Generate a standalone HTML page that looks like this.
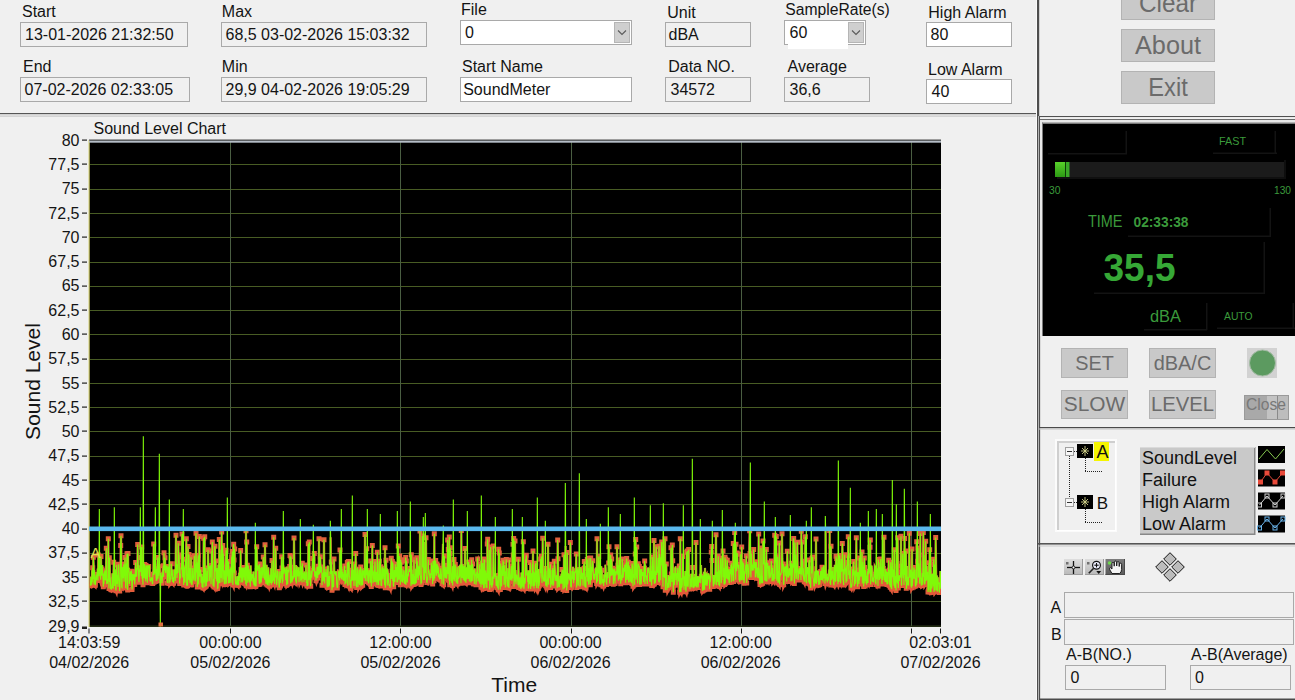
<!DOCTYPE html>
<html><head><meta charset="utf-8"><style>
html,body{margin:0;padding:0;background:#f0f0f0;width:1295px;height:700px;overflow:hidden}
svg{display:block}
text{font-family:"Liberation Sans", sans-serif}
</style></head><body>
<svg width="1295" height="700" viewBox="0 0 1295 700">
<rect x="0" y="0" width="1295" height="700" fill="#f0f0f0"/>
<text x="22" y="17" font-size="16" fill="#141414" >Start</text>
<text x="23" y="72" font-size="16" fill="#141414" >End</text>
<text x="221.8" y="17" font-size="16" fill="#141414" >Max</text>
<text x="221.8" y="72" font-size="16" fill="#141414" >Min</text>
<text x="461" y="14.5" font-size="16" fill="#141414" >File</text>
<text x="462" y="71.5" font-size="16" fill="#141414" >Start Name</text>
<text x="667.2" y="18" font-size="16" fill="#141414" >Unit</text>
<text x="668.2" y="71.5" font-size="16" fill="#141414" >Data NO.</text>
<text x="785.3" y="14.5" font-size="16" fill="#141414" textLength="104.5" lengthAdjust="spacingAndGlyphs" >SampleRate(s)</text>
<text x="787.5" y="71.5" font-size="16" fill="#141414" >Average</text>
<text x="928.3" y="18" font-size="16" fill="#141414" >High Alarm</text>
<text x="928" y="75" font-size="16" fill="#141414" >Low Alarm</text>
<rect x="20.5" y="22.5" width="167" height="24" fill="#f0f0f0" stroke="#a9a9a9" stroke-width="1" />
<text x="25" y="40" font-size="16" fill="#141414" >13-01-2026 21:32:50</text>
<rect x="20.5" y="77.5" width="169" height="24" fill="#f0f0f0" stroke="#a9a9a9" stroke-width="1" />
<text x="24.5" y="94.5" font-size="16" fill="#141414" >07-02-2026 02:33:05</text>
<rect x="221.5" y="22.5" width="205" height="24" fill="#f0f0f0" stroke="#a9a9a9" stroke-width="1" />
<text x="225.5" y="40" font-size="16" fill="#141414" >68,5 03-02-2026 15:03:32</text>
<rect x="221.5" y="77.5" width="205" height="24" fill="#f0f0f0" stroke="#a9a9a9" stroke-width="1" />
<text x="225.5" y="94.5" font-size="16" fill="#141414" >29,9 04-02-2026 19:05:29</text>
<rect x="460.5" y="20.5" width="171" height="24" fill="#ffffff" stroke="#a9a9a9" stroke-width="1" />
<rect x="614.5" y="22.5" width="15" height="20" fill="#cfcfcf" stroke="#b5b5b5" stroke-width="1" />
<polyline points="618.0,30.5 622.0,34.5 626.0,30.5" fill="none" stroke="#5a5a5a" stroke-width="1.1"/>
<text x="465" y="38" font-size="16" fill="#141414" >0</text>
<rect x="460.5" y="77.5" width="171" height="24" fill="#ffffff" stroke="#a9a9a9" stroke-width="1" />
<text x="463.2" y="94.5" font-size="16" fill="#141414" >SoundMeter</text>
<rect x="665.5" y="22.5" width="85" height="24" fill="#f0f0f0" stroke="#a9a9a9" stroke-width="1" />
<text x="668.5" y="39.5" font-size="16" fill="#141414" >dBA</text>
<rect x="665.5" y="77.5" width="85" height="24" fill="#f0f0f0" stroke="#a9a9a9" stroke-width="1" />
<text x="670.5" y="94.5" font-size="16" fill="#141414" >34572</text>
<rect x="784.5" y="20.5" width="81" height="24" fill="#ffffff" stroke="#a9a9a9" stroke-width="1" />
<rect x="788" y="44" width="60" height="5" fill="#ffffff" />
<rect x="848.5" y="22.5" width="15" height="20" fill="#cfcfcf" stroke="#b5b5b5" stroke-width="1" />
<polyline points="852.0,30.5 856.0,34.5 860.0,30.5" fill="none" stroke="#5a5a5a" stroke-width="1.1"/>
<text x="789.5" y="38" font-size="16" fill="#141414" >60</text>
<rect x="784.5" y="77.5" width="85" height="24" fill="#f0f0f0" stroke="#a9a9a9" stroke-width="1" />
<text x="789.5" y="94.5" font-size="16" fill="#141414" >36,6</text>
<rect x="926.5" y="22.5" width="85" height="24" fill="#ffffff" stroke="#a9a9a9" stroke-width="1" />
<text x="930.5" y="39.5" font-size="16" fill="#141414" >80</text>
<rect x="926.5" y="79.5" width="85" height="24" fill="#ffffff" stroke="#a9a9a9" stroke-width="1" />
<text x="931.5" y="96.5" font-size="16" fill="#141414" >40</text>
<rect x="0" y="113" width="1037" height="1.2" fill="#555555" />
<rect x="0" y="115.5" width="1037" height="1.2" fill="#c8c8c8" />
<rect x="1036" y="0" width="1" height="700" fill="#fafafa" />
<rect x="1037" y="0" width="1" height="700" fill="#4e4e4e" />
<rect x="1038" y="0" width="1" height="116" fill="#4e4e4e" />
<rect x="1038" y="116" width="1" height="584" fill="#b4b4b4" />
<rect x="1039" y="116" width="1" height="584" fill="#505050" />
<rect x="1039" y="0" width="1" height="116" fill="#d0d0d0" />
<rect x="1040" y="116" width="1" height="584" fill="#dadada" />
<rect x="1121.5" y="-12.5" width="93" height="32" fill="#c9c9c9" stroke="#b3b3b3" stroke-width="1" />
<text x="1168.0" y="11.8" font-size="25" fill="#6b6b6b" text-anchor="middle" textLength="58" lengthAdjust="spacingAndGlyphs" >Clear</text>
<rect x="1121.5" y="29.5" width="93" height="32" fill="#c9c9c9" stroke="#b3b3b3" stroke-width="1" />
<text x="1168.0" y="54" font-size="25" fill="#6b6b6b" text-anchor="middle" textLength="66" lengthAdjust="spacingAndGlyphs" >About</text>
<rect x="1121.5" y="71.5" width="93" height="32" fill="#c9c9c9" stroke="#b3b3b3" stroke-width="1" />
<text x="1168.0" y="95.5" font-size="25" fill="#6b6b6b" text-anchor="middle" textLength="39.5" lengthAdjust="spacingAndGlyphs" >Exit</text>
<rect x="1039" y="116" width="256" height="1.2" fill="#505050" />
<rect x="1040" y="117.2" width="255" height="1.8" fill="#f0f0f0" />
<rect x="1040" y="119" width="255" height="1" fill="#6a6a6a" />
<rect x="1040" y="120" width="255" height="2.5" fill="#e8e8e8" />
<rect x="1040" y="120" width="2" height="216" fill="#e8e8e8" />
<rect x="1042" y="122.5" width="253" height="1.5" fill="#7a7a7a" />
<rect x="1042" y="122.5" width="1" height="213.5" fill="#7a7a7a" />
<rect x="1043" y="124" width="252" height="212" fill="#000000" />
<rect x="1048" y="153" width="79" height="1.5" fill="#131313" />
<rect x="1125.5" y="131" width="1.5" height="23" fill="#131313" />
<rect x="1213" y="152.5" width="64" height="1.5" fill="#131313" />
<rect x="1274.5" y="131" width="1.5" height="23" fill="#131313" />
<text x="1219" y="145" font-size="11" fill="#3b9a3b" textLength="27" lengthAdjust="spacingAndGlyphs" >FAST</text>
<rect x="1055" y="162" width="229" height="15" fill="#1b1b1b" />
<rect x="1057" y="177" width="229" height="2" fill="#101010" />
<rect x="1284" y="160" width="2" height="19" fill="#0e0e0e" />
<defs><linearGradient id="gbar" x1="0" y1="0" x2="0" y2="1"><stop offset="0" stop-color="#58d02a"/><stop offset="1" stop-color="#2c9a14"/></linearGradient></defs>
<rect x="1055" y="162" width="10" height="15" fill="url(#gbar)" />
<rect x="1065" y="162" width="1" height="15" fill="#0d3a08" />
<rect x="1066" y="162" width="3.5" height="15" fill="#3aa828" />
<text x="1049" y="193.5" font-size="11" fill="#3b9a3b" textLength="11.5" lengthAdjust="spacingAndGlyphs" >30</text>
<text x="1274" y="194" font-size="11" fill="#3b9a3b" textLength="17" lengthAdjust="spacingAndGlyphs" >130</text>
<text x="1088" y="227" font-size="17" fill="#3b9a3b" textLength="34.5" lengthAdjust="spacingAndGlyphs" >TIME</text>
<text x="1133.5" y="227" font-size="15" fill="#3b9a3b" font-weight="700" textLength="55" lengthAdjust="spacingAndGlyphs" >02:33:38</text>
<rect x="1128" y="235.5" width="143" height="1.5" fill="#131313" />
<rect x="1269.5" y="208" width="1.5" height="28" fill="#131313" />
<text x="1103.5" y="281" font-size="39" fill="#36a836" font-weight="700" textLength="72" lengthAdjust="spacingAndGlyphs" >35,5</text>
<rect x="1094" y="292.5" width="171" height="1.5" fill="#131313" />
<rect x="1263.5" y="242" width="1.5" height="52" fill="#131313" />
<text x="1150" y="322" font-size="16" fill="#3b9a3b" textLength="31" lengthAdjust="spacingAndGlyphs" >dBA</text>
<rect x="1144" y="329" width="63" height="1.5" fill="#131313" />
<rect x="1206" y="303" width="1.5" height="27" fill="#131313" />
<text x="1224" y="320" font-size="11" fill="#3b9a3b" textLength="28.5" lengthAdjust="spacingAndGlyphs" >AUTO</text>
<rect x="1217" y="327.5" width="78" height="1.5" fill="#131313" />
<rect x="1292.5" y="303" width="1.5" height="25" fill="#131313" />
<rect x="1061.5" y="348.5" width="66" height="29" fill="#c9c9c9" stroke="#b3b3b3" stroke-width="1" />
<text x="1094.5" y="369.5" font-size="21" fill="#6b6b6b" text-anchor="middle" textLength="38.5" lengthAdjust="spacingAndGlyphs" >SET</text>
<rect x="1149.5" y="348.5" width="66" height="29" fill="#c9c9c9" stroke="#b3b3b3" stroke-width="1" />
<text x="1182.5" y="369.5" font-size="21" fill="#6b6b6b" text-anchor="middle" textLength="57.5" lengthAdjust="spacingAndGlyphs" >dBA/C</text>
<rect x="1061.5" y="390.5" width="66" height="28" fill="#c9c9c9" stroke="#b3b3b3" stroke-width="1" />
<text x="1094.5" y="411" font-size="21" fill="#6b6b6b" text-anchor="middle" textLength="61.5" lengthAdjust="spacingAndGlyphs" >SLOW</text>
<rect x="1149.5" y="390.5" width="66" height="28" fill="#c9c9c9" stroke="#b3b3b3" stroke-width="1" />
<text x="1182.5" y="411" font-size="21" fill="#6b6b6b" text-anchor="middle" textLength="63" lengthAdjust="spacingAndGlyphs" >LEVEL</text>
<rect x="1247" y="348" width="30" height="30" fill="#d2d2d2" />
<circle cx="1262.5" cy="363" r="13" fill="#5c9a60" stroke="#a6bca6" stroke-width="1"/>
<rect x="1244" y="395" width="45" height="25" fill="#a9a9a9" />
<rect x="1267" y="395" width="10" height="25" fill="#c3c3c3" />
<rect x="1277" y="395" width="1" height="25" fill="#8a8a8a" />
<rect x="1278" y="395" width="11" height="25" fill="#bdbdbd" />
<rect x="1244.5" y="395.5" width="44" height="24" fill="none" stroke="#9a9a9a" stroke-width="1" />
<text x="1266" y="409.5" font-size="17" fill="#787878" text-anchor="middle" textLength="40" lengthAdjust="spacingAndGlyphs" >Close</text>
<rect x="1039" y="427" width="256" height="1.2" fill="#4a4a4a" />
<rect x="1039" y="428.5" width="256" height="1" fill="#c0c0c0" />
<rect x="1055" y="439" width="62" height="93" fill="#fbfbfb" />
<rect x="1057" y="441" width="58" height="89" fill="#cfcfcf" />
<rect x="1059" y="443" width="56" height="87" fill="#f0f0f0" />
<rect x="1115" y="441" width="1" height="89" fill="#ffffff" />
<rect x="1057" y="530" width="59" height="1" fill="#ffffff" />
<rect x="1065.5" y="447.5" width="8" height="8" fill="#f6f6f6" stroke="#a0a0a0" stroke-width="1" shape-rendering="crispEdges"/>
<rect x="1067" y="451" width="5" height="1" fill="#333333" />
<rect x="1077" y="444" width="16" height="14" fill="#000000" />
<g stroke="#d4d48a" stroke-width="0.9"><line x1="1081" y1="451" x2="1089" y2="451"/><line x1="1085" y1="446" x2="1085" y2="456"/><line x1="1082" y1="448" x2="1088" y2="454"/><line x1="1082" y1="454" x2="1088" y2="448"/></g>
<line x1="1074" y1="451.5" x2="1077" y2="451.5" stroke="#222" stroke-width="1" stroke-dasharray="1,1" shape-rendering="crispEdges"/>
<rect x="1094" y="442" width="15" height="19" fill="#f5f500" />
<text x="1096.5" y="457.5" font-size="18" fill="#111111" >A</text>
<line x1="1085.5" y1="458" x2="1085.5" y2="472" stroke="#222" stroke-width="1" stroke-dasharray="1,1" shape-rendering="crispEdges"/>
<line x1="1085" y1="471.5" x2="1102" y2="471.5" stroke="#222" stroke-width="1" stroke-dasharray="1,1" shape-rendering="crispEdges"/>
<rect x="1065.5" y="498.5" width="8" height="8" fill="#f6f6f6" stroke="#a0a0a0" stroke-width="1" shape-rendering="crispEdges"/>
<rect x="1067" y="502" width="5" height="1" fill="#333333" />
<rect x="1077" y="495" width="16" height="14" fill="#000000" />
<g stroke="#d4d48a" stroke-width="0.9"><line x1="1081" y1="502" x2="1089" y2="502"/><line x1="1085" y1="497" x2="1085" y2="507"/><line x1="1082" y1="499" x2="1088" y2="505"/><line x1="1082" y1="505" x2="1088" y2="499"/></g>
<line x1="1074" y1="502.5" x2="1077" y2="502.5" stroke="#222" stroke-width="1" stroke-dasharray="1,1" shape-rendering="crispEdges"/>
<text x="1096.8" y="508.5" font-size="17" fill="#111111" >B</text>
<line x1="1085.5" y1="509" x2="1085.5" y2="523" stroke="#222" stroke-width="1" stroke-dasharray="1,1" shape-rendering="crispEdges"/>
<line x1="1085" y1="522.5" x2="1102" y2="522.5" stroke="#222" stroke-width="1" stroke-dasharray="1,1" shape-rendering="crispEdges"/>
<line x1="1069.5" y1="456" x2="1069.5" y2="498" stroke="#222" stroke-width="1" stroke-dasharray="1,1" shape-rendering="crispEdges"/>
<rect x="1140" y="447" width="115" height="88" fill="#c9c9c9" />
<rect x="1254" y="447" width="1.5" height="88" fill="#888888" />
<rect x="1140" y="533.5" width="115" height="1.5" fill="#888888" />
<rect x="1140" y="447" width="115" height="1" fill="#dadada" />
<text x="1142" y="464" font-size="18" fill="#111111" >SoundLevel</text>
<text x="1142" y="486" font-size="18" fill="#111111" >Failure</text>
<text x="1142" y="508" font-size="18" fill="#111111" >High Alarm</text>
<text x="1142" y="530" font-size="18" fill="#111111" >Low Alarm</text>
<rect x="1258" y="446" width="27" height="17" fill="#000" />
<polyline points="1259,459 1267,449.5 1275.5,459 1284,449" fill="none" stroke="#86c850" stroke-width="1"/>
<rect x="1258" y="469.5" width="27" height="17" fill="#000" />
<polyline points="1260.5,482.0 1267,473.0 1275,482.0 1282.5,473.0" fill="none" stroke="#e04a3a" stroke-width="1"/>
<rect x="1258.0" y="479.5" width="5" height="5" fill="#e84a3a" />
<rect x="1264.5" y="470.5" width="5" height="5" fill="#e84a3a" />
<rect x="1272.5" y="479.5" width="5" height="5" fill="#e84a3a" />
<rect x="1280.0" y="470.5" width="5" height="5" fill="#e84a3a" />
<rect x="1258" y="492.5" width="27" height="17" fill="#000" />
<polyline points="1259.5,505.0 1267,496.0 1275,505.0 1283,496.0" fill="none" stroke="#d0d0d0" stroke-width="1"/>
<rect x="1257.5" y="503.0" width="4" height="4" fill="none" stroke="#d0d0d0" stroke-width="1" />
<rect x="1265" y="494.0" width="4" height="4" fill="none" stroke="#d0d0d0" stroke-width="1" />
<rect x="1273" y="503.0" width="4" height="4" fill="none" stroke="#d0d0d0" stroke-width="1" />
<rect x="1281" y="494.0" width="4" height="4" fill="none" stroke="#d0d0d0" stroke-width="1" />
<rect x="1258" y="515.5" width="27" height="17" fill="#000" />
<polyline points="1259.5,528.0 1267,519.0 1275,528.0 1283,519.0" fill="none" stroke="#6ab4ea" stroke-width="1"/>
<rect x="1257.5" y="526.0" width="4" height="4" fill="none" stroke="#6ab4ea" stroke-width="1" />
<rect x="1265" y="517.0" width="4" height="4" fill="none" stroke="#6ab4ea" stroke-width="1" />
<rect x="1273" y="526.0" width="4" height="4" fill="none" stroke="#6ab4ea" stroke-width="1" />
<rect x="1281" y="517.0" width="4" height="4" fill="none" stroke="#6ab4ea" stroke-width="1" />
<rect x="1038" y="543" width="257" height="1.6" fill="#555555" />
<rect x="1038" y="545.5" width="257" height="1" fill="#c8c8c8" />
<defs><linearGradient id="tbl" x1="0" y1="0" x2="0" y2="1"><stop offset="0" stop-color="#dedede"/><stop offset="1" stop-color="#b8b8b8"/></linearGradient><linearGradient id="tbd" x1="0" y1="0" x2="0" y2="1"><stop offset="0" stop-color="#7c7c7c"/><stop offset="1" stop-color="#5a5a5a"/></linearGradient></defs>
<rect x="1064" y="559" width="19" height="16" fill="url(#tbl)"/>
<path d="M1064,574.5H1083 M1082.5,559V575" stroke="#9c9c9c" stroke-width="1"/>
<rect x="1085" y="559" width="19" height="16" fill="url(#tbl)"/>
<path d="M1085,574.5H1104 M1103.5,559V575" stroke="#9c9c9c" stroke-width="1"/>
<rect x="1105.5" y="559" width="19.5" height="16" fill="url(#tbd)"/>
<path d="M1105.5,574.5H1125.0 M1124.5,559V575" stroke="#4a4a4a" stroke-width="1"/>
<g stroke="#111" stroke-width="1.3"><line x1="1067" y1="567.5" x2="1080" y2="567.5"/><line x1="1073.5" y1="561" x2="1073.5" y2="574"/></g><circle cx="1073.5" cy="567.5" r="1.4" fill="#fff" stroke="#111" stroke-width="0.9"/>
<rect x="1066" y="562" width="2.5" height="2.5" fill="#707070" />
<circle cx="1096.5" cy="565.2" r="3.9" fill="#eef0ff" stroke="#111" stroke-width="1.2"/><line x1="1094.3" y1="565.2" x2="1098.7" y2="565.2" stroke="#111" stroke-width="1.1"/><line x1="1096.5" y1="563" x2="1096.5" y2="567.4" stroke="#111" stroke-width="1.1"/><line x1="1093.7" y1="568.2" x2="1088.8" y2="573.2" stroke="#222" stroke-width="1.6"/><polygon points="1096.3,571 1101.2,571 1098.7,574" fill="#111"/>
<rect x="1087" y="562" width="2.5" height="2.5" fill="#707070" />
<path d="M1112,573.5 L1109.8,569.8 Q1109,568 1110.3,567.6 L1112,569 L1112,563.6 Q1112,562.4 1113,562.4 Q1114,562.4 1114,563.6 L1114.2,566.2 L1114.5,562.2 Q1114.5,561 1115.5,561 Q1116.5,561 1116.5,562.2 L1116.7,566 L1117,562.7 Q1117,561.5 1118,561.5 Q1119,561.5 1119,562.7 L1119.2,566.5 L1119.5,564.2 Q1119.5,563.2 1120.5,563.2 Q1121.6,563.2 1121.6,564.2 L1121.6,569.5 Q1121.4,572.3 1119.6,573.5 Z" fill="#f4f4f4" stroke="#111" stroke-width="0.9"/>
<circle cx="1109.5" cy="563" r="1.8" fill="#6ed84e"/>
<polygon points="1170,552.7 1176.3,559 1170,565.3 1163.7,559" fill="#bcbcbc" stroke="#111111" stroke-width="1"/>
<polygon points="1178,560.7 1184.3,567 1178,573.3 1171.7,567" fill="#bcbcbc" stroke="#111111" stroke-width="1"/>
<polygon points="1170,568.7 1176.3,575 1170,581.3 1163.7,575" fill="#bcbcbc" stroke="#111111" stroke-width="1"/>
<polygon points="1162,560.7 1168.3,567 1162,573.3 1155.7,567" fill="#bcbcbc" stroke="#111111" stroke-width="1"/>
<text x="1050.5" y="612.5" font-size="16" fill="#141414" >A</text>
<text x="1051" y="639.5" font-size="16" fill="#141414" >B</text>
<rect x="1064.5" y="592.5" width="229" height="25" fill="#f0f0f0" stroke="#a9a9a9" stroke-width="1" />
<rect x="1064.5" y="619.5" width="229" height="25" fill="#f0f0f0" stroke="#a9a9a9" stroke-width="1" />
<text x="1066" y="660" font-size="16" fill="#141414" >A-B(NO.)</text>
<text x="1191" y="660" font-size="16" fill="#141414" >A-B(Average)</text>
<rect x="1065.5" y="665.5" width="100" height="24" fill="#f0f0f0" stroke="#a9a9a9" stroke-width="1" />
<rect x="1190.5" y="665.5" width="100" height="24" fill="#f0f0f0" stroke="#a9a9a9" stroke-width="1" />
<text x="1070.5" y="682.5" font-size="16" fill="#141414" >0</text>
<text x="1195" y="682.5" font-size="16" fill="#141414" >0</text>
<rect x="1039" y="698.5" width="256" height="1.5" fill="#4a4a4a" />
<text x="93.5" y="133.8" font-size="16" fill="#141414" >Sound Level Chart</text>
<rect x="89" y="140" width="852" height="487" fill="#000000" />
<path d="M90,164.5H941 M90,189.5H941 M90,213.5H941 M90,237.5H941 M90,262.5H941 M90,286.5H941 M90,310.5H941 M90,334.5H941 M90,359.5H941 M90,383.5H941 M90,407.5H941 M90,431.5H941 M90,456.5H941 M90,480.5H941 M90,504.5H941 M90,529.5H941 M90,553.5H941 M90,577.5H941 M90,601.5H941" stroke="#485c24" stroke-width="1" fill="none"/>
<path d="M230.5,141V626 M400.5,141V626 M571.5,141V626 M741.5,141V626 M911.5,141V626" stroke="#4a5e42" stroke-width="1" fill="none"/>
<text x="79.5" y="145.8" font-size="16" fill="#141414" text-anchor="end" >80</text>
<rect x="82" y="139.5" width="5" height="1.2" fill="#222222" />
<text x="79.5" y="170.1" font-size="16" fill="#141414" text-anchor="end" >77,5</text>
<rect x="82" y="163.5" width="5" height="1.2" fill="#222222" />
<text x="79.5" y="194.3" font-size="16" fill="#141414" text-anchor="end" >75</text>
<rect x="82" y="188.5" width="5" height="1.2" fill="#222222" />
<text x="79.5" y="218.6" font-size="16" fill="#141414" text-anchor="end" >72,5</text>
<rect x="82" y="212.5" width="5" height="1.2" fill="#222222" />
<text x="79.5" y="242.9" font-size="16" fill="#141414" text-anchor="end" >70</text>
<rect x="82" y="236.5" width="5" height="1.2" fill="#222222" />
<text x="79.5" y="267.2" font-size="16" fill="#141414" text-anchor="end" >67,5</text>
<rect x="82" y="261.5" width="5" height="1.2" fill="#222222" />
<text x="79.5" y="291.4" font-size="16" fill="#141414" text-anchor="end" >65</text>
<rect x="82" y="285.5" width="5" height="1.2" fill="#222222" />
<text x="79.5" y="315.7" font-size="16" fill="#141414" text-anchor="end" >62,5</text>
<rect x="82" y="309.5" width="5" height="1.2" fill="#222222" />
<text x="79.5" y="340.0" font-size="16" fill="#141414" text-anchor="end" >60</text>
<rect x="82" y="333.5" width="5" height="1.2" fill="#222222" />
<text x="79.5" y="364.3" font-size="16" fill="#141414" text-anchor="end" >57,5</text>
<rect x="82" y="358.5" width="5" height="1.2" fill="#222222" />
<text x="79.5" y="388.5" font-size="16" fill="#141414" text-anchor="end" >55</text>
<rect x="82" y="382.5" width="5" height="1.2" fill="#222222" />
<text x="79.5" y="412.8" font-size="16" fill="#141414" text-anchor="end" >52,5</text>
<rect x="82" y="406.5" width="5" height="1.2" fill="#222222" />
<text x="79.5" y="437.1" font-size="16" fill="#141414" text-anchor="end" >50</text>
<rect x="82" y="430.5" width="5" height="1.2" fill="#222222" />
<text x="79.5" y="461.3" font-size="16" fill="#141414" text-anchor="end" >47,5</text>
<rect x="82" y="455.5" width="5" height="1.2" fill="#222222" />
<text x="79.5" y="485.6" font-size="16" fill="#141414" text-anchor="end" >45</text>
<rect x="82" y="479.5" width="5" height="1.2" fill="#222222" />
<text x="79.5" y="509.9" font-size="16" fill="#141414" text-anchor="end" >42,5</text>
<rect x="82" y="503.5" width="5" height="1.2" fill="#222222" />
<text x="79.5" y="534.2" font-size="16" fill="#141414" text-anchor="end" >40</text>
<rect x="82" y="528.5" width="5" height="1.2" fill="#222222" />
<text x="79.5" y="558.4" font-size="16" fill="#141414" text-anchor="end" >37,5</text>
<rect x="82" y="552.5" width="5" height="1.2" fill="#222222" />
<text x="79.5" y="582.7" font-size="16" fill="#141414" text-anchor="end" >35</text>
<rect x="82" y="576.5" width="5" height="1.2" fill="#222222" />
<text x="79.5" y="607.0" font-size="16" fill="#141414" text-anchor="end" >32,5</text>
<rect x="82" y="600.5" width="5" height="1.2" fill="#222222" />
<text x="79.5" y="632.2" font-size="16" fill="#141414" text-anchor="end" >29,9</text>
<rect x="82" y="626.5" width="5" height="2.5" fill="#222222" />
<text x="0" y="0" font-size="21" fill="#141414" text-anchor="middle" transform="translate(40,381.5) rotate(-90)">Sound Level</text>
<text x="89.2" y="648" font-size="16" fill="#141414" text-anchor="middle" >14:03:59</text>
<text x="89.2" y="667.5" font-size="16" fill="#141414" text-anchor="middle" >04/02/2026</text>
<text x="230.4" y="648" font-size="16" fill="#141414" text-anchor="middle" >00:00:00</text>
<text x="230.4" y="667.5" font-size="16" fill="#141414" text-anchor="middle" >05/02/2026</text>
<text x="400.5" y="648" font-size="16" fill="#141414" text-anchor="middle" >12:00:00</text>
<text x="400.5" y="667.5" font-size="16" fill="#141414" text-anchor="middle" >05/02/2026</text>
<text x="570.6" y="648" font-size="16" fill="#141414" text-anchor="middle" >00:00:00</text>
<text x="570.6" y="667.5" font-size="16" fill="#141414" text-anchor="middle" >06/02/2026</text>
<text x="740.7" y="648" font-size="16" fill="#141414" text-anchor="middle" >12:00:00</text>
<text x="740.7" y="667.5" font-size="16" fill="#141414" text-anchor="middle" >06/02/2026</text>
<text x="940.5" y="648" font-size="16" fill="#141414" text-anchor="middle" >02:03:01</text>
<text x="940.5" y="667.5" font-size="16" fill="#141414" text-anchor="middle" >07/02/2026</text>
<rect x="88.5" y="628.5" width="1" height="5" fill="#1a1a1a" />
<rect x="230" y="628.5" width="1" height="5" fill="#1a1a1a" />
<rect x="400" y="628.5" width="1" height="5" fill="#1a1a1a" />
<rect x="571" y="628.5" width="1" height="5" fill="#1a1a1a" />
<rect x="741" y="628.5" width="1" height="5" fill="#1a1a1a" />
<rect x="911" y="628.5" width="1" height="5" fill="#1a1a1a" />
<rect x="940" y="628.5" width="1" height="5" fill="#1a1a1a" />
<text x="491.2" y="691.5" font-size="21" fill="#141414" >Time</text>
<rect x="89" y="625.6" width="852" height="1" fill="#3a4a22" />
<rect x="88.5" y="140" width="1.2" height="487" fill="#d4d070" />
<rect x="89" y="139.5" width="852" height="1.2" fill="#4a4a4a" />
<rect x="89" y="140.7" width="852" height="2" fill="#b4bcc6" />
<clipPath id="plotclip"><rect x="89.5" y="141" width="851.5" height="486"/></clipPath><g clip-path="url(#plotclip)">
<path d="M90.00,584.2 L90.33,585.8 L90.67,579.8 L91.00,576.9 L91.33,578.4 L91.67,585.3 L92.00,570.3 L92.33,582.5 L92.67,567.7 L93.00,578.9 L93.33,557.2 L93.67,563.7 L94.00,584.4 L94.33,570.1 L94.67,574.8 L95.00,579.0 L95.33,585.3 L95.67,582.3 L96.00,577.7 L96.33,574.5 L96.67,580.3 L97.00,572.1 L97.33,574.6 L97.67,568.5 L98.00,580.4 L98.33,555.1 L98.67,570.8 L99.00,576.3M99.67,574.6 L100.00,564.7 L100.33,577.0 L100.67,579.8 L101.00,556.4 L101.33,575.6 L101.67,574.8 L102.00,568.9 L102.33,565.0 L102.67,575.5 L103.00,579.7 L103.33,586.7 L103.67,573.4 L104.00,584.0 L104.33,571.3 L104.67,579.9 L105.00,571.0 L105.33,571.4 L105.67,580.5 L106.00,571.0 L106.33,548.3 L106.67,584.3 L107.00,579.2 L107.33,583.8 L107.67,580.7 L108.00,577.8 L108.33,538.8 L108.67,577.0 L109.00,588.6 L109.33,557.8 L109.67,558.5 L110.00,582.0 L110.33,577.4 L110.67,589.1 L111.00,587.3 L111.33,589.7 L111.67,587.8 L112.00,583.6 L112.33,573.2 L112.67,588.1 L113.00,584.1 L113.33,588.8 L113.67,562.2 L114.00,581.4M114.67,585.9 L115.00,569.5 L115.33,571.9 L115.67,588.4 L116.00,590.8 L116.33,571.4 L116.67,564.9 L117.00,584.0 L117.33,575.7 L117.67,575.6 L118.00,587.0 L118.33,571.5 L118.67,564.2 L119.00,576.5 L119.33,581.1 L119.67,591.1 L120.00,586.0 L120.33,577.6 L120.67,545.6 L121.00,535.7 L121.33,547.2 L121.67,587.1 L122.00,587.6 L122.33,573.4 L122.67,567.1 L123.00,575.4 L123.33,578.1 L123.67,564.3 L124.00,581.7 L124.33,575.3 L124.67,574.9 L125.00,557.4 L125.33,571.8 L125.67,587.5 L126.00,587.8 L126.33,563.3 L126.67,573.8 L127.00,553.7 L127.33,579.2 L127.67,590.0 L128.00,553.5 L128.33,571.1 L128.67,572.3 L129.00,567.8 L129.33,584.0 L129.67,578.0 L130.00,581.4 L130.33,571.4 L130.67,580.6 L131.00,571.5 L131.33,571.2 L131.67,579.1 L132.00,589.6 L132.33,586.3 L132.67,573.7 L133.00,580.4 L133.33,578.7 L133.67,579.5 L134.00,574.1 L134.33,578.7 L134.67,584.5 L135.00,579.8 L135.33,571.8 L135.67,562.4 L136.00,577.0 L136.33,573.2 L136.67,576.4 L137.00,568.1 L137.33,569.4 L137.67,544.6 L138.00,568.0 L138.33,564.9 L138.67,578.1 L139.00,582.2 L139.33,573.3 L139.67,568.6 L140.00,572.1M140.67,557.6 L141.00,566.8 L141.33,576.1 L141.67,547.0 L142.00,576.9 L142.33,578.6 L142.67,578.8 L143.00,584.7M143.67,578.0 L144.00,574.2 L144.33,564.4 L144.67,564.5 L145.00,578.8 L145.33,568.3 L145.67,581.4 L146.00,565.4 L146.33,578.7 L146.67,565.2 L147.00,569.7 L147.33,582.8 L147.67,575.3 L148.00,564.8 L148.33,567.6 L148.67,566.5 L149.00,566.3 L149.33,577.0 L149.67,565.1 L150.00,581.3 L150.33,579.1 L150.67,580.7 L151.00,579.9 L151.33,577.8 L151.67,578.1 L152.00,580.3 L152.33,583.6 L152.67,583.6 L153.00,572.7 L153.33,574.2 L153.67,544.1 L154.00,575.1 L154.33,566.8 L154.67,573.5 L155.00,563.8M155.67,570.8 L156.00,576.7 L156.33,581.1 L156.67,568.7 L157.00,580.4 L157.33,566.6 L157.67,557.5 L158.00,578.8 L158.33,574.4 L158.67,574.7 L159.00,564.2M159.67,564.1 L160.00,576.5M160.67,573.5 L161.00,573.4 L161.33,578.3 L161.67,575.6 L162.00,583.2 L162.33,578.9 L162.67,572.9 L163.00,570.2 L163.33,565.7 L163.67,577.0 L164.00,552.8 L164.33,570.5 L164.67,566.6 L165.00,557.7 L165.33,567.1 L165.67,572.9 L166.00,566.6 L166.33,566.8 L166.67,565.4 L167.00,569.5 L167.33,583.0 L167.67,576.3 L168.00,566.6 L168.33,570.8 L168.67,569.8 L169.00,583.6M169.67,572.7 L170.00,582.3 L170.33,578.5 L170.67,578.2 L171.00,579.4 L171.33,563.7 L171.67,575.8 L172.00,569.7 L172.33,571.0 L172.67,582.0 L173.00,578.4 L173.33,577.3 L173.67,583.2 L174.00,578.0 L174.33,569.4 L174.67,577.5 L175.00,574.0 L175.33,581.0 L175.67,559.9 L176.00,535.3 L176.33,574.1 L176.67,563.7 L177.00,577.9 L177.33,564.2 L177.67,571.6 L178.00,572.8 L178.33,543.2 L178.67,557.1 L179.00,555.1 L179.33,565.5 L179.67,583.4 L180.00,574.0 L180.33,578.0 L180.67,577.3 L181.00,567.4 L181.33,569.4 L181.67,563.4 L182.00,534.1 L182.33,562.3 L182.67,577.4 L183.00,549.6M183.67,585.0 L184.00,569.1 L184.33,567.2 L184.67,581.0 L185.00,582.7 L185.33,567.1 L185.67,559.2 L186.00,568.1 L186.33,538.8 L186.67,585.8 L187.00,577.6 L187.33,573.7 L187.67,585.8 L188.00,546.5 L188.33,579.7 L188.67,571.6 L189.00,554.5 L189.33,580.5 L189.67,578.5 L190.00,583.2 L190.33,568.0 L190.67,581.9 L191.00,557.3 L191.33,583.5 L191.67,584.4 L192.00,584.4 L192.33,580.9 L192.67,568.1 L193.00,577.8 L193.33,575.5 L193.67,579.3 L194.00,580.6 L194.33,555.7 L194.67,573.5 L195.00,564.1 L195.33,581.4 L195.67,577.5 L196.00,533.2 L196.33,566.2 L196.67,572.4 L197.00,562.5 L197.33,587.1 L197.67,568.3 L198.00,559.5 L198.33,555.4 L198.67,584.4 L199.00,573.8 L199.33,536.6 L199.67,572.3 L200.00,576.7 L200.33,572.1 L200.67,569.4 L201.00,582.0 L201.33,583.2 L201.67,574.1 L202.00,586.9 L202.33,576.5 L202.67,583.8 L203.00,588.1 L203.33,578.8 L203.67,538.3 L204.00,559.3 L204.33,582.7 L204.67,536.7 L205.00,587.0 L205.33,573.5 L205.67,581.8 L206.00,567.9 L206.33,585.9 L206.67,577.8 L207.00,582.1 L207.33,570.9 L207.67,581.6 L208.00,549.7 L208.33,561.3 L208.67,569.8 L209.00,565.8 L209.33,581.3 L209.67,576.6 L210.00,565.7 L210.33,577.1 L210.67,565.3 L211.00,584.2 L211.33,577.4 L211.67,551.1 L212.00,565.4 L212.33,542.0 L212.67,567.1 L213.00,585.7 L213.33,578.9 L213.67,580.1 L214.00,587.1 L214.33,580.2 L214.67,547.5 L215.00,546.2 L215.33,571.4 L215.67,561.1 L216.00,578.9 L216.33,570.0 L216.67,581.4 L217.00,568.1 L217.33,572.5 L217.67,588.3 L218.00,587.9 L218.33,564.6 L218.67,570.8 L219.00,583.4 L219.33,539.6 L219.67,574.1 L220.00,582.9 L220.33,573.0 L220.67,557.5 L221.00,549.7 L221.33,578.1 L221.67,532.1 L222.00,582.2 L222.33,577.0 L222.67,545.6 L223.00,571.5 L223.33,553.5 L223.67,579.5 L224.00,578.6 L224.33,584.2 L224.67,570.3 L225.00,584.2 L225.33,574.2 L225.67,565.4 L226.00,550.3 L226.33,583.7 L226.67,575.3 L227.00,576.4M227.67,572.0 L228.00,568.7 L228.33,583.6 L228.67,561.6 L229.00,578.9 L229.33,582.7 L229.67,581.9 L230.00,569.1 L230.33,580.7 L230.67,567.4 L231.00,583.1 L231.33,574.7 L231.67,556.7 L232.00,571.7 L232.33,551.4 L232.67,582.7 L233.00,584.9 L233.33,544.9 L233.67,544.2 L234.00,559.9 L234.33,573.1 L234.67,549.0 L235.00,576.1 L235.33,581.2 L235.67,584.4 L236.00,576.2 L236.33,584.1 L236.67,581.5 L237.00,584.2 L237.33,583.6 L237.67,576.4 L238.00,585.3 L238.33,576.0 L238.67,585.2 L239.00,572.7 L239.33,580.9 L239.67,567.1 L240.00,574.8 L240.33,577.7 L240.67,550.6 L241.00,582.0 L241.33,581.8 L241.67,567.5 L242.00,569.2 L242.33,567.9 L242.67,582.6 L243.00,574.7 L243.33,567.5 L243.67,573.4 L244.00,575.9 L244.33,580.4 L244.67,567.4 L245.00,576.4 L245.33,566.8 L245.67,584.0 L246.00,530.8 L246.33,585.7 L246.67,541.9 L247.00,561.2 L247.33,565.3 L247.67,582.7 L248.00,570.0 L248.33,565.4 L248.67,579.3 L249.00,579.7 L249.33,582.5 L249.67,569.2 L250.00,576.1 L250.33,586.8 L250.67,565.4 L251.00,576.3 L251.33,581.3 L251.67,575.6 L252.00,574.1 L252.33,578.5 L252.67,574.8 L253.00,582.6 L253.33,571.5 L253.67,583.7 L254.00,585.2 L254.33,578.6 L254.67,578.3 L255.00,586.5M255.67,571.4 L256.00,586.1 L256.33,579.5 L256.67,546.8 L257.00,557.8 L257.33,570.6 L257.67,567.2 L258.00,567.7 L258.33,565.3 L258.67,568.1 L259.00,579.9 L259.33,583.8 L259.67,563.9 L260.00,583.9 L260.33,567.9 L260.67,581.2 L261.00,579.9 L261.33,582.6 L261.67,567.1 L262.00,567.8 L262.33,569.9 L262.67,574.9 L263.00,578.3 L263.33,557.1 L263.67,567.4 L264.00,565.0 L264.33,577.1 L264.67,579.7 L265.00,544.8 L265.33,569.4 L265.67,581.3 L266.00,583.9 L266.33,579.8 L266.67,564.9 L267.00,571.5 L267.33,585.1 L267.67,582.3 L268.00,576.7 L268.33,567.4 L268.67,581.3 L269.00,585.7 L269.33,579.1 L269.67,579.3 L270.00,574.9 L270.33,582.9 L270.67,577.6 L271.00,568.4 L271.33,584.7 L271.67,575.0 L272.00,560.4 L272.33,582.9 L272.67,575.3 L273.00,581.5 L273.33,579.6 L273.67,537.3 L274.00,570.3 L274.33,577.9 L274.67,583.9 L275.00,572.8 L275.33,577.5 L275.67,548.2 L276.00,576.3 L276.33,575.6 L276.67,585.1 L277.00,582.5 L277.33,570.5 L277.67,574.0 L278.00,571.4 L278.33,579.1 L278.67,579.3 L279.00,586.4 L279.33,587.7 L279.67,573.2 L280.00,571.2 L280.33,583.0 L280.67,579.6 L281.00,577.8 L281.33,575.3 L281.67,556.8 L282.00,567.9 L282.33,583.6 L282.67,569.1 L283.00,581.6M283.67,569.4 L284.00,573.6 L284.33,567.6 L284.67,570.2 L285.00,569.6 L285.33,572.0 L285.67,580.3 L286.00,573.6 L286.33,567.5 L286.67,585.2 L287.00,566.6 L287.33,582.4 L287.67,584.2 L288.00,571.9 L288.33,569.7 L288.67,572.5 L289.00,567.7 L289.33,566.1 L289.67,566.5 L290.00,555.6 L290.33,580.0 L290.67,583.5 L291.00,556.8 L291.33,567.5 L291.67,578.6 L292.00,582.5 L292.33,580.5 L292.67,576.1 L293.00,579.6 L293.33,570.4 L293.67,578.6 L294.00,538.1 L294.33,559.6 L294.67,577.1 L295.00,569.9 L295.33,571.4 L295.67,581.5 L296.00,564.9 L296.33,582.7 L296.67,582.1 L297.00,566.4 L297.33,576.4 L297.67,570.2 L298.00,576.4 L298.33,569.5 L298.67,567.3 L299.00,582.2 L299.33,576.5 L299.67,573.8 L300.00,570.9M300.67,579.9 L301.00,579.3 L301.33,566.3 L301.67,567.0 L302.00,582.4 L302.33,563.2 L302.67,570.1 L303.00,578.8 L303.33,573.0 L303.67,575.4 L304.00,582.0 L304.33,571.6 L304.67,573.8 L305.00,580.0 L305.33,577.3 L305.67,579.7 L306.00,564.9 L306.33,583.0 L306.67,571.9 L307.00,585.9 L307.33,582.3 L307.67,585.6 L308.00,584.8 L308.33,543.8 L308.67,568.7 L309.00,580.3 L309.33,541.9 L309.67,578.8 L310.00,574.4 L310.33,583.0 L310.67,586.2 L311.00,570.6 L311.33,576.3 L311.67,576.8 L312.00,573.8 L312.33,570.8 L312.67,558.6 L313.00,570.4M313.67,567.7 L314.00,571.4 L314.33,553.6 L314.67,576.4 L315.00,572.9 L315.33,577.2 L315.67,571.3 L316.00,580.8 L316.33,576.6 L316.67,577.6 L317.00,567.0 L317.33,572.7 L317.67,578.1 L318.00,566.2 L318.33,575.1 L318.67,570.2 L319.00,538.8 L319.33,574.5 L319.67,571.7 L320.00,573.3 L320.33,556.7 L320.67,567.1 L321.00,572.5 L321.33,570.9 L321.67,566.4 L322.00,585.3 L322.33,578.4 L322.67,578.1 L323.00,572.5 L323.33,581.5 L323.67,571.9 L324.00,539.7 L324.33,571.1 L324.67,583.4 L325.00,572.1 L325.33,575.3 L325.67,577.0 L326.00,569.1 L326.33,576.0 L326.67,572.6 L327.00,583.5 L327.33,587.2 L327.67,565.7 L328.00,566.9 L328.33,585.2 L328.67,586.7 L329.00,575.9 L329.33,585.8 L329.67,581.0 L330.00,577.8M330.67,537.2 L331.00,573.9 L331.33,562.0 L331.67,573.7 L332.00,590.3 L332.33,571.1 L332.67,585.3 L333.00,587.4 L333.33,574.4 L333.67,587.0 L334.00,559.1 L334.33,571.7 L334.67,573.9 L335.00,571.5 L335.33,572.5 L335.67,575.4 L336.00,574.3 L336.33,571.4 L336.67,583.9 L337.00,586.4 L337.33,588.0 L337.67,586.2 L338.00,578.9 L338.33,571.5 L338.67,571.9 L339.00,577.6 L339.33,572.0 L339.67,580.6 L340.00,549.9 L340.33,576.3 L340.67,576.9 L341.00,570.4M341.67,579.6 L342.00,568.9 L342.33,576.9 L342.67,572.1 L343.00,580.1 L343.33,574.1 L343.67,581.0 L344.00,578.6 L344.33,567.0 L344.67,566.0 L345.00,584.4 L345.33,570.1 L345.67,573.8 L346.00,583.5 L346.33,578.0 L346.67,573.9 L347.00,575.1 L347.33,562.6 L347.67,583.6 L348.00,585.8 L348.33,561.4 L348.67,573.4 L349.00,561.4 L349.33,576.6 L349.67,577.1 L350.00,584.9 L350.33,579.8 L350.67,587.0 L351.00,588.2 L351.33,570.2 L351.67,581.3 L352.00,561.4M352.67,580.0 L353.00,579.8 L353.33,569.5 L353.67,576.9 L354.00,586.0 L354.33,576.7 L354.67,564.1 L355.00,580.4 L355.33,569.1 L355.67,553.5 L356.00,586.0 L356.33,583.6 L356.67,587.5 L357.00,573.8 L357.33,567.9 L357.67,569.8 L358.00,587.0 L358.33,582.3 L358.67,583.3 L359.00,571.2 L359.33,569.5 L359.67,585.1 L360.00,572.3 L360.33,567.6 L360.67,566.9 L361.00,586.3 L361.33,573.2 L361.67,584.8 L362.00,571.5 L362.33,568.8 L362.67,585.2 L363.00,574.7 L363.33,572.7 L363.67,570.3 L364.00,573.5 L364.33,578.2 L364.67,570.8 L365.00,534.6 L365.33,581.1 L365.67,567.3 L366.00,570.4 L366.33,575.1 L366.67,548.8 L367.00,581.4M367.67,574.0 L368.00,569.8 L368.33,582.4 L368.67,582.8 L369.00,576.3 L369.33,570.2 L369.67,571.4 L370.00,570.7 L370.33,582.8 L370.67,560.9 L371.00,569.6 L371.33,586.4 L371.67,571.8 L372.00,572.7 L372.33,545.6 L372.67,573.9 L373.00,583.3 L373.33,572.1 L373.67,577.8 L374.00,570.6 L374.33,582.1 L374.67,568.4 L375.00,561.6 L375.33,574.4 L375.67,582.3 L376.00,571.8 L376.33,574.5 L376.67,575.4 L377.00,584.9 L377.33,552.3 L377.67,572.8 L378.00,582.5 L378.33,578.7 L378.67,585.3 L379.00,565.6 L379.33,561.3 L379.67,580.7 L380.00,577.5M380.67,566.8 L381.00,585.8 L381.33,583.1 L381.67,585.9 L382.00,569.4 L382.33,568.0 L382.67,566.6 L383.00,579.6 L383.33,568.3 L383.67,576.5 L384.00,568.7 L384.33,580.3 L384.67,585.2 L385.00,547.8 L385.33,587.8 L385.67,581.4 L386.00,560.3 L386.33,567.8 L386.67,574.1 L387.00,568.5 L387.33,585.6 L387.67,569.4 L388.00,582.4 L388.33,573.0 L388.67,581.8 L389.00,585.8 L389.33,584.9 L389.67,585.3 L390.00,588.0 L390.33,584.2 L390.67,569.2 L391.00,569.0 L391.33,558.2 L391.67,578.9 L392.00,569.0 L392.33,561.5 L392.67,581.0 L393.00,563.3 L393.33,584.9 L393.67,586.7 L394.00,576.5 L394.33,570.0 L394.67,579.3 L395.00,582.1 L395.33,564.2 L395.67,577.4 L396.00,568.8 L396.33,567.1 L396.67,568.7 L397.00,582.4M397.67,582.2 L398.00,565.9 L398.33,546.0 L398.67,579.8 L399.00,564.6 L399.33,579.4 L399.67,555.9 L400.00,578.1 L400.33,584.8 L400.67,559.8 L401.00,575.8 L401.33,562.3 L401.67,581.7 L402.00,568.8 L402.33,580.5 L402.67,582.7 L403.00,574.4 L403.33,580.4 L403.67,570.2 L404.00,572.9 L404.33,583.5 L404.67,576.6 L405.00,583.9 L405.33,578.4 L405.67,557.4 L406.00,585.1 L406.33,561.0 L406.67,563.0 L407.00,568.8 L407.33,582.6 L407.67,573.9 L408.00,575.5 L408.33,575.7 L408.67,571.7 L409.00,568.7 L409.33,571.9 L409.67,571.1 L410.00,568.6M410.67,575.6 L411.00,586.0 L411.33,554.7 L411.67,584.3 L412.00,569.7 L412.33,584.4 L412.67,582.4 L413.00,574.1 L413.33,575.7 L413.67,584.3 L414.00,559.7 L414.33,583.8 L414.67,576.1 L415.00,583.8 L415.33,583.5 L415.67,568.7 L416.00,574.6 L416.33,582.9 L416.67,557.7 L417.00,577.7 L417.33,561.2 L417.67,567.0 L418.00,579.3 L418.33,579.4 L418.67,566.2 L419.00,567.5 L419.33,568.8 L419.67,575.5 L420.00,530.9 L420.33,577.4 L420.67,578.5 L421.00,584.4 L421.33,575.5 L421.67,582.9 L422.00,547.5 L422.33,536.0 L422.67,567.5 L423.00,564.8M423.67,579.8 L424.00,566.4 L424.33,580.1 L424.67,576.3 L425.00,542.0M425.67,573.0 L426.00,537.7 L426.33,575.6 L426.67,582.0 L427.00,582.4 L427.33,576.8 L427.67,580.1 L428.00,573.9 L428.33,559.4 L428.67,571.9 L429.00,570.7 L429.33,574.0 L429.67,575.6 L430.00,580.3 L430.33,574.8 L430.67,573.3 L431.00,578.1 L431.33,562.8 L431.67,575.3 L432.00,565.2 L432.33,569.6 L432.67,584.0 L433.00,561.1 L433.33,577.4 L433.67,570.3 L434.00,580.7 L434.33,533.8 L434.67,578.4 L435.00,571.5 L435.33,568.0 L435.67,560.4 L436.00,570.2 L436.33,575.6 L436.67,570.9 L437.00,563.9 L437.33,564.9 L437.67,573.4 L438.00,565.8 L438.33,576.9 L438.67,567.6 L439.00,577.7 L439.33,576.1 L439.67,579.5 L440.00,574.2 L440.33,578.9 L440.67,568.2 L441.00,576.5 L441.33,579.3 L441.67,573.8 L442.00,583.7 L442.33,562.0 L442.67,556.3 L443.00,543.9M443.67,584.7 L444.00,575.6 L444.33,555.9 L444.67,565.5 L445.00,575.4 L445.33,578.1 L445.67,574.0 L446.00,566.9 L446.33,575.7 L446.67,578.8 L447.00,575.1 L447.33,568.7 L447.67,539.9 L448.00,574.1 L448.33,549.6 L448.67,570.3 L449.00,580.5 L449.33,536.9 L449.67,584.8 L450.00,553.4 L450.33,547.7 L450.67,558.7 L451.00,581.1 L451.33,576.6 L451.67,583.0 L452.00,574.3 L452.33,566.2 L452.67,585.4 L453.00,570.1M453.67,579.5 L454.00,559.5 L454.33,581.3 L454.67,573.9 L455.00,571.8 L455.33,564.5 L455.67,576.3 L456.00,581.3 L456.33,582.2 L456.67,580.8 L457.00,567.5 L457.33,567.8 L457.67,583.9 L458.00,577.6 L458.33,577.0 L458.67,578.8 L459.00,565.9 L459.33,577.2 L459.67,576.4 L460.00,566.1 L460.33,564.7 L460.67,571.6 L461.00,583.3 L461.33,530.6 L461.67,565.9 L462.00,578.0 L462.33,564.6 L462.67,564.8 L463.00,576.2 L463.33,579.6 L463.67,566.2 L464.00,567.9 L464.33,580.5 L464.67,580.3 L465.00,548.6 L465.33,581.8 L465.67,576.3 L466.00,582.9 L466.33,567.4 L466.67,579.3 L467.00,578.6M467.67,577.5 L468.00,570.2 L468.33,579.1 L468.67,562.0 L469.00,567.7 L469.33,581.5 L469.67,570.1 L470.00,565.4 L470.33,565.6 L470.67,580.4 L471.00,582.4 L471.33,579.8 L471.67,559.7 L472.00,580.2 L472.33,581.0 L472.67,563.9 L473.00,574.4 L473.33,569.7 L473.67,572.1 L474.00,579.3 L474.33,583.9 L474.67,568.4 L475.00,572.3 L475.33,574.5 L475.67,575.8 L476.00,584.8 L476.33,581.7 L476.67,571.8 L477.00,578.3 L477.33,559.5 L477.67,558.9 L478.00,581.4 L478.33,573.3 L478.67,580.1 L479.00,574.0 L479.33,582.5 L479.67,564.2 L480.00,584.1 L480.33,569.3 L480.67,573.5 L481.00,587.3M481.67,580.5 L482.00,581.9 L482.33,584.7 L482.67,563.0 L483.00,583.3 L483.33,574.6 L483.67,588.6 L484.00,559.1 L484.33,588.0 L484.67,560.1 L485.00,584.1 L485.33,573.0 L485.67,570.6 L486.00,587.6 L486.33,581.5 L486.67,572.7 L487.00,587.9 L487.33,544.1 L487.67,539.3 L488.00,573.1 L488.33,580.8 L488.67,575.9 L489.00,579.8 L489.33,550.0 L489.67,589.4 L490.00,573.8 L490.33,579.1 L490.67,547.1 L491.00,585.2 L491.33,583.0 L491.67,586.2 L492.00,587.5 L492.33,576.6 L492.67,585.3 L493.00,581.2 L493.33,545.9 L493.67,572.2 L494.00,578.7 L494.33,573.6 L494.67,574.7 L495.00,576.6M495.67,573.2 L496.00,584.3 L496.33,585.9 L496.67,584.4 L497.00,575.8 L497.33,587.8 L497.67,580.5 L498.00,586.7 L498.33,589.8 L498.67,549.3 L499.00,575.4 L499.33,552.9 L499.67,579.9 L500.00,585.9 L500.33,589.5 L500.67,563.6 L501.00,570.4 L501.33,584.2 L501.67,586.4 L502.00,573.3 L502.33,566.0 L502.67,575.9 L503.00,560.3 L503.33,572.7 L503.67,561.7 L504.00,584.7 L504.33,565.2 L504.67,577.1 L505.00,571.3 L505.33,587.4 L505.67,575.4 L506.00,573.8 L506.33,559.5 L506.67,577.9 L507.00,582.0 L507.33,586.4 L507.67,584.7 L508.00,568.3 L508.33,587.2 L508.67,584.1 L509.00,588.0 L509.33,560.1 L509.67,579.3 L510.00,574.5 L510.33,579.4 L510.67,579.0 L511.00,571.1 L511.33,566.1 L511.67,578.9 L512.00,580.8M512.67,578.5 L513.00,544.2 L513.33,554.9 L513.67,538.5 L514.00,586.6 L514.33,575.4 L514.67,576.2 L515.00,541.1 L515.33,581.8 L515.67,570.0 L516.00,584.3 L516.33,579.1 L516.67,574.9 L517.00,576.7 L517.33,577.9 L517.67,580.7 L518.00,585.3 L518.33,559.2 L518.67,571.7 L519.00,587.5 L519.33,584.4 L519.67,578.4 L520.00,578.1 L520.33,579.5 L520.67,588.4 L521.00,588.6 L521.33,572.5 L521.67,575.6 L522.00,587.8M522.67,573.2 L523.00,586.6 L523.33,541.8 L523.67,587.3 L524.00,588.8 L524.33,582.4 L524.67,577.8 L525.00,583.8 L525.33,581.2 L525.67,559.2 L526.00,560.2 L526.33,555.3 L526.67,574.5 L527.00,574.1 L527.33,572.8 L527.67,582.0 L528.00,570.2 L528.33,588.6 L528.67,587.5 L529.00,573.1 L529.33,570.6 L529.67,584.2 L530.00,580.3 L530.33,562.6 L530.67,589.0 L531.00,573.1 L531.33,578.1 L531.67,575.4 L532.00,586.4 L532.33,564.2 L532.67,572.8 L533.00,551.1 L533.33,586.2 L533.67,571.4 L534.00,588.4 L534.33,572.4 L534.67,581.1 L535.00,585.8 L535.33,565.2 L535.67,563.3 L536.00,582.3 L536.33,570.8 L536.67,588.1 L537.00,581.6M537.67,581.7 L538.00,577.2 L538.33,588.6 L538.67,568.9 L539.00,586.0 L539.33,583.4 L539.67,578.8 L540.00,577.3 L540.33,569.4 L540.67,559.0 L541.00,573.1 L541.33,556.4 L541.67,575.9 L542.00,583.0 L542.33,570.9 L542.67,538.3 L543.00,573.1 L543.33,578.3 L543.67,581.5 L544.00,580.3 L544.33,581.7 L544.67,568.4 L545.00,581.1M545.67,585.8 L546.00,570.8 L546.33,579.5 L546.67,582.4 L547.00,587.2 L547.33,582.3 L547.67,577.3 L548.00,544.3 L548.33,562.9 L548.67,584.7 L549.00,568.2 L549.33,572.4 L549.67,570.5 L550.00,578.2 L550.33,564.2 L550.67,587.5 L551.00,582.4 L551.33,583.4 L551.67,583.7 L552.00,570.1 L552.33,583.6 L552.67,568.0 L553.00,586.0 L553.33,569.7 L553.67,584.8 L554.00,576.6 L554.33,561.3 L554.67,565.4 L555.00,572.4 L555.33,579.5 L555.67,580.9 L556.00,579.5 L556.33,575.2 L556.67,578.0 L557.00,583.0 L557.33,588.0 L557.67,540.1 L558.00,558.8 L558.33,573.9 L558.67,586.8 L559.00,585.9 L559.33,587.1 L559.67,580.4 L560.00,577.1 L560.33,575.8 L560.67,582.5 L561.00,584.1 L561.33,573.8 L561.67,583.1 L562.00,569.5 L562.33,583.8 L562.67,570.3 L563.00,589.4 L563.33,576.3 L563.67,582.4 L564.00,554.7 L564.33,588.2 L564.67,587.4 L565.00,580.0M565.67,545.9 L566.00,587.1 L566.33,572.1 L566.67,590.4 L567.00,586.2 L567.33,552.4 L567.67,584.4 L568.00,582.1 L568.33,573.2 L568.67,576.8 L569.00,578.6 L569.33,574.2 L569.67,580.4 L570.00,573.1 L570.33,542.4 L570.67,586.7 L571.00,582.9 L571.33,587.4 L571.67,578.3 L572.00,571.0 L572.33,579.4 L572.67,573.2 L573.00,566.8 L573.33,573.6 L573.67,583.3 L574.00,571.7 L574.33,575.6 L574.67,580.1 L575.00,571.0 L575.33,570.8 L575.67,572.7 L576.00,565.4 L576.33,554.0 L576.67,587.5 L577.00,567.9 L577.33,569.1 L577.67,572.6 L578.00,584.1 L578.33,585.7 L578.67,568.8 L579.00,569.5M579.67,571.4 L580.00,586.8 L580.33,582.9 L580.67,585.5 L581.00,567.5 L581.33,569.9 L581.67,577.9 L582.00,579.2 L582.33,574.0 L582.67,573.0 L583.00,585.8 L583.33,578.1 L583.67,564.8 L584.00,568.5 L584.33,561.5 L584.67,584.7 L585.00,586.9 L585.33,577.9 L585.67,576.9 L586.00,588.0M586.67,576.9 L587.00,568.0 L587.33,559.6 L587.67,581.4 L588.00,568.0 L588.33,579.8 L588.67,584.7 L589.00,558.3 L589.33,568.6 L589.67,574.9 L590.00,582.4 L590.33,584.8 L590.67,558.0 L591.00,566.1 L591.33,580.3 L591.67,575.7 L592.00,567.0 L592.33,571.5 L592.67,560.7 L593.00,566.3 L593.33,573.6 L593.67,578.7 L594.00,578.3 L594.33,573.8 L594.67,579.7 L595.00,575.2 L595.33,573.7 L595.67,567.7 L596.00,571.5 L596.33,576.5 L596.67,583.4 L597.00,538.7 L597.33,575.6 L597.67,581.5 L598.00,569.6 L598.33,573.4 L598.67,556.4 L599.00,565.6 L599.33,569.6 L599.67,584.1 L600.00,581.5M600.67,576.0 L601.00,584.8 L601.33,566.3 L601.67,577.4 L602.00,570.3 L602.33,583.5 L602.67,579.0 L603.00,581.6 L603.33,579.4 L603.67,585.9 L604.00,574.6 L604.33,582.5 L604.67,580.4 L605.00,581.0 L605.33,564.7 L605.67,568.3 L606.00,577.1 L606.33,573.0 L606.67,584.6 L607.00,578.0 L607.33,579.4 L607.67,572.1 L608.00,578.1M608.67,563.0 L609.00,546.7 L609.33,571.5 L609.67,583.6 L610.00,577.3 L610.33,574.9 L610.67,554.9 L611.00,573.0 L611.33,575.7 L611.67,558.9 L612.00,566.9 L612.33,575.1 L612.67,568.3 L613.00,570.0 L613.33,584.3 L613.67,573.9 L614.00,569.5 L614.33,580.7 L614.67,568.5 L615.00,583.4 L615.33,573.7 L615.67,571.4 L616.00,575.4 L616.33,571.2 L616.67,573.4 L617.00,546.7 L617.33,563.7 L617.67,574.8 L618.00,565.2 L618.33,580.0 L618.67,580.1 L619.00,560.0 L619.33,576.7 L619.67,579.0 L620.00,557.7M620.67,583.8 L621.00,577.2 L621.33,574.7 L621.67,577.1 L622.00,580.4 L622.33,559.1 L622.67,577.9 L623.00,575.8 L623.33,577.5 L623.67,567.8 L624.00,569.4 L624.33,571.8 L624.67,564.7 L625.00,565.8 L625.33,574.8 L625.67,582.7 L626.00,562.7 L626.33,580.0 L626.67,558.5 L627.00,573.7 L627.33,570.2 L627.67,579.8 L628.00,562.6 L628.33,562.2 L628.67,582.6 L629.00,565.4 L629.33,571.6 L629.67,566.7 L630.00,582.3 L630.33,571.4 L630.67,568.8 L631.00,581.3 L631.33,579.7 L631.67,583.3 L632.00,563.4 L632.33,565.0 L632.67,566.9 L633.00,586.3 L633.33,574.0 L633.67,576.0 L634.00,577.7M634.67,584.8 L635.00,565.2 L635.33,554.1 L635.67,539.4 L636.00,579.8 L636.33,576.6 L636.67,547.1 L637.00,568.9 L637.33,575.4 L637.67,583.5 L638.00,568.0 L638.33,563.7 L638.67,565.2 L639.00,566.1 L639.33,566.4 L639.67,584.6 L640.00,576.3 L640.33,570.2 L640.67,569.2 L641.00,583.8 L641.33,583.3 L641.67,569.1 L642.00,575.8 L642.33,574.7 L642.67,572.0 L643.00,573.5 L643.33,577.7 L643.67,582.1 L644.00,566.3 L644.33,568.4 L644.67,561.1 L645.00,583.9 L645.33,564.5 L645.67,575.1 L646.00,576.6 L646.33,575.3 L646.67,578.9 L647.00,578.2 L647.33,584.0 L647.67,568.9 L648.00,568.6 L648.33,567.6 L648.67,570.8 L649.00,572.9 L649.33,571.7 L649.67,581.7 L650.00,579.0M650.67,565.9 L651.00,582.2 L651.33,570.9 L651.67,585.5 L652.00,574.5 L652.33,557.0 L652.67,572.4 L653.00,579.4 L653.33,576.8 L653.67,565.6 L654.00,540.5 L654.33,584.0 L654.67,570.7 L655.00,582.5 L655.33,582.6 L655.67,580.8 L656.00,565.3 L656.33,546.8 L656.67,574.9 L657.00,566.5 L657.33,572.0 L657.67,572.2 L658.00,557.7 L658.33,570.4 L658.67,581.8 L659.00,546.2 L659.33,582.6 L659.67,554.0 L660.00,559.3 L660.33,558.8 L660.67,580.2 L661.00,559.5 L661.33,565.6 L661.67,542.1 L662.00,550.0 L662.33,549.2 L662.67,573.4 L663.00,586.7M663.67,572.7 L664.00,576.9 L664.33,575.6 L664.67,577.9 L665.00,538.8 L665.33,590.3 L665.67,575.1 L666.00,580.1 L666.33,563.9 L666.67,582.3 L667.00,590.1 L667.33,583.8 L667.67,583.0 L668.00,588.0 L668.33,575.1 L668.67,586.4 L669.00,586.8 L669.33,583.3 L669.67,575.9 L670.00,578.4 L670.33,575.5 L670.67,586.7 L671.00,547.7 L671.33,574.1 L671.67,574.0 L672.00,582.0 L672.33,545.0 L672.67,560.7 L673.00,570.4 L673.33,592.3 L673.67,573.1 L674.00,575.9 L674.33,585.2 L674.67,581.2 L675.00,567.6 L675.33,573.6 L675.67,566.4 L676.00,579.9 L676.33,573.1 L676.67,579.2 L677.00,585.1 L677.33,579.0 L677.67,568.0 L678.00,572.9 L678.33,575.8 L678.67,581.5 L679.00,577.6 L679.33,566.1 L679.67,592.2 L680.00,590.2 L680.33,538.7 L680.67,581.0 L681.00,592.1 L681.33,577.8 L681.67,587.4 L682.00,587.2 L682.33,584.6 L682.67,556.5 L683.00,579.4M683.67,579.1 L684.00,589.8 L684.33,576.2 L684.67,585.9 L685.00,582.4 L685.33,571.1 L685.67,589.4 L686.00,591.7 L686.33,584.9 L686.67,552.3 L687.00,586.2 L687.33,551.0 L687.67,583.5 L688.00,587.1 L688.33,584.5 L688.67,549.5 L689.00,573.7 L689.33,575.1 L689.67,576.3 L690.00,589.1 L690.33,582.6 L690.67,578.6 L691.00,586.7 L691.33,573.7 L691.67,586.6 L692.00,587.3M692.67,567.5 L693.00,573.8 L693.33,588.2 L693.67,582.1 L694.00,579.6 L694.33,577.1 L694.67,587.4 L695.00,574.1 L695.33,579.9 L695.67,586.0 L696.00,542.6 L696.33,586.3 L696.67,587.2 L697.00,576.6 L697.33,583.8 L697.67,576.0 L698.00,587.4 L698.33,585.9 L698.67,576.8 L699.00,582.3 L699.33,582.3 L699.67,576.6 L700.00,576.6M700.67,583.2 L701.00,565.0 L701.33,576.3 L701.67,574.9 L702.00,578.3 L702.33,580.0 L702.67,590.9 L703.00,575.3 L703.33,587.5 L703.67,589.8 L704.00,571.7 L704.33,584.1 L704.67,589.8 L705.00,567.9 L705.33,578.2 L705.67,585.3 L706.00,581.7 L706.33,574.3 L706.67,573.8 L707.00,586.0 L707.33,583.6 L707.67,578.9 L708.00,574.3 L708.33,573.4 L708.67,579.5 L709.00,574.6 L709.33,580.2 L709.67,589.2 L710.00,575.7 L710.33,582.3 L710.67,578.4 L711.00,572.7 L711.33,551.9 L711.67,546.5 L712.00,560.4M712.67,576.4 L713.00,581.0 L713.33,586.4 L713.67,584.4 L714.00,575.1 L714.33,581.1 L714.67,575.6 L715.00,584.5 L715.33,575.5 L715.67,551.9 L716.00,534.8 L716.33,574.8 L716.67,585.2 L717.00,571.7 L717.33,576.4 L717.67,581.9 L718.00,576.2 L718.33,556.3 L718.67,585.3 L719.00,570.5 L719.33,579.4 L719.67,586.5 L720.00,572.7 L720.33,565.4 L720.67,558.2 L721.00,568.7 L721.33,583.2 L721.67,575.0 L722.00,580.1M722.67,565.9 L723.00,550.9 L723.33,577.2 L723.67,567.8 L724.00,584.6 L724.33,572.8 L724.67,584.5 L725.00,557.3 L725.33,583.6 L725.67,559.3 L726.00,577.7 L726.33,566.2 L726.67,571.1 L727.00,579.1 L727.33,560.2 L727.67,571.9 L728.00,579.8 L728.33,571.9 L728.67,569.3 L729.00,582.3 L729.33,582.6 L729.67,575.5 L730.00,569.1 L730.33,570.4 L730.67,574.0 L731.00,565.0 L731.33,582.2 L731.67,563.3 L732.00,575.3 L732.33,566.4 L732.67,567.9 L733.00,581.0 L733.33,543.5 L733.67,581.6 L734.00,563.5 L734.33,568.6 L734.67,532.5 L735.00,559.4M735.67,579.7 L736.00,544.3 L736.33,565.1 L736.67,571.1 L737.00,565.4 L737.33,553.0 L737.67,564.0 L738.00,564.6 L738.33,568.7 L738.67,565.1 L739.00,580.3 L739.33,575.6 L739.67,581.4 L740.00,581.2 L740.33,554.3 L740.67,579.4 L741.00,577.8 L741.33,580.0 L741.67,546.9 L742.00,580.6 L742.33,565.3 L742.67,561.5 L743.00,576.8 L743.33,580.0 L743.67,563.2 L744.00,583.2 L744.33,581.1 L744.67,571.3 L745.00,574.3 L745.33,571.2 L745.67,565.0 L746.00,567.4 L746.33,556.0 L746.67,583.0 L747.00,566.2 L747.33,565.6 L747.67,564.2 L748.00,568.9 L748.33,577.1 L748.67,576.5 L749.00,573.9 L749.33,546.1 L749.67,530.7 L750.00,553.5M750.67,573.8 L751.00,577.4 L751.33,553.6 L751.67,566.2 L752.00,563.6 L752.33,570.8 L752.67,564.7 L753.00,568.7 L753.33,570.5 L753.67,549.5 L754.00,568.1 L754.33,562.3 L754.67,562.8 L755.00,561.8 L755.33,577.4 L755.67,563.4 L756.00,576.7 L756.33,562.0 L756.67,573.5 L757.00,568.5 L757.33,567.5 L757.67,577.8 L758.00,569.2 L758.33,578.3 L758.67,534.1 L759.00,570.7 L759.33,570.1 L759.67,583.2 L760.00,584.4 L760.33,581.9 L760.67,574.9 L761.00,548.0 L761.33,569.5 L761.67,583.2 L762.00,576.9 L762.33,576.2 L762.67,583.3 L763.00,540.9 L763.33,564.3 L763.67,562.5 L764.00,557.3M764.67,580.4 L765.00,562.3 L765.33,571.9 L765.67,580.0 L766.00,581.4 L766.33,549.6 L766.67,571.4 L767.00,581.4 L767.33,565.2 L767.67,562.7 L768.00,567.4 L768.33,565.9 L768.67,574.4 L769.00,579.5 L769.33,565.4 L769.67,573.9 L770.00,577.0 L770.33,577.1 L770.67,574.2 L771.00,572.1 L771.33,561.0 L771.67,564.9 L772.00,581.4 L772.33,579.8 L772.67,567.8 L773.00,580.1 L773.33,579.1 L773.67,573.9 L774.00,581.6 L774.33,573.6 L774.67,535.3 L775.00,579.0M775.67,553.1 L776.00,562.4 L776.33,536.6 L776.67,580.8 L777.00,561.0 L777.33,579.0 L777.67,556.7 L778.00,583.0 L778.33,578.1 L778.67,571.1 L779.00,582.2 L779.33,543.1 L779.67,584.5 L780.00,574.3 L780.33,575.3 L780.67,574.0 L781.00,574.8 L781.33,571.8 L781.67,568.7 L782.00,533.7 L782.33,558.9 L782.67,562.2 L783.00,573.2 L783.33,564.0 L783.67,584.8 L784.00,582.8 L784.33,570.4 L784.67,566.6 L785.00,571.9 L785.33,566.5 L785.67,576.2 L786.00,566.6 L786.33,565.7 L786.67,581.5 L787.00,563.7 L787.33,551.2 L787.67,566.1 L788.00,577.3 L788.33,571.9 L788.67,577.8 L789.00,568.4 L789.33,572.8 L789.67,575.7 L790.00,570.4M790.67,565.0 L791.00,581.6 L791.33,572.5 L791.67,563.3 L792.00,580.7 L792.33,574.8 L792.67,565.8 L793.00,566.3 L793.33,541.0 L793.67,538.4 L794.00,565.2 L794.33,583.5 L794.67,578.0 L795.00,542.6 L795.33,573.1 L795.67,554.5 L796.00,573.4 L796.33,578.9 L796.67,571.9 L797.00,565.5 L797.33,542.3 L797.67,565.4 L798.00,580.0 L798.33,578.5 L798.67,576.2 L799.00,569.8 L799.33,568.5 L799.67,574.0 L800.00,567.3 L800.33,573.9 L800.67,569.1 L801.00,579.9 L801.33,531.2 L801.67,574.8 L802.00,541.9 L802.33,564.0 L802.67,561.2 L803.00,576.5 L803.33,568.3 L803.67,579.6 L804.00,578.9 L804.33,581.8 L804.67,576.2 L805.00,573.2 L805.33,536.8 L805.67,571.3 L806.00,582.3M806.67,583.2 L807.00,567.1 L807.33,570.0 L807.67,574.3 L808.00,567.8 L808.33,572.0 L808.67,582.6 L809.00,562.3 L809.33,560.0 L809.67,584.1 L810.00,577.3 L810.33,582.6 L810.67,588.0 L811.00,573.9M811.67,573.5 L812.00,558.6 L812.33,568.8 L812.67,557.0 L813.00,577.1 L813.33,579.2 L813.67,582.3 L814.00,585.8 L814.33,585.6 L814.67,573.2 L815.00,571.2 L815.33,580.3 L815.67,583.3 L816.00,538.9 L816.33,583.9 L816.67,579.2 L817.00,582.3 L817.33,570.6 L817.67,575.0 L818.00,572.5 L818.33,570.8 L818.67,585.0 L819.00,575.3 L819.33,582.8 L819.67,584.5 L820.00,581.6 L820.33,577.8 L820.67,571.5 L821.00,571.4 L821.33,580.1 L821.67,571.8 L822.00,567.3 L822.33,579.2 L822.67,580.1 L823.00,580.7 L823.33,568.3 L823.67,565.5 L824.00,578.6 L824.33,570.1 L824.67,572.3 L825.00,583.6M825.67,530.5 L826.00,580.5 L826.33,574.2 L826.67,577.2 L827.00,573.9 L827.33,582.5 L827.67,576.9 L828.00,579.7 L828.33,580.5 L828.67,575.4 L829.00,569.5 L829.33,576.3 L829.67,530.4 L830.00,583.5 L830.33,572.8 L830.67,585.1 L831.00,546.3 L831.33,576.6 L831.67,580.1 L832.00,571.1 L832.33,577.5 L832.67,578.5 L833.00,567.0 L833.33,580.8 L833.67,583.9 L834.00,585.3 L834.33,575.9 L834.67,564.9 L835.00,571.1 L835.33,579.9 L835.67,581.8 L836.00,556.3 L836.33,571.7 L836.67,558.6 L837.00,567.4 L837.33,581.0 L837.67,572.4 L838.00,584.3M838.67,570.5 L839.00,582.0 L839.33,577.5 L839.67,555.5 L840.00,562.6 L840.33,572.0 L840.67,583.4 L841.00,570.5 L841.33,559.1 L841.67,571.7 L842.00,568.9 L842.33,543.4 L842.67,554.9 L843.00,579.9 L843.33,580.2 L843.67,585.1 L844.00,568.9 L844.33,574.5 L844.67,554.8 L845.00,568.9 L845.33,567.5 L845.67,572.4 L846.00,582.7 L846.33,580.2 L846.67,565.4 L847.00,581.2 L847.33,562.5 L847.67,555.7 L848.00,566.0 L848.33,536.7 L848.67,575.0 L849.00,570.6 L849.33,579.1 L849.67,572.4 L850.00,570.7M850.67,586.4 L851.00,587.9 L851.33,583.8 L851.67,587.0 L852.00,584.4 L852.33,580.2 L852.67,569.0 L853.00,575.5 L853.33,563.9 L853.67,561.6 L854.00,570.6 L854.33,586.3 L854.67,571.5 L855.00,578.6 L855.33,570.5 L855.67,584.2 L856.00,581.1 L856.33,537.8 L856.67,569.9 L857.00,576.5 L857.33,573.9 L857.67,586.7 L858.00,571.9 L858.33,581.3 L858.67,573.4 L859.00,584.1 L859.33,558.1 L859.67,580.6 L860.00,569.4M860.67,573.2 L861.00,576.8 L861.33,574.2 L861.67,568.2 L862.00,551.9 L862.33,583.6 L862.67,562.0 L863.00,569.4 L863.33,568.1 L863.67,586.4 L864.00,568.4 L864.33,557.9 L864.67,567.6 L865.00,583.6 L865.33,570.1 L865.67,574.2 L866.00,580.9 L866.33,576.1 L866.67,584.7 L867.00,579.6 L867.33,571.3 L867.67,581.3 L868.00,582.9M868.67,574.5 L869.00,571.1 L869.33,571.8 L869.67,569.1 L870.00,547.3 L870.33,540.0 L870.67,584.6 L871.00,572.1 L871.33,576.5 L871.67,565.5 L872.00,570.1 L872.33,581.7 L872.67,577.3 L873.00,579.5 L873.33,581.2 L873.67,581.7 L874.00,575.4 L874.33,576.0 L874.67,565.9 L875.00,566.5 L875.33,581.8 L875.67,582.9 L876.00,584.4M876.67,578.7 L877.00,578.8 L877.33,578.0 L877.67,568.4 L878.00,586.0 L878.33,559.4 L878.67,573.3 L879.00,562.3 L879.33,580.1 L879.67,572.7 L880.00,566.9 L880.33,578.8 L880.67,559.0 L881.00,572.5 L881.33,567.1 L881.67,578.2 L882.00,584.0M882.67,579.9 L883.00,576.5 L883.33,568.4 L883.67,575.9 L884.00,537.3 L884.33,580.3 L884.67,574.8 L885.00,582.0 L885.33,579.6 L885.67,569.1 L886.00,582.2 L886.33,571.3 L886.67,574.1 L887.00,584.4 L887.33,572.0 L887.67,584.0 L888.00,583.3 L888.33,574.2 L888.67,560.3 L889.00,570.2 L889.33,570.2 L889.67,585.2 L890.00,571.6 L890.33,587.2 L890.67,562.2 L891.00,569.3 L891.33,588.2 L891.67,588.9 L892.00,576.6M892.67,577.3 L893.00,570.1 L893.33,570.1 L893.67,582.2 L894.00,585.6 L894.33,549.7 L894.67,587.0 L895.00,587.7 L895.33,575.9 L895.67,580.2 L896.00,590.5M896.67,582.1 L897.00,565.8 L897.33,583.4 L897.67,537.8 L898.00,566.3 L898.33,588.0 L898.67,577.5 L899.00,575.2 L899.33,581.0 L899.67,575.2 L900.00,577.7 L900.33,576.5 L900.67,571.7 L901.00,536.2 L901.33,584.6 L901.67,585.5 L902.00,563.6 L902.33,574.1 L902.67,553.6 L903.00,575.3 L903.33,578.2 L903.67,573.1 L904.00,584.9M904.67,538.6 L905.00,574.9 L905.33,571.9 L905.67,581.6 L906.00,550.9 L906.33,588.2 L906.67,588.0 L907.00,566.0 L907.33,585.0 L907.67,576.9 L908.00,580.0 L908.33,585.6 L908.67,584.2 L909.00,571.0 L909.33,533.3 L909.67,577.8 L910.00,573.9 L910.33,571.6 L910.67,569.7 L911.00,586.6 L911.33,585.9 L911.67,587.7 L912.00,548.9 L912.33,585.9 L912.67,580.8 L913.00,571.8 L913.33,578.7 L913.67,571.0 L914.00,567.5 L914.33,578.8 L914.67,573.5 L915.00,569.4 L915.33,585.6 L915.67,586.0 L916.00,578.2 L916.33,585.1 L916.67,541.8 L917.00,583.3M917.67,561.2 L918.00,547.9 L918.33,577.5 L918.67,563.3 L919.00,569.8 L919.33,574.5 L919.67,583.7 L920.00,571.6 L920.33,533.5 L920.67,574.4 L921.00,580.1 L921.33,585.6 L921.67,578.3 L922.00,580.9 L922.33,572.9 L922.67,585.1 L923.00,564.9 L923.33,532.5 L923.67,576.7 L924.00,555.0 L924.33,582.2 L924.67,584.5 L925.00,583.0 L925.33,580.2 L925.67,541.3 L926.00,572.5 L926.33,580.8 L926.67,565.7 L927.00,579.7 L927.33,572.3 L927.67,572.3 L928.00,592.0 L928.33,588.0 L928.67,589.9 L929.00,562.7 L929.33,573.4 L929.67,549.7 L930.00,592.3M930.67,557.1 L931.00,592.2 L931.33,574.1 L931.67,575.7 L932.00,588.5 L932.33,575.8 L932.67,573.8 L933.00,575.0 L933.33,586.4 L933.67,559.3 L934.00,591.9 L934.33,564.4 L934.67,578.2 L935.00,590.5 L935.33,580.2 L935.67,537.5 L936.00,557.4 L936.33,590.6 L936.67,582.7 L937.00,575.6 L937.33,591.1 L937.67,590.9 L938.00,577.6 L938.33,583.7 L938.67,582.5 L939.00,582.7 L939.33,592.6 L939.67,588.8 L940.00,588.6 L940.33,571.0 L940.67,583.6 L941.00,586.4 L941.33,588.6 L941.67,576.0" fill="none" stroke="#d86a3c" stroke-width="2.2"/>
<path d="M87.8,583.3h5v5h-5zM89.2,582.8h5v5h-5zM89.8,580.0h5v5h-5zM90.2,565.2h5v5h-5zM90.5,576.4h5v5h-5zM90.8,554.7h5v5h-5zM91.5,581.9h5v5h-5zM92.8,582.8h5v5h-5zM94.2,577.8h5v5h-5zM94.8,572.1h5v5h-5zM95.5,577.9h5v5h-5zM95.8,552.6h5v5h-5zM96.5,573.8h5v5h-5zM97.2,572.1h5v5h-5zM98.2,577.3h5v5h-5zM98.5,553.9h5v5h-5zM98.8,573.1h5v5h-5zM99.5,566.4h5v5h-5zM100.8,584.2h5v5h-5zM101.5,581.5h5v5h-5zM102.2,577.4h5v5h-5zM103.2,578.0h5v5h-5zM103.5,568.5h5v5h-5zM103.8,545.8h5v5h-5zM104.2,581.8h5v5h-5zM104.8,581.3h5v5h-5zM105.8,536.3h5v5h-5zM106.5,586.1h5v5h-5zM106.8,555.3h5v5h-5zM107.5,579.5h5v5h-5zM108.2,586.6h5v5h-5zM108.8,587.2h5v5h-5zM110.2,585.6h5v5h-5zM110.8,586.3h5v5h-5zM111.2,559.7h5v5h-5zM111.5,578.9h5v5h-5zM112.2,583.4h5v5h-5zM112.8,569.4h5v5h-5zM113.5,588.3h5v5h-5zM114.2,562.4h5v5h-5zM114.5,581.5h5v5h-5zM115.5,584.5h5v5h-5zM116.2,561.7h5v5h-5zM117.2,588.6h5v5h-5zM118.2,543.1h5v5h-5zM118.5,533.2h5v5h-5zM119.5,585.1h5v5h-5zM120.8,575.6h5v5h-5zM121.2,561.8h5v5h-5zM121.5,579.2h5v5h-5zM122.5,554.9h5v5h-5zM123.5,585.3h5v5h-5zM123.8,560.8h5v5h-5zM124.2,571.3h5v5h-5zM124.5,551.2h5v5h-5zM125.2,587.5h5v5h-5zM125.5,551.0h5v5h-5zM126.2,569.8h5v5h-5zM126.8,581.5h5v5h-5zM127.5,578.9h5v5h-5zM128.2,578.1h5v5h-5zM128.8,568.7h5v5h-5zM129.5,587.1h5v5h-5zM130.5,577.9h5v5h-5zM131.2,577.0h5v5h-5zM132.2,582.0h5v5h-5zM132.8,569.3h5v5h-5zM133.2,559.9h5v5h-5zM133.5,574.5h5v5h-5zM134.2,573.9h5v5h-5zM134.8,566.9h5v5h-5zM135.2,542.1h5v5h-5zM135.5,565.5h5v5h-5zM136.5,579.7h5v5h-5zM137.5,569.6h5v5h-5zM138.2,555.1h5v5h-5zM138.8,573.6h5v5h-5zM139.2,544.5h5v5h-5zM140.5,582.2h5v5h-5zM141.2,575.5h5v5h-5zM141.8,561.9h5v5h-5zM142.2,562.0h5v5h-5zM142.5,576.3h5v5h-5zM143.2,578.9h5v5h-5zM143.5,562.9h5v5h-5zM143.8,576.2h5v5h-5zM144.8,580.3h5v5h-5zM145.8,565.1h5v5h-5zM146.2,564.0h5v5h-5zM146.8,574.5h5v5h-5zM147.5,578.8h5v5h-5zM148.2,578.2h5v5h-5zM150.2,581.1h5v5h-5zM150.8,571.7h5v5h-5zM151.2,541.6h5v5h-5zM151.5,572.6h5v5h-5zM152.2,571.0h5v5h-5zM153.8,578.6h5v5h-5zM154.2,566.2h5v5h-5zM154.5,577.9h5v5h-5zM155.2,555.0h5v5h-5zM155.5,576.3h5v5h-5zM156.2,572.2h5v5h-5zM158.8,575.8h5v5h-5zM159.5,580.7h5v5h-5zM160.8,563.2h5v5h-5zM161.2,574.5h5v5h-5zM161.5,550.3h5v5h-5zM161.8,568.0h5v5h-5zM162.2,564.1h5v5h-5zM162.5,555.2h5v5h-5zM163.2,570.4h5v5h-5zM163.5,564.1h5v5h-5zM163.8,564.3h5v5h-5zM164.8,580.5h5v5h-5zM165.8,568.3h5v5h-5zM166.2,567.3h5v5h-5zM166.5,581.1h5v5h-5zM167.5,579.8h5v5h-5zM168.5,576.9h5v5h-5zM168.8,561.2h5v5h-5zM169.2,573.3h5v5h-5zM170.2,579.5h5v5h-5zM171.2,580.7h5v5h-5zM172.2,575.0h5v5h-5zM172.8,578.5h5v5h-5zM173.5,532.8h5v5h-5zM173.8,571.6h5v5h-5zM174.2,561.2h5v5h-5zM174.5,575.4h5v5h-5zM174.8,561.7h5v5h-5zM175.5,570.3h5v5h-5zM175.8,540.7h5v5h-5zM176.2,554.6h5v5h-5zM176.5,552.6h5v5h-5zM176.8,563.0h5v5h-5zM177.2,580.9h5v5h-5zM177.8,575.5h5v5h-5zM178.8,566.9h5v5h-5zM179.5,531.6h5v5h-5zM180.2,574.9h5v5h-5zM181.2,582.5h5v5h-5zM182.5,580.2h5v5h-5zM183.2,556.7h5v5h-5zM183.5,565.6h5v5h-5zM183.8,536.3h5v5h-5zM184.2,583.3h5v5h-5zM185.2,583.3h5v5h-5zM185.5,544.0h5v5h-5zM185.8,577.2h5v5h-5zM186.2,569.1h5v5h-5zM186.5,552.0h5v5h-5zM186.8,578.0h5v5h-5zM187.5,580.7h5v5h-5zM188.2,579.4h5v5h-5zM188.5,554.8h5v5h-5zM189.2,581.9h5v5h-5zM190.2,565.6h5v5h-5zM190.5,575.3h5v5h-5zM191.5,578.1h5v5h-5zM191.8,553.2h5v5h-5zM192.2,571.0h5v5h-5zM192.5,561.6h5v5h-5zM192.8,578.9h5v5h-5zM193.5,530.7h5v5h-5zM194.2,569.9h5v5h-5zM194.5,560.0h5v5h-5zM194.8,584.6h5v5h-5zM195.5,557.0h5v5h-5zM195.8,552.9h5v5h-5zM196.2,581.9h5v5h-5zM196.8,534.1h5v5h-5zM197.5,574.2h5v5h-5zM198.2,566.9h5v5h-5zM198.8,580.7h5v5h-5zM199.5,584.4h5v5h-5zM200.5,585.6h5v5h-5zM201.2,535.8h5v5h-5zM201.8,580.2h5v5h-5zM202.2,534.2h5v5h-5zM202.5,584.5h5v5h-5zM203.2,579.3h5v5h-5zM203.5,565.4h5v5h-5zM203.8,583.4h5v5h-5zM204.5,579.6h5v5h-5zM204.8,568.4h5v5h-5zM205.2,579.1h5v5h-5zM205.5,547.2h5v5h-5zM206.2,567.3h5v5h-5zM206.8,578.8h5v5h-5zM207.5,563.2h5v5h-5zM207.8,574.6h5v5h-5zM208.5,581.7h5v5h-5zM209.2,548.6h5v5h-5zM209.5,562.9h5v5h-5zM209.8,539.5h5v5h-5zM210.2,564.6h5v5h-5zM210.5,583.2h5v5h-5zM211.5,584.6h5v5h-5zM212.5,543.7h5v5h-5zM212.8,568.9h5v5h-5zM213.2,558.6h5v5h-5zM213.5,576.4h5v5h-5zM214.2,578.9h5v5h-5zM215.2,585.8h5v5h-5zM216.5,580.9h5v5h-5zM216.8,537.1h5v5h-5zM217.5,580.4h5v5h-5zM218.2,555.0h5v5h-5zM218.5,547.2h5v5h-5zM218.8,575.6h5v5h-5zM219.2,529.6h5v5h-5zM219.5,579.7h5v5h-5zM220.2,543.1h5v5h-5zM220.5,569.0h5v5h-5zM220.8,551.0h5v5h-5zM221.2,577.0h5v5h-5zM221.8,581.7h5v5h-5zM222.2,567.8h5v5h-5zM222.5,581.7h5v5h-5zM223.5,547.8h5v5h-5zM223.8,581.2h5v5h-5zM224.5,573.9h5v5h-5zM225.2,569.5h5v5h-5zM225.8,581.1h5v5h-5zM226.2,559.1h5v5h-5zM226.8,580.2h5v5h-5zM227.5,566.6h5v5h-5zM227.8,578.2h5v5h-5zM228.5,580.6h5v5h-5zM229.2,554.2h5v5h-5zM229.5,569.2h5v5h-5zM229.8,548.9h5v5h-5zM230.5,582.4h5v5h-5zM231.2,541.7h5v5h-5zM231.5,557.4h5v5h-5zM231.8,570.6h5v5h-5zM232.2,546.5h5v5h-5zM233.2,581.9h5v5h-5zM233.8,581.6h5v5h-5zM234.5,581.7h5v5h-5zM235.5,582.8h5v5h-5zM236.2,582.7h5v5h-5zM236.8,578.4h5v5h-5zM237.8,575.2h5v5h-5zM238.2,548.1h5v5h-5zM238.5,579.5h5v5h-5zM239.5,566.7h5v5h-5zM240.2,580.1h5v5h-5zM240.8,565.0h5v5h-5zM241.8,577.9h5v5h-5zM242.2,564.9h5v5h-5zM242.5,573.9h5v5h-5zM243.2,581.5h5v5h-5zM243.5,528.3h5v5h-5zM243.8,583.2h5v5h-5zM244.2,539.4h5v5h-5zM244.8,562.8h5v5h-5zM245.2,580.2h5v5h-5zM246.8,580.0h5v5h-5zM247.8,584.3h5v5h-5zM248.8,578.8h5v5h-5zM249.8,576.0h5v5h-5zM250.5,580.1h5v5h-5zM251.5,582.7h5v5h-5zM252.5,584.0h5v5h-5zM253.5,583.6h5v5h-5zM254.2,544.3h5v5h-5zM254.8,568.1h5v5h-5zM255.5,565.2h5v5h-5zM256.8,581.3h5v5h-5zM257.2,561.4h5v5h-5zM257.5,581.4h5v5h-5zM258.2,578.7h5v5h-5zM258.8,580.1h5v5h-5zM259.5,565.3h5v5h-5zM260.5,575.8h5v5h-5zM260.8,554.6h5v5h-5zM261.2,564.9h5v5h-5zM262.2,577.2h5v5h-5zM262.5,542.3h5v5h-5zM263.5,581.4h5v5h-5zM264.8,582.6h5v5h-5zM266.5,583.2h5v5h-5zM267.2,576.8h5v5h-5zM267.8,580.4h5v5h-5zM268.8,582.2h5v5h-5zM269.5,557.9h5v5h-5zM269.8,580.4h5v5h-5zM270.5,579.0h5v5h-5zM271.2,534.8h5v5h-5zM271.5,567.8h5v5h-5zM272.2,581.4h5v5h-5zM272.8,575.0h5v5h-5zM273.2,545.7h5v5h-5zM273.5,573.8h5v5h-5zM274.2,582.6h5v5h-5zM275.2,571.5h5v5h-5zM275.5,568.9h5v5h-5zM276.8,585.2h5v5h-5zM277.8,580.5h5v5h-5zM279.2,554.3h5v5h-5zM279.5,565.4h5v5h-5zM279.8,581.1h5v5h-5zM280.5,579.1h5v5h-5zM281.5,571.1h5v5h-5zM282.2,567.7h5v5h-5zM283.2,577.8h5v5h-5zM284.2,582.7h5v5h-5zM285.2,581.7h5v5h-5zM286.2,570.0h5v5h-5zM287.2,564.0h5v5h-5zM287.5,553.1h5v5h-5zM288.2,581.0h5v5h-5zM288.5,554.3h5v5h-5zM288.8,565.0h5v5h-5zM289.5,580.0h5v5h-5zM290.5,577.1h5v5h-5zM291.2,576.1h5v5h-5zM291.5,535.6h5v5h-5zM292.2,574.6h5v5h-5zM292.8,568.9h5v5h-5zM293.2,579.0h5v5h-5zM293.8,580.2h5v5h-5zM294.8,573.9h5v5h-5zM295.5,573.9h5v5h-5zM296.5,579.7h5v5h-5zM298.2,577.4h5v5h-5zM299.5,579.9h5v5h-5zM299.8,560.7h5v5h-5zM300.5,576.3h5v5h-5zM301.5,579.5h5v5h-5zM302.5,577.5h5v5h-5zM303.2,577.2h5v5h-5zM303.5,562.4h5v5h-5zM303.8,580.5h5v5h-5zM304.5,583.4h5v5h-5zM305.2,583.1h5v5h-5zM305.8,541.3h5v5h-5zM306.2,566.2h5v5h-5zM306.5,577.8h5v5h-5zM306.8,539.4h5v5h-5zM307.2,576.3h5v5h-5zM308.2,583.7h5v5h-5zM309.2,574.3h5v5h-5zM310.2,556.1h5v5h-5zM310.5,567.9h5v5h-5zM311.5,568.9h5v5h-5zM311.8,551.1h5v5h-5zM312.2,573.9h5v5h-5zM312.8,574.7h5v5h-5zM313.5,578.3h5v5h-5zM314.2,575.1h5v5h-5zM315.2,575.6h5v5h-5zM315.5,563.7h5v5h-5zM315.8,572.6h5v5h-5zM316.5,536.3h5v5h-5zM316.8,572.0h5v5h-5zM317.5,570.8h5v5h-5zM317.8,554.2h5v5h-5zM318.2,564.6h5v5h-5zM318.5,570.0h5v5h-5zM319.5,582.8h5v5h-5zM320.8,579.0h5v5h-5zM321.5,537.2h5v5h-5zM322.2,580.9h5v5h-5zM323.2,574.5h5v5h-5zM323.5,566.6h5v5h-5zM323.8,573.5h5v5h-5zM324.8,584.7h5v5h-5zM326.2,584.2h5v5h-5zM326.8,583.3h5v5h-5zM328.5,571.4h5v5h-5zM328.8,559.5h5v5h-5zM329.5,587.8h5v5h-5zM330.5,584.9h5v5h-5zM331.2,584.5h5v5h-5zM331.5,556.6h5v5h-5zM332.2,571.4h5v5h-5zM333.2,572.9h5v5h-5zM334.8,585.5h5v5h-5zM336.5,575.1h5v5h-5zM336.8,569.5h5v5h-5zM337.2,578.1h5v5h-5zM337.5,547.4h5v5h-5zM338.2,574.4h5v5h-5zM339.2,577.1h5v5h-5zM339.5,566.4h5v5h-5zM339.8,574.4h5v5h-5zM340.5,577.6h5v5h-5zM341.2,578.5h5v5h-5zM342.2,563.5h5v5h-5zM342.5,581.9h5v5h-5zM343.5,581.0h5v5h-5zM344.5,572.6h5v5h-5zM344.8,560.1h5v5h-5zM345.5,583.3h5v5h-5zM345.8,558.9h5v5h-5zM346.2,570.9h5v5h-5zM346.5,558.9h5v5h-5zM347.5,582.4h5v5h-5zM348.5,585.7h5v5h-5zM348.8,567.7h5v5h-5zM349.2,578.8h5v5h-5zM350.2,577.5h5v5h-5zM351.5,583.5h5v5h-5zM352.2,561.6h5v5h-5zM352.5,577.9h5v5h-5zM352.8,566.6h5v5h-5zM353.2,551.0h5v5h-5zM353.5,583.5h5v5h-5zM354.2,585.0h5v5h-5zM355.5,584.5h5v5h-5zM356.2,580.8h5v5h-5zM356.8,567.0h5v5h-5zM357.2,582.6h5v5h-5zM358.2,564.4h5v5h-5zM358.5,583.8h5v5h-5zM359.2,582.3h5v5h-5zM359.5,569.0h5v5h-5zM360.2,582.7h5v5h-5zM361.8,575.7h5v5h-5zM362.2,568.3h5v5h-5zM362.5,532.1h5v5h-5zM362.8,578.6h5v5h-5zM363.5,567.9h5v5h-5zM363.8,572.6h5v5h-5zM364.2,546.3h5v5h-5zM364.5,578.9h5v5h-5zM365.2,571.5h5v5h-5zM366.2,580.3h5v5h-5zM367.2,568.9h5v5h-5zM367.5,568.2h5v5h-5zM367.8,580.3h5v5h-5zM368.2,558.4h5v5h-5zM368.8,583.9h5v5h-5zM369.5,570.2h5v5h-5zM369.8,543.1h5v5h-5zM370.5,580.8h5v5h-5zM371.2,575.3h5v5h-5zM371.5,568.1h5v5h-5zM371.8,579.6h5v5h-5zM372.5,559.1h5v5h-5zM373.2,579.8h5v5h-5zM374.5,582.4h5v5h-5zM374.8,549.8h5v5h-5zM375.5,580.0h5v5h-5zM376.2,582.8h5v5h-5zM376.8,558.8h5v5h-5zM377.2,578.2h5v5h-5zM378.2,564.3h5v5h-5zM378.5,583.3h5v5h-5zM379.2,583.4h5v5h-5zM379.5,566.9h5v5h-5zM380.5,577.1h5v5h-5zM380.8,565.8h5v5h-5zM381.2,574.0h5v5h-5zM382.2,582.7h5v5h-5zM382.5,545.3h5v5h-5zM382.8,585.3h5v5h-5zM383.5,557.8h5v5h-5zM384.2,571.6h5v5h-5zM384.8,583.1h5v5h-5zM385.5,579.9h5v5h-5zM386.5,583.3h5v5h-5zM387.5,585.5h5v5h-5zM388.8,555.7h5v5h-5zM389.2,576.4h5v5h-5zM389.8,559.0h5v5h-5zM390.2,578.5h5v5h-5zM390.5,560.8h5v5h-5zM391.2,584.2h5v5h-5zM392.5,579.6h5v5h-5zM392.8,561.7h5v5h-5zM393.2,574.9h5v5h-5zM394.2,566.2h5v5h-5zM394.5,579.9h5v5h-5zM395.2,579.7h5v5h-5zM395.5,563.4h5v5h-5zM395.8,543.5h5v5h-5zM396.2,577.3h5v5h-5zM396.8,576.9h5v5h-5zM397.2,553.4h5v5h-5zM397.8,582.3h5v5h-5zM398.2,557.3h5v5h-5zM398.5,573.3h5v5h-5zM398.8,559.8h5v5h-5zM399.2,579.2h5v5h-5zM399.5,566.3h5v5h-5zM400.2,580.2h5v5h-5zM400.8,577.9h5v5h-5zM401.8,581.0h5v5h-5zM402.5,581.4h5v5h-5zM403.2,554.9h5v5h-5zM403.5,582.6h5v5h-5zM403.8,558.5h5v5h-5zM404.8,580.1h5v5h-5zM405.8,573.2h5v5h-5zM406.2,569.2h5v5h-5zM406.8,569.4h5v5h-5zM407.5,566.1h5v5h-5zM408.5,583.5h5v5h-5zM408.8,552.2h5v5h-5zM409.2,581.8h5v5h-5zM409.8,581.9h5v5h-5zM411.2,581.8h5v5h-5zM411.5,557.2h5v5h-5zM411.8,581.3h5v5h-5zM412.5,581.3h5v5h-5zM413.8,580.4h5v5h-5zM414.2,555.2h5v5h-5zM414.5,575.2h5v5h-5zM414.8,558.7h5v5h-5zM415.8,576.9h5v5h-5zM416.8,566.3h5v5h-5zM417.2,573.0h5v5h-5zM417.5,528.4h5v5h-5zM418.5,581.9h5v5h-5zM419.2,580.4h5v5h-5zM419.5,545.0h5v5h-5zM419.8,533.5h5v5h-5zM420.2,565.0h5v5h-5zM421.2,577.3h5v5h-5zM421.8,577.6h5v5h-5zM423.2,570.5h5v5h-5zM423.5,535.2h5v5h-5zM424.5,579.9h5v5h-5zM425.2,577.6h5v5h-5zM425.8,556.9h5v5h-5zM426.2,569.4h5v5h-5zM427.5,577.8h5v5h-5zM428.5,575.6h5v5h-5zM428.8,560.3h5v5h-5zM429.2,572.8h5v5h-5zM430.2,581.5h5v5h-5zM430.5,558.6h5v5h-5zM430.8,574.9h5v5h-5zM431.5,578.2h5v5h-5zM431.8,531.3h5v5h-5zM432.2,575.9h5v5h-5zM432.8,565.5h5v5h-5zM433.2,557.9h5v5h-5zM433.8,573.1h5v5h-5zM434.2,568.4h5v5h-5zM434.5,561.4h5v5h-5zM435.2,570.9h5v5h-5zM435.5,563.3h5v5h-5zM435.8,574.4h5v5h-5zM436.5,575.2h5v5h-5zM437.2,577.0h5v5h-5zM437.8,576.4h5v5h-5zM438.2,565.7h5v5h-5zM438.8,576.8h5v5h-5zM439.5,581.2h5v5h-5zM441.2,582.2h5v5h-5zM441.8,553.4h5v5h-5zM442.2,563.0h5v5h-5zM442.8,575.6h5v5h-5zM443.5,564.4h5v5h-5zM444.2,576.3h5v5h-5zM444.8,566.2h5v5h-5zM445.2,537.4h5v5h-5zM445.5,571.6h5v5h-5zM445.8,547.1h5v5h-5zM446.2,567.8h5v5h-5zM446.5,578.0h5v5h-5zM446.8,534.4h5v5h-5zM447.2,582.3h5v5h-5zM447.5,550.9h5v5h-5zM447.8,545.2h5v5h-5zM448.5,578.6h5v5h-5zM449.2,580.5h5v5h-5zM450.2,582.9h5v5h-5zM451.2,577.0h5v5h-5zM451.5,557.0h5v5h-5zM451.8,578.8h5v5h-5zM452.8,562.0h5v5h-5zM453.8,579.7h5v5h-5zM455.2,581.4h5v5h-5zM456.2,576.3h5v5h-5zM456.8,574.7h5v5h-5zM458.2,569.1h5v5h-5zM458.5,580.8h5v5h-5zM458.8,528.1h5v5h-5zM459.5,575.5h5v5h-5zM460.8,577.1h5v5h-5zM461.8,578.0h5v5h-5zM462.5,546.1h5v5h-5zM462.8,579.3h5v5h-5zM463.5,580.4h5v5h-5zM464.2,576.8h5v5h-5zM465.2,575.0h5v5h-5zM465.8,576.6h5v5h-5zM466.2,559.5h5v5h-5zM466.8,579.0h5v5h-5zM467.5,562.9h5v5h-5zM468.5,579.9h5v5h-5zM469.2,557.2h5v5h-5zM469.8,578.5h5v5h-5zM470.2,561.4h5v5h-5zM470.5,571.9h5v5h-5zM471.8,581.4h5v5h-5zM473.5,582.3h5v5h-5zM474.2,569.3h5v5h-5zM474.5,575.8h5v5h-5zM475.2,556.4h5v5h-5zM475.5,578.9h5v5h-5zM476.2,577.6h5v5h-5zM476.8,580.0h5v5h-5zM477.2,561.7h5v5h-5zM477.5,581.6h5v5h-5zM478.5,584.8h5v5h-5zM479.8,582.2h5v5h-5zM480.2,560.5h5v5h-5zM480.5,580.8h5v5h-5zM481.2,586.1h5v5h-5zM481.5,556.6h5v5h-5zM481.8,585.5h5v5h-5zM482.2,557.6h5v5h-5zM482.5,581.6h5v5h-5zM483.5,585.1h5v5h-5zM484.5,585.4h5v5h-5zM484.8,541.6h5v5h-5zM485.2,536.8h5v5h-5zM485.8,578.3h5v5h-5zM486.5,577.3h5v5h-5zM486.8,547.5h5v5h-5zM487.2,586.9h5v5h-5zM487.8,576.6h5v5h-5zM488.2,544.6h5v5h-5zM488.5,582.7h5v5h-5zM489.5,585.0h5v5h-5zM490.2,582.8h5v5h-5zM490.8,543.4h5v5h-5zM491.5,576.2h5v5h-5zM492.5,574.1h5v5h-5zM493.8,583.4h5v5h-5zM494.8,585.3h5v5h-5zM495.8,587.3h5v5h-5zM496.2,546.8h5v5h-5zM496.5,572.9h5v5h-5zM496.8,550.4h5v5h-5zM497.8,587.0h5v5h-5zM498.2,561.1h5v5h-5zM499.2,583.9h5v5h-5zM500.2,573.4h5v5h-5zM500.5,557.8h5v5h-5zM500.8,570.2h5v5h-5zM501.2,559.2h5v5h-5zM501.5,582.2h5v5h-5zM502.2,574.6h5v5h-5zM502.8,584.9h5v5h-5zM503.8,557.0h5v5h-5zM504.8,583.9h5v5h-5zM505.8,584.7h5v5h-5zM506.5,585.5h5v5h-5zM506.8,557.6h5v5h-5zM507.2,576.8h5v5h-5zM507.8,576.9h5v5h-5zM508.8,563.6h5v5h-5zM509.5,578.3h5v5h-5zM510.2,576.0h5v5h-5zM510.5,541.7h5v5h-5zM510.8,552.4h5v5h-5zM511.2,536.0h5v5h-5zM511.5,584.1h5v5h-5zM512.2,573.7h5v5h-5zM512.5,538.6h5v5h-5zM512.8,579.3h5v5h-5zM513.5,581.8h5v5h-5zM515.5,582.8h5v5h-5zM515.8,556.7h5v5h-5zM516.5,585.0h5v5h-5zM518.5,586.1h5v5h-5zM519.5,585.3h5v5h-5zM520.5,584.1h5v5h-5zM520.8,539.3h5v5h-5zM521.5,586.3h5v5h-5zM522.5,581.3h5v5h-5zM523.2,556.7h5v5h-5zM523.5,557.7h5v5h-5zM523.8,552.8h5v5h-5zM524.2,572.0h5v5h-5zM525.2,579.5h5v5h-5zM525.8,586.1h5v5h-5zM527.2,581.7h5v5h-5zM527.8,560.1h5v5h-5zM528.2,586.5h5v5h-5zM528.8,575.6h5v5h-5zM529.5,583.9h5v5h-5zM529.8,561.7h5v5h-5zM530.2,570.3h5v5h-5zM530.5,548.6h5v5h-5zM530.8,583.7h5v5h-5zM531.5,585.9h5v5h-5zM532.5,583.3h5v5h-5zM532.8,562.7h5v5h-5zM533.2,560.8h5v5h-5zM533.5,579.8h5v5h-5zM534.2,585.6h5v5h-5zM535.2,579.2h5v5h-5zM535.8,586.1h5v5h-5zM536.5,583.5h5v5h-5zM538.2,556.5h5v5h-5zM538.5,570.6h5v5h-5zM538.8,553.9h5v5h-5zM539.5,580.5h5v5h-5zM540.2,535.8h5v5h-5zM541.2,579.0h5v5h-5zM541.8,579.2h5v5h-5zM542.2,565.9h5v5h-5zM542.5,578.6h5v5h-5zM543.2,583.3h5v5h-5zM543.5,568.3h5v5h-5zM544.5,584.7h5v5h-5zM545.5,541.8h5v5h-5zM546.2,582.2h5v5h-5zM546.8,569.9h5v5h-5zM547.5,575.7h5v5h-5zM547.8,561.7h5v5h-5zM548.2,585.0h5v5h-5zM549.2,581.2h5v5h-5zM549.8,581.1h5v5h-5zM550.2,565.5h5v5h-5zM550.5,583.5h5v5h-5zM551.2,582.3h5v5h-5zM551.8,558.8h5v5h-5zM553.2,578.4h5v5h-5zM554.8,585.5h5v5h-5zM555.2,537.6h5v5h-5zM555.5,556.3h5v5h-5zM556.2,584.3h5v5h-5zM556.8,584.6h5v5h-5zM558.5,581.6h5v5h-5zM559.2,580.6h5v5h-5zM559.5,567.0h5v5h-5zM559.8,581.3h5v5h-5zM560.5,586.9h5v5h-5zM561.2,579.9h5v5h-5zM561.5,552.2h5v5h-5zM561.8,585.7h5v5h-5zM563.5,584.6h5v5h-5zM564.2,587.9h5v5h-5zM564.8,549.9h5v5h-5zM565.2,581.9h5v5h-5zM566.5,576.1h5v5h-5zM567.2,577.9h5v5h-5zM567.8,539.9h5v5h-5zM568.2,584.2h5v5h-5zM568.8,584.9h5v5h-5zM569.8,576.9h5v5h-5zM571.2,580.8h5v5h-5zM571.5,569.2h5v5h-5zM572.2,577.6h5v5h-5zM572.8,568.3h5v5h-5zM573.2,570.2h5v5h-5zM573.8,551.5h5v5h-5zM574.2,585.0h5v5h-5zM575.8,583.2h5v5h-5zM576.5,567.0h5v5h-5zM577.5,584.3h5v5h-5zM578.2,583.0h5v5h-5zM579.5,576.7h5v5h-5zM580.5,583.3h5v5h-5zM581.5,566.0h5v5h-5zM581.8,559.0h5v5h-5zM582.5,584.4h5v5h-5zM583.5,585.5h5v5h-5zM584.2,574.4h5v5h-5zM584.8,557.1h5v5h-5zM585.2,578.9h5v5h-5zM586.2,582.2h5v5h-5zM586.5,555.8h5v5h-5zM587.8,582.3h5v5h-5zM588.2,555.5h5v5h-5zM588.8,577.8h5v5h-5zM589.8,569.0h5v5h-5zM590.2,558.2h5v5h-5zM591.2,576.2h5v5h-5zM592.2,577.2h5v5h-5zM594.2,580.9h5v5h-5zM594.5,536.2h5v5h-5zM595.2,579.0h5v5h-5zM595.5,567.1h5v5h-5zM595.8,570.9h5v5h-5zM596.2,553.9h5v5h-5zM596.8,567.1h5v5h-5zM597.2,581.6h5v5h-5zM598.5,582.3h5v5h-5zM599.2,574.9h5v5h-5zM599.5,567.8h5v5h-5zM599.8,581.0h5v5h-5zM600.5,579.1h5v5h-5zM601.2,583.4h5v5h-5zM601.8,580.0h5v5h-5zM602.5,578.5h5v5h-5zM603.5,574.6h5v5h-5zM604.2,582.1h5v5h-5zM604.8,576.9h5v5h-5zM605.5,575.6h5v5h-5zM606.2,560.5h5v5h-5zM606.5,544.2h5v5h-5zM607.2,581.1h5v5h-5zM608.2,552.4h5v5h-5zM608.8,573.2h5v5h-5zM609.2,556.4h5v5h-5zM609.8,572.6h5v5h-5zM610.2,565.8h5v5h-5zM610.8,581.8h5v5h-5zM611.5,567.0h5v5h-5zM611.8,578.2h5v5h-5zM612.5,580.9h5v5h-5zM613.5,572.9h5v5h-5zM614.2,570.9h5v5h-5zM614.5,544.2h5v5h-5zM615.2,572.3h5v5h-5zM615.5,562.7h5v5h-5zM616.2,577.6h5v5h-5zM616.5,557.5h5v5h-5zM617.2,576.5h5v5h-5zM618.2,581.3h5v5h-5zM619.5,577.9h5v5h-5zM619.8,556.6h5v5h-5zM620.2,575.4h5v5h-5zM620.8,575.0h5v5h-5zM621.8,569.3h5v5h-5zM622.2,562.2h5v5h-5zM623.2,580.2h5v5h-5zM623.5,560.2h5v5h-5zM623.8,577.5h5v5h-5zM624.2,556.0h5v5h-5zM624.5,571.2h5v5h-5zM624.8,567.7h5v5h-5zM625.2,577.3h5v5h-5zM625.8,559.7h5v5h-5zM626.2,580.1h5v5h-5zM626.8,569.1h5v5h-5zM627.5,579.8h5v5h-5zM628.5,578.8h5v5h-5zM629.2,580.8h5v5h-5zM629.5,560.9h5v5h-5zM630.2,564.4h5v5h-5zM630.5,583.8h5v5h-5zM631.5,575.2h5v5h-5zM632.2,582.3h5v5h-5zM632.8,551.6h5v5h-5zM633.2,536.9h5v5h-5zM633.5,577.3h5v5h-5zM634.2,544.6h5v5h-5zM635.2,581.0h5v5h-5zM635.5,565.5h5v5h-5zM635.8,561.2h5v5h-5zM636.8,563.9h5v5h-5zM637.2,582.1h5v5h-5zM638.2,566.7h5v5h-5zM638.5,581.3h5v5h-5zM639.5,573.3h5v5h-5zM641.2,579.6h5v5h-5zM641.8,565.9h5v5h-5zM642.2,558.6h5v5h-5zM642.5,581.4h5v5h-5zM643.5,574.1h5v5h-5zM644.2,576.4h5v5h-5zM644.8,581.5h5v5h-5zM646.2,568.3h5v5h-5zM646.5,570.4h5v5h-5zM647.2,579.2h5v5h-5zM648.5,579.7h5v5h-5zM648.8,568.4h5v5h-5zM649.2,583.0h5v5h-5zM649.8,554.5h5v5h-5zM650.5,576.9h5v5h-5zM651.5,538.0h5v5h-5zM651.8,581.5h5v5h-5zM652.8,580.1h5v5h-5zM653.8,544.3h5v5h-5zM654.2,572.4h5v5h-5zM655.2,569.7h5v5h-5zM655.5,555.2h5v5h-5zM656.2,579.3h5v5h-5zM656.5,543.7h5v5h-5zM656.8,580.1h5v5h-5zM657.2,551.5h5v5h-5zM657.5,556.8h5v5h-5zM657.8,556.3h5v5h-5zM658.2,577.7h5v5h-5zM658.5,557.0h5v5h-5zM658.8,563.1h5v5h-5zM659.2,539.6h5v5h-5zM659.5,547.5h5v5h-5zM659.8,546.7h5v5h-5zM660.5,584.2h5v5h-5zM661.5,574.4h5v5h-5zM662.2,575.4h5v5h-5zM662.5,536.3h5v5h-5zM662.8,587.8h5v5h-5zM663.5,577.6h5v5h-5zM663.8,561.4h5v5h-5zM664.5,587.6h5v5h-5zM665.5,585.5h5v5h-5zM666.5,584.3h5v5h-5zM667.5,575.9h5v5h-5zM668.2,584.2h5v5h-5zM668.5,545.2h5v5h-5zM668.8,571.6h5v5h-5zM669.5,579.5h5v5h-5zM669.8,542.5h5v5h-5zM670.2,558.2h5v5h-5zM670.8,589.8h5v5h-5zM671.8,582.7h5v5h-5zM672.8,571.1h5v5h-5zM673.5,577.4h5v5h-5zM674.5,582.6h5v5h-5zM676.2,579.0h5v5h-5zM676.8,563.6h5v5h-5zM677.2,589.7h5v5h-5zM677.8,536.2h5v5h-5zM678.5,589.6h5v5h-5zM679.2,584.9h5v5h-5zM680.2,554.0h5v5h-5zM680.5,576.9h5v5h-5zM681.5,587.3h5v5h-5zM682.2,583.4h5v5h-5zM683.5,589.2h5v5h-5zM684.2,549.8h5v5h-5zM684.5,583.7h5v5h-5zM684.8,548.5h5v5h-5zM685.5,584.6h5v5h-5zM686.2,547.0h5v5h-5zM687.5,586.6h5v5h-5zM688.5,584.2h5v5h-5zM689.5,584.8h5v5h-5zM690.2,565.0h5v5h-5zM690.8,585.7h5v5h-5zM692.2,584.9h5v5h-5zM693.2,583.5h5v5h-5zM693.5,540.1h5v5h-5zM694.2,584.7h5v5h-5zM694.8,581.3h5v5h-5zM695.5,584.9h5v5h-5zM696.5,579.8h5v5h-5zM698.2,580.7h5v5h-5zM698.8,573.8h5v5h-5zM700.2,588.4h5v5h-5zM701.2,587.3h5v5h-5zM702.2,587.3h5v5h-5zM703.2,582.8h5v5h-5zM704.5,583.5h5v5h-5zM706.2,577.0h5v5h-5zM707.2,586.7h5v5h-5zM707.8,579.8h5v5h-5zM708.8,549.4h5v5h-5zM709.2,544.0h5v5h-5zM709.5,557.9h5v5h-5zM710.8,583.9h5v5h-5zM711.8,578.6h5v5h-5zM712.5,582.0h5v5h-5zM713.5,532.3h5v5h-5zM714.2,582.7h5v5h-5zM715.2,579.4h5v5h-5zM715.8,553.8h5v5h-5zM716.2,582.8h5v5h-5zM717.2,584.0h5v5h-5zM718.2,555.7h5v5h-5zM718.8,580.7h5v5h-5zM719.5,577.6h5v5h-5zM720.2,563.4h5v5h-5zM720.5,548.4h5v5h-5zM720.8,574.7h5v5h-5zM721.5,582.1h5v5h-5zM722.2,582.0h5v5h-5zM722.5,554.8h5v5h-5zM722.8,581.1h5v5h-5zM723.2,556.8h5v5h-5zM723.5,575.2h5v5h-5zM724.5,576.6h5v5h-5zM724.8,557.7h5v5h-5zM725.5,577.3h5v5h-5zM726.2,566.8h5v5h-5zM726.8,580.1h5v5h-5zM727.5,566.6h5v5h-5zM728.2,571.5h5v5h-5zM728.8,579.7h5v5h-5zM729.2,560.8h5v5h-5zM729.5,572.8h5v5h-5zM730.2,565.4h5v5h-5zM730.5,578.5h5v5h-5zM730.8,541.0h5v5h-5zM731.2,579.1h5v5h-5zM731.5,561.0h5v5h-5zM731.8,566.1h5v5h-5zM732.2,530.0h5v5h-5zM732.5,556.9h5v5h-5zM733.2,577.2h5v5h-5zM733.5,541.8h5v5h-5zM734.2,568.6h5v5h-5zM734.8,550.5h5v5h-5zM735.5,562.1h5v5h-5zM735.8,566.2h5v5h-5zM736.5,577.8h5v5h-5zM737.2,578.9h5v5h-5zM737.8,551.8h5v5h-5zM738.2,576.9h5v5h-5zM738.8,577.5h5v5h-5zM739.2,544.4h5v5h-5zM739.5,578.1h5v5h-5zM740.2,559.0h5v5h-5zM740.8,577.5h5v5h-5zM741.2,560.7h5v5h-5zM741.5,580.7h5v5h-5zM742.2,568.8h5v5h-5zM742.5,571.8h5v5h-5zM743.5,564.9h5v5h-5zM743.8,553.5h5v5h-5zM744.2,580.5h5v5h-5zM744.8,563.1h5v5h-5zM745.2,561.7h5v5h-5zM745.8,574.6h5v5h-5zM747.2,528.2h5v5h-5zM747.5,551.0h5v5h-5zM748.5,574.9h5v5h-5zM748.8,551.1h5v5h-5zM749.2,563.7h5v5h-5zM749.5,561.1h5v5h-5zM749.8,568.3h5v5h-5zM750.2,562.2h5v5h-5zM750.8,568.0h5v5h-5zM751.2,547.0h5v5h-5zM751.5,565.6h5v5h-5zM751.8,559.8h5v5h-5zM752.2,560.3h5v5h-5zM752.5,559.3h5v5h-5zM752.8,574.9h5v5h-5zM753.2,560.9h5v5h-5zM753.5,574.2h5v5h-5zM753.8,559.5h5v5h-5zM754.2,571.0h5v5h-5zM755.2,575.3h5v5h-5zM755.5,566.7h5v5h-5zM755.8,575.8h5v5h-5zM756.2,531.6h5v5h-5zM756.5,568.2h5v5h-5zM756.8,567.6h5v5h-5zM757.5,581.9h5v5h-5zM758.5,545.5h5v5h-5zM759.2,580.7h5v5h-5zM760.2,580.8h5v5h-5zM760.5,538.4h5v5h-5zM760.8,561.8h5v5h-5zM762.2,577.9h5v5h-5zM762.5,559.8h5v5h-5zM763.5,578.9h5v5h-5zM763.8,547.1h5v5h-5zM764.5,578.9h5v5h-5zM764.8,562.7h5v5h-5zM765.2,560.2h5v5h-5zM765.5,564.9h5v5h-5zM766.5,577.0h5v5h-5zM767.8,574.6h5v5h-5zM768.8,558.5h5v5h-5zM769.5,578.9h5v5h-5zM770.2,565.3h5v5h-5zM770.5,577.6h5v5h-5zM771.5,579.1h5v5h-5zM772.2,532.8h5v5h-5zM772.5,576.5h5v5h-5zM773.5,559.9h5v5h-5zM773.8,534.1h5v5h-5zM774.2,578.3h5v5h-5zM774.5,558.5h5v5h-5zM774.8,576.5h5v5h-5zM775.2,554.2h5v5h-5zM775.5,580.5h5v5h-5zM776.5,579.7h5v5h-5zM776.8,540.6h5v5h-5zM777.2,582.0h5v5h-5zM777.8,572.8h5v5h-5zM778.5,572.3h5v5h-5zM779.5,531.2h5v5h-5zM780.5,570.7h5v5h-5zM780.8,561.5h5v5h-5zM781.2,582.3h5v5h-5zM782.2,564.1h5v5h-5zM782.5,569.4h5v5h-5zM783.2,573.7h5v5h-5zM783.5,564.1h5v5h-5zM784.2,579.0h5v5h-5zM784.8,548.7h5v5h-5zM785.5,574.8h5v5h-5zM786.2,575.3h5v5h-5zM787.2,573.2h5v5h-5zM787.5,567.9h5v5h-5zM788.5,579.1h5v5h-5zM789.2,560.8h5v5h-5zM789.5,578.2h5v5h-5zM790.2,563.3h5v5h-5zM790.5,563.8h5v5h-5zM791.2,535.9h5v5h-5zM791.5,562.7h5v5h-5zM791.8,581.0h5v5h-5zM792.5,540.1h5v5h-5zM792.8,570.6h5v5h-5zM793.2,552.0h5v5h-5zM793.8,576.4h5v5h-5zM794.2,569.4h5v5h-5zM794.8,539.8h5v5h-5zM795.5,577.5h5v5h-5zM796.8,566.0h5v5h-5zM797.2,571.5h5v5h-5zM797.8,571.4h5v5h-5zM798.2,566.6h5v5h-5zM798.5,577.4h5v5h-5zM798.8,528.7h5v5h-5zM799.2,572.3h5v5h-5zM799.5,539.4h5v5h-5zM799.8,561.5h5v5h-5zM800.2,558.7h5v5h-5zM800.5,574.0h5v5h-5zM800.8,565.8h5v5h-5zM801.2,577.1h5v5h-5zM801.8,579.3h5v5h-5zM802.8,534.3h5v5h-5zM803.5,579.8h5v5h-5zM804.2,580.7h5v5h-5zM804.8,567.5h5v5h-5zM805.2,571.8h5v5h-5zM806.2,580.1h5v5h-5zM806.8,557.5h5v5h-5zM807.2,581.6h5v5h-5zM808.2,585.5h5v5h-5zM809.2,571.0h5v5h-5zM809.5,556.1h5v5h-5zM809.8,566.3h5v5h-5zM810.2,554.5h5v5h-5zM811.5,583.3h5v5h-5zM813.2,580.8h5v5h-5zM813.5,536.4h5v5h-5zM813.8,581.4h5v5h-5zM814.5,579.8h5v5h-5zM815.2,572.5h5v5h-5zM816.2,582.5h5v5h-5zM817.2,582.0h5v5h-5zM818.2,569.0h5v5h-5zM818.8,577.6h5v5h-5zM819.5,564.8h5v5h-5zM820.5,578.2h5v5h-5zM820.8,565.8h5v5h-5zM821.5,576.1h5v5h-5zM822.5,581.1h5v5h-5zM823.5,578.0h5v5h-5zM824.2,574.7h5v5h-5zM824.8,580.0h5v5h-5zM825.8,578.0h5v5h-5zM826.8,573.8h5v5h-5zM827.2,527.9h5v5h-5zM827.5,581.0h5v5h-5zM828.2,582.6h5v5h-5zM828.5,543.8h5v5h-5zM829.2,577.6h5v5h-5zM830.2,576.0h5v5h-5zM831.5,582.8h5v5h-5zM833.2,579.3h5v5h-5zM833.5,553.8h5v5h-5zM833.8,569.2h5v5h-5zM834.2,556.1h5v5h-5zM834.8,578.5h5v5h-5zM835.5,581.8h5v5h-5zM836.5,579.5h5v5h-5zM837.2,553.0h5v5h-5zM838.2,580.9h5v5h-5zM838.8,556.6h5v5h-5zM839.2,569.2h5v5h-5zM839.5,566.4h5v5h-5zM839.8,540.9h5v5h-5zM841.2,582.6h5v5h-5zM841.8,572.0h5v5h-5zM842.2,552.3h5v5h-5zM842.5,566.4h5v5h-5zM843.5,580.2h5v5h-5zM844.5,578.7h5v5h-5zM844.8,560.0h5v5h-5zM845.2,553.2h5v5h-5zM845.5,563.5h5v5h-5zM845.8,534.2h5v5h-5zM846.2,572.5h5v5h-5zM846.8,576.6h5v5h-5zM847.5,568.2h5v5h-5zM848.5,585.4h5v5h-5zM849.2,584.5h5v5h-5zM850.2,566.5h5v5h-5zM850.5,573.0h5v5h-5zM851.2,559.1h5v5h-5zM851.5,568.1h5v5h-5zM851.8,583.8h5v5h-5zM852.5,576.1h5v5h-5zM852.8,568.0h5v5h-5zM853.2,581.7h5v5h-5zM853.8,535.3h5v5h-5zM854.2,567.4h5v5h-5zM854.5,574.0h5v5h-5zM855.2,584.2h5v5h-5zM855.5,569.4h5v5h-5zM855.8,578.8h5v5h-5zM856.5,581.6h5v5h-5zM856.8,555.6h5v5h-5zM857.2,578.1h5v5h-5zM858.5,574.3h5v5h-5zM859.5,549.4h5v5h-5zM859.8,581.1h5v5h-5zM860.2,559.5h5v5h-5zM860.5,566.9h5v5h-5zM860.8,565.6h5v5h-5zM861.2,583.9h5v5h-5zM861.8,555.4h5v5h-5zM862.2,565.1h5v5h-5zM862.5,581.1h5v5h-5zM863.5,578.4h5v5h-5zM864.2,582.2h5v5h-5zM864.8,568.8h5v5h-5zM865.5,580.4h5v5h-5zM866.2,572.0h5v5h-5zM866.8,569.3h5v5h-5zM867.5,544.8h5v5h-5zM867.8,537.5h5v5h-5zM868.2,582.1h5v5h-5zM868.8,574.0h5v5h-5zM869.8,579.2h5v5h-5zM871.2,579.2h5v5h-5zM871.8,573.5h5v5h-5zM873.5,581.9h5v5h-5zM874.5,576.3h5v5h-5zM875.5,583.5h5v5h-5zM875.8,556.9h5v5h-5zM876.2,570.8h5v5h-5zM876.5,559.8h5v5h-5zM876.8,577.6h5v5h-5zM877.8,576.3h5v5h-5zM878.2,556.5h5v5h-5zM878.5,570.0h5v5h-5zM879.5,581.5h5v5h-5zM880.2,577.4h5v5h-5zM880.8,565.9h5v5h-5zM881.2,573.4h5v5h-5zM881.5,534.8h5v5h-5zM881.8,577.8h5v5h-5zM882.5,579.5h5v5h-5zM883.5,579.7h5v5h-5zM884.5,581.9h5v5h-5zM884.8,569.5h5v5h-5zM885.2,581.5h5v5h-5zM886.2,557.8h5v5h-5zM886.5,567.7h5v5h-5zM887.2,582.7h5v5h-5zM887.5,569.1h5v5h-5zM887.8,584.7h5v5h-5zM888.2,559.7h5v5h-5zM889.2,586.4h5v5h-5zM890.2,574.8h5v5h-5zM891.5,583.1h5v5h-5zM891.8,547.2h5v5h-5zM892.5,585.2h5v5h-5zM893.5,588.0h5v5h-5zM894.2,579.6h5v5h-5zM894.8,580.9h5v5h-5zM895.2,535.3h5v5h-5zM895.5,563.8h5v5h-5zM895.8,585.5h5v5h-5zM896.8,578.5h5v5h-5zM897.5,575.2h5v5h-5zM898.2,569.2h5v5h-5zM898.5,533.7h5v5h-5zM899.2,583.0h5v5h-5zM899.5,561.1h5v5h-5zM899.8,571.6h5v5h-5zM900.2,551.1h5v5h-5zM900.8,575.7h5v5h-5zM901.5,582.4h5v5h-5zM902.2,536.1h5v5h-5zM902.5,572.4h5v5h-5zM903.2,579.1h5v5h-5zM903.5,548.4h5v5h-5zM903.8,585.7h5v5h-5zM904.8,582.5h5v5h-5zM905.8,583.1h5v5h-5zM906.8,530.8h5v5h-5zM907.2,575.3h5v5h-5zM908.5,584.1h5v5h-5zM909.2,585.2h5v5h-5zM909.5,546.4h5v5h-5zM909.8,583.4h5v5h-5zM910.8,576.2h5v5h-5zM911.5,565.0h5v5h-5zM911.8,576.3h5v5h-5zM913.2,583.5h5v5h-5zM913.8,582.6h5v5h-5zM914.2,539.3h5v5h-5zM914.5,580.8h5v5h-5zM915.2,558.7h5v5h-5zM915.5,545.4h5v5h-5zM915.8,575.0h5v5h-5zM916.2,560.8h5v5h-5zM917.2,581.2h5v5h-5zM917.8,531.0h5v5h-5zM918.8,583.1h5v5h-5zM919.5,578.4h5v5h-5zM920.2,582.6h5v5h-5zM920.8,530.0h5v5h-5zM921.2,574.2h5v5h-5zM921.5,552.5h5v5h-5zM922.2,582.0h5v5h-5zM923.2,538.8h5v5h-5zM923.8,578.3h5v5h-5zM924.5,577.2h5v5h-5zM925.5,589.5h5v5h-5zM926.2,587.4h5v5h-5zM926.5,560.2h5v5h-5zM926.8,570.9h5v5h-5zM927.2,547.2h5v5h-5zM927.5,589.8h5v5h-5zM928.5,589.7h5v5h-5zM929.5,586.0h5v5h-5zM930.8,583.9h5v5h-5zM931.2,556.8h5v5h-5zM931.5,589.4h5v5h-5zM931.8,561.9h5v5h-5zM932.5,588.0h5v5h-5zM933.2,535.0h5v5h-5zM933.8,588.1h5v5h-5zM934.8,588.6h5v5h-5zM935.8,581.2h5v5h-5zM936.8,590.1h5v5h-5zM938.8,586.1h5v5h-5z" fill="#e0603c"/>
<polyline points="90.5,587.3 91.5,586.8 92.5,584.0 93.5,580.4 94.5,585.9 95.5,586.8 96.5,581.8 97.5,576.1 98.5,581.9 99.5,577.8 100.5,581.3 101.5,577.1 102.5,577.0 103.5,588.2 104.5,585.5 105.5,582.0 106.5,585.8 107.5,585.3 108.5,579.3 109.5,590.1 110.5,590.6 111.5,591.2 112.5,589.6 113.5,590.3 114.5,587.4 115.5,589.9 116.5,592.3 117.5,585.5 118.5,588.5 119.5,592.6 120.5,587.5 121.5,588.6 122.5,589.1 123.5,579.6 124.5,583.2 125.5,589.0 126.5,589.3 127.5,591.5 128.5,573.8 129.5,585.5 130.5,582.9 131.5,580.6 132.5,591.1 133.5,581.9 134.5,586.0 135.5,581.3 136.5,578.5 137.5,570.9 138.5,579.6 139.5,583.7 140.5,573.6 141.5,577.6 142.5,580.3 143.5,586.2 144.5,575.7 145.5,582.9 146.5,580.2 147.5,584.3 148.5,569.1 149.5,578.5 150.5,582.8 151.5,581.4 152.5,585.1 153.5,575.7 154.5,576.6 155.5,572.3 156.5,582.6 157.5,581.9 158.5,580.3 159.5,565.7 160.5,578.0 161.5,579.8 162.5,584.7 163.5,578.5 164.5,572.0 165.5,574.4 166.5,568.3 167.5,584.5 168.5,572.3 169.5,585.1 170.5,583.8 171.5,580.9 172.5,583.5 173.5,584.7 174.5,579.5 175.5,582.5 176.5,575.6 177.5,579.4 178.5,574.3 179.5,584.9 180.5,579.5 181.5,570.9 182.5,578.9 183.5,586.5 184.5,582.5 185.5,584.2 186.5,587.3 187.5,587.3 188.5,581.2 189.5,582.0 190.5,584.7 191.5,585.9 192.5,585.9 193.5,580.8 194.5,582.1 195.5,582.9 196.5,573.9 197.5,588.6 198.5,585.9 199.5,575.3 200.5,578.2 201.5,584.7 202.5,588.4 203.5,589.6 204.5,584.2 205.5,588.5 206.5,587.4 207.5,583.6 208.5,571.3 209.5,582.8 210.5,578.6 211.5,585.7 212.5,568.6 213.5,587.2 214.5,588.6 215.5,572.9 216.5,582.9 217.5,589.8 218.5,589.4 219.5,584.9 220.5,584.4 221.5,579.6 222.5,583.7 223.5,581.0 224.5,585.7 225.5,585.7 226.5,585.2 227.5,577.9 228.5,585.1 229.5,584.2 230.5,582.2 231.5,584.6 232.5,584.2 233.5,586.4 234.5,574.6 235.5,585.9 236.5,585.6 237.5,585.7 238.5,586.8 239.5,582.4 240.5,579.2 241.5,583.5 242.5,584.1 243.5,576.2 244.5,581.9 245.5,585.5 246.5,587.2 247.5,584.2 248.5,580.8 249.5,584.0 250.5,588.3 251.5,582.8 252.5,580.0 253.5,585.2 254.5,586.7 255.5,588.0 256.5,587.6 257.5,572.1 258.5,569.6 259.5,585.3 260.5,585.4 261.5,584.1 262.5,576.4 263.5,579.8 264.5,581.2 265.5,582.8 266.5,585.4 267.5,586.6 268.5,582.8 269.5,587.2 270.5,584.4 271.5,586.2 272.5,584.4 273.5,583.0 274.5,585.4 275.5,579.0 276.5,586.6 277.5,584.0 278.5,580.8 279.5,589.2 280.5,584.5 281.5,579.3 282.5,585.1 283.5,583.1 284.5,575.1 285.5,581.8 286.5,586.7 287.5,585.7 288.5,574.0 289.5,569.2 290.5,585.0 291.5,580.1 292.5,584.0 293.5,581.1 294.5,578.6 295.5,583.0 296.5,584.2 297.5,577.9 298.5,577.9 299.5,583.7 300.5,581.4 301.5,580.8 302.5,583.9 303.5,580.3 304.5,583.5 305.5,581.5 306.5,584.5 307.5,587.4 308.5,586.3 309.5,581.8 310.5,587.7 311.5,578.3 312.5,575.3 313.5,571.9 314.5,577.9 315.5,578.7 316.5,582.3 317.5,579.6 318.5,576.6 319.5,576.0 320.5,574.8 321.5,574.0 322.5,586.8 323.5,583.0 324.5,584.9 325.5,578.5 326.5,577.5 327.5,588.7 328.5,588.2 329.5,587.3 330.5,579.3 331.5,575.4 332.5,591.8 333.5,588.9 334.5,575.4 335.5,576.9 336.5,585.4 337.5,589.5 338.5,580.4 339.5,582.1 340.5,578.4 341.5,581.1 342.5,578.4 343.5,582.5 344.5,580.1 345.5,585.9 346.5,585.0 347.5,585.1 348.5,587.3 349.5,578.6 350.5,588.5 351.5,589.7 352.5,581.5 353.5,581.3 354.5,587.5 355.5,581.9 356.5,589.0 357.5,575.3 358.5,588.5 359.5,586.6 360.5,573.8 361.5,587.8 362.5,586.7 363.5,576.2 364.5,579.7 365.5,582.6 366.5,576.6 367.5,582.9 368.5,584.3 369.5,577.8 370.5,584.3 371.5,587.9 372.5,575.4 373.5,584.8 374.5,583.6 375.5,583.8 376.5,576.9 377.5,586.4 378.5,586.8 379.5,582.2 380.5,579.0 381.5,587.4 382.5,570.9 383.5,581.1 384.5,586.7 385.5,589.3 386.5,575.6 387.5,587.1 388.5,583.9 389.5,587.3 390.5,589.5 391.5,580.4 392.5,582.5 393.5,588.2 394.5,580.8 395.5,583.6 396.5,570.3 397.5,583.9 398.5,581.3 399.5,580.9 400.5,586.3 401.5,583.2 402.5,584.2 403.5,581.9 404.5,585.0 405.5,585.4 406.5,586.6 407.5,584.1 408.5,577.2 409.5,573.4 410.5,577.1 411.5,587.5 412.5,585.9 413.5,585.8 414.5,585.3 415.5,585.3 416.5,584.4 417.5,579.2 418.5,580.9 419.5,577.0 420.5,580.0 421.5,585.9 422.5,569.0 423.5,581.3 424.5,581.6 425.5,574.5 426.5,583.5 427.5,583.9 428.5,575.4 429.5,577.1 430.5,581.8 431.5,579.6 432.5,585.5 433.5,578.9 434.5,582.2 435.5,573.0 436.5,577.1 437.5,574.9 438.5,578.4 439.5,581.0 440.5,580.4 441.5,580.8 442.5,585.2 443.5,586.2 444.5,577.1 445.5,579.6 446.5,580.3 447.5,576.6 448.5,575.6 449.5,586.3 450.5,560.2 451.5,584.5 452.5,586.9 453.5,581.0 454.5,582.8 455.5,577.8 456.5,583.7 457.5,585.4 458.5,580.3 459.5,578.7 460.5,573.1 461.5,584.8 462.5,579.5 463.5,581.1 464.5,582.0 465.5,583.3 466.5,584.4 467.5,580.1 468.5,580.6 469.5,583.0 470.5,581.9 471.5,583.9 472.5,582.5 473.5,575.9 474.5,585.4 475.5,577.3 476.5,586.3 477.5,579.8 478.5,582.9 479.5,584.0 480.5,585.6 481.5,588.8 482.5,586.2 483.5,590.1 484.5,589.5 485.5,585.6 486.5,589.1 487.5,589.4 488.5,582.3 489.5,590.9 490.5,580.6 491.5,587.7 492.5,589.0 493.5,582.7 494.5,580.2 495.5,578.1 496.5,587.4 497.5,589.3 498.5,591.3 499.5,581.4 500.5,591.0 501.5,587.9 502.5,577.4 503.5,574.2 504.5,586.2 505.5,588.9 506.5,579.4 507.5,587.9 508.5,588.7 509.5,589.5 510.5,580.9 511.5,580.4 512.5,582.3 513.5,556.4 514.5,588.1 515.5,583.3 516.5,585.8 517.5,582.2 518.5,586.8 519.5,589.0 520.5,589.9 521.5,590.1 522.5,589.3 523.5,588.8 524.5,590.3 525.5,585.3 526.5,576.0 527.5,583.5 528.5,590.1 529.5,585.7 530.5,590.5 531.5,579.6 532.5,587.9 533.5,587.7 534.5,589.9 535.5,587.3 536.5,589.6 537.5,583.2 538.5,590.1 539.5,587.5 540.5,578.8 541.5,577.4 542.5,584.5 543.5,583.0 544.5,583.2 545.5,587.3 546.5,583.9 547.5,588.7 548.5,586.2 549.5,573.9 550.5,589.0 551.5,585.2 552.5,585.1 553.5,587.5 554.5,578.1 555.5,582.4 556.5,581.0 557.5,589.5 558.5,588.3 559.5,588.6 560.5,584.0 561.5,585.6 562.5,585.3 563.5,590.9 564.5,589.7 565.5,581.5 566.5,591.9 567.5,587.7 568.5,583.6 569.5,581.9 570.5,588.2 571.5,588.9 572.5,580.9 573.5,584.8 574.5,581.6 575.5,574.2 576.5,589.0 577.5,574.1 578.5,587.2 579.5,572.9 580.5,588.3 581.5,579.4 582.5,580.7 583.5,587.3 584.5,586.2 585.5,588.4 586.5,589.5 587.5,582.9 588.5,586.2 589.5,576.4 590.5,586.3 591.5,581.8 592.5,573.0 593.5,580.2 594.5,581.2 595.5,576.7 596.5,584.9 597.5,583.0 598.5,574.9 599.5,585.6 600.5,583.0 601.5,586.3 602.5,585.0 603.5,587.4 604.5,584.0 605.5,582.5 606.5,586.1 607.5,580.9 608.5,579.6 609.5,585.1 610.5,578.8 611.5,577.2 612.5,576.6 613.5,585.8 614.5,582.2 615.5,584.9 616.5,576.9 617.5,576.3 618.5,581.6 619.5,580.5 620.5,585.3 621.5,578.7 622.5,581.9 623.5,579.0 624.5,573.3 625.5,584.2 626.5,581.5 627.5,581.3 628.5,584.1 629.5,573.1 630.5,583.8 631.5,584.8 632.5,568.4 633.5,587.8 634.5,586.3 635.5,566.7 636.5,581.3 637.5,585.0 638.5,569.5 639.5,586.1 640.5,577.8 641.5,585.3 642.5,577.3 643.5,583.6 644.5,569.9 645.5,585.4 646.5,580.4 647.5,585.5 648.5,572.3 649.5,583.2 650.5,580.5 651.5,587.0 652.5,576.0 653.5,580.9 654.5,585.5 655.5,584.1 656.5,576.4 657.5,573.7 658.5,583.3 659.5,584.1 660.5,581.7 661.5,567.1 662.5,574.9 663.5,588.2 664.5,579.4 665.5,591.8 666.5,583.8 667.5,591.6 668.5,589.5 669.5,588.3 670.5,588.2 671.5,575.6 672.5,583.5 673.5,593.8 674.5,586.7 675.5,575.1 676.5,581.4 677.5,586.6 678.5,583.0 679.5,593.7 680.5,591.7 681.5,593.6 682.5,588.7 683.5,580.9 684.5,591.3 685.5,590.9 686.5,593.2 687.5,587.7 688.5,588.6 689.5,577.8 690.5,590.6 691.5,588.2 692.5,588.8 693.5,589.7 694.5,588.9 695.5,587.5 696.5,588.7 697.5,585.3 698.5,588.9 699.5,583.8 700.5,584.7 701.5,577.8 702.5,592.4 703.5,591.3 704.5,591.3 705.5,586.8 706.5,583.2 707.5,587.5 708.5,581.0 709.5,590.7 710.5,583.8 711.5,574.2 712.5,577.9 713.5,587.9 714.5,582.6 715.5,586.0 716.5,586.7 717.5,583.4 718.5,586.8 719.5,588.0 720.5,574.2 721.5,584.7 722.5,581.6 723.5,578.7 724.5,586.1 725.5,585.1 726.5,579.2 727.5,580.6 728.5,581.3 729.5,584.1 730.5,575.5 731.5,583.7 732.5,576.8 733.5,583.1 734.5,570.1 735.5,581.2 736.5,572.6 737.5,566.9 738.5,570.2 739.5,582.9 740.5,582.7 741.5,581.5 742.5,582.1 743.5,581.5 744.5,584.7 745.5,575.8 746.5,584.5 747.5,567.7 748.5,578.6 749.5,575.4 750.5,575.3 751.5,578.9 752.5,572.3 753.5,572.0 754.5,569.6 755.5,578.9 756.5,578.2 757.5,579.3 758.5,579.8 759.5,584.7 760.5,585.9 761.5,584.7 762.5,584.8 763.5,565.8 764.5,581.9 765.5,581.5 766.5,582.9 767.5,582.9 768.5,575.9 769.5,581.0 770.5,578.6 771.5,573.6 772.5,582.9 773.5,581.6 774.5,583.1 775.5,580.5 776.5,582.3 777.5,580.5 778.5,584.5 779.5,586.0 780.5,576.8 781.5,576.3 782.5,563.7 783.5,586.3 784.5,584.3 785.5,577.7 786.5,583.0 787.5,567.6 788.5,579.3 789.5,577.2 790.5,571.9 791.5,583.1 792.5,582.2 793.5,567.8 794.5,585.0 795.5,574.6 796.5,580.4 797.5,567.0 798.5,581.5 799.5,575.5 800.5,575.4 801.5,581.4 802.5,565.5 803.5,581.1 804.5,583.3 805.5,574.7 806.5,584.7 807.5,575.8 808.5,584.1 809.5,585.6 810.5,589.5 811.5,575.4 812.5,570.3 813.5,583.8 814.5,587.3 815.5,584.8 816.5,585.4 817.5,583.8 818.5,586.5 819.5,586.0 820.5,583.1 821.5,581.6 822.5,581.6 823.5,582.2 824.5,580.1 825.5,585.1 826.5,582.0 827.5,584.0 828.5,582.0 829.5,577.8 830.5,586.6 831.5,581.6 832.5,580.0 833.5,585.4 834.5,586.8 835.5,583.3 836.5,573.2 837.5,582.5 838.5,585.8 839.5,583.5 840.5,584.9 841.5,573.2 842.5,570.4 843.5,586.6 844.5,576.0 845.5,573.9 846.5,584.2 847.5,582.7 848.5,576.5 849.5,580.6 850.5,587.9 851.5,589.4 852.5,585.9 853.5,577.0 854.5,587.8 855.5,585.7 856.5,582.6 857.5,588.2 858.5,582.8 859.5,585.6 860.5,574.7 861.5,578.3 862.5,585.1 863.5,587.9 864.5,569.9 865.5,585.1 866.5,586.2 867.5,582.8 868.5,584.4 869.5,573.3 870.5,586.1 871.5,578.0 872.5,583.2 873.5,583.2 874.5,577.5 875.5,584.4 876.5,585.9 877.5,580.3 878.5,587.5 879.5,581.6 880.5,580.3 881.5,579.7 882.5,585.5 883.5,578.0 884.5,581.8 885.5,583.5 886.5,583.7 887.5,585.9 888.5,584.8 889.5,586.7 890.5,588.7 891.5,590.4 892.5,578.8 893.5,583.7 894.5,588.5 895.5,589.2 896.5,592.0 897.5,584.9 898.5,589.5 899.5,582.5 900.5,579.2 901.5,587.0 902.5,575.6 903.5,579.7 904.5,586.4 905.5,583.1 906.5,589.7 907.5,586.5 908.5,587.1 909.5,579.3 910.5,575.4 911.5,589.2 912.5,587.4 913.5,580.2 914.5,580.3 915.5,587.5 916.5,586.6 917.5,584.8 918.5,579.0 919.5,585.2 920.5,575.9 921.5,587.1 922.5,586.6 923.5,578.2 924.5,586.0 925.5,584.5 926.5,582.3 927.5,581.2 928.5,593.5 929.5,574.9 930.5,593.8 931.5,593.7 932.5,590.0 933.5,587.9 934.5,593.4 935.5,592.0 936.5,592.1 937.5,592.6 938.5,585.2 939.5,594.1 940.5,590.1 941.5,590.1" fill="none" stroke="#e4583a" stroke-width="3"/>
<polyline points="90.00,584.2 90.33,585.8 90.67,579.8 91.00,576.9 91.33,578.4 91.67,585.3 92.00,570.3 92.33,582.5 92.67,567.7 93.00,578.9 93.33,557.2 93.67,563.7 94.00,584.4 94.33,570.1 94.67,574.8 95.00,579.0 95.33,585.3 95.67,582.3 96.00,577.7 96.33,574.5 96.67,580.3 97.00,572.1 97.33,574.6 97.67,568.5 98.00,580.4 98.33,555.1 98.67,570.8 99.00,576.3 99.33,509.1 99.67,574.6 100.00,564.7 100.33,577.0 100.67,579.8 101.00,556.4 101.33,575.6 101.67,574.8 102.00,568.9 102.33,565.0 102.67,575.5 103.00,579.7 103.33,586.7 103.67,573.4 104.00,584.0 104.33,571.3 104.67,579.9 105.00,571.0 105.33,571.4 105.67,580.5 106.00,571.0 106.33,548.3 106.67,584.3 107.00,579.2 107.33,583.8 107.67,580.7 108.00,577.8 108.33,538.8 108.67,577.0 109.00,588.6 109.33,557.8 109.67,558.5 110.00,582.0 110.33,577.4 110.67,589.1 111.00,587.3 111.33,589.7 111.67,587.8 112.00,583.6 112.33,573.2 112.67,588.1 113.00,584.1 113.33,588.8 113.67,562.2 114.00,581.4 114.33,507.2 114.67,585.9 115.00,569.5 115.33,571.9 115.67,588.4 116.00,590.8 116.33,571.4 116.67,564.9 117.00,584.0 117.33,575.7 117.67,575.6 118.00,587.0 118.33,571.5 118.67,564.2 119.00,576.5 119.33,581.1 119.67,591.1 120.00,586.0 120.33,577.6 120.67,545.6 121.00,535.7 121.33,547.2 121.67,587.1 122.00,587.6 122.33,573.4 122.67,567.1 123.00,575.4 123.33,578.1 123.67,564.3 124.00,581.7 124.33,575.3 124.67,574.9 125.00,557.4 125.33,571.8 125.67,587.5 126.00,587.8 126.33,563.3 126.67,573.8 127.00,553.7 127.33,579.2 127.67,590.0 128.00,553.5 128.33,571.1 128.67,572.3 129.00,567.8 129.33,584.0 129.67,578.0 130.00,581.4 130.33,571.4 130.67,580.6 131.00,571.5 131.33,571.2 131.67,579.1 132.00,589.6 132.33,586.3 132.67,573.7 133.00,580.4 133.33,578.7 133.67,579.5 134.00,574.1 134.33,578.7 134.67,584.5 135.00,579.8 135.33,571.8 135.67,562.4 136.00,577.0 136.33,573.2 136.67,576.4 137.00,568.1 137.33,569.4 137.67,544.6 138.00,568.0 138.33,564.9 138.67,578.1 139.00,582.2 139.33,573.3 139.67,568.6 140.00,572.1 140.33,507.2 140.67,557.6 141.00,566.8 141.33,576.1 141.67,547.0 142.00,576.9 142.33,578.6 142.67,578.8 143.00,584.7 143.33,436.3 143.67,578.0 144.00,574.2 144.33,564.4 144.67,564.5 145.00,578.8 145.33,568.3 145.67,581.4 146.00,565.4 146.33,578.7 146.67,565.2 147.00,569.7 147.33,582.8 147.67,575.3 148.00,564.8 148.33,567.6 148.67,566.5 149.00,566.3 149.33,577.0 149.67,565.1 150.00,581.3 150.33,579.1 150.67,580.7 151.00,579.9 151.33,577.8 151.67,578.1 152.00,580.3 152.33,583.6 152.67,583.6 153.00,572.7 153.33,574.2 153.67,544.1 154.00,575.1 154.33,566.8 154.67,573.5 155.00,563.8 155.33,507.2 155.67,570.8 156.00,576.7 156.33,581.1 156.67,568.7 157.00,580.4 157.33,566.6 157.67,557.5 158.00,578.8 158.33,574.4 158.67,574.7 159.00,564.2 159.33,453.8 159.67,564.1 160.00,576.5 160.33,626.6 160.67,573.5 161.00,573.4 161.33,578.3 161.67,575.6 162.00,583.2 162.33,578.9 162.67,572.9 163.00,570.2 163.33,565.7 163.67,577.0 164.00,552.8 164.33,570.5 164.67,566.6 165.00,557.7 165.33,567.1 165.67,572.9 166.00,566.6 166.33,566.8 166.67,565.4 167.00,569.5 167.33,583.0 167.67,576.3 168.00,566.6 168.33,570.8 168.67,569.8 169.00,583.6 169.33,499.4 169.67,572.7 170.00,582.3 170.33,578.5 170.67,578.2 171.00,579.4 171.33,563.7 171.67,575.8 172.00,569.7 172.33,571.0 172.67,582.0 173.00,578.4 173.33,577.3 173.67,583.2 174.00,578.0 174.33,569.4 174.67,577.5 175.00,574.0 175.33,581.0 175.67,559.9 176.00,535.3 176.33,574.1 176.67,563.7 177.00,577.9 177.33,564.2 177.67,571.6 178.00,572.8 178.33,543.2 178.67,557.1 179.00,555.1 179.33,565.5 179.67,583.4 180.00,574.0 180.33,578.0 180.67,577.3 181.00,567.4 181.33,569.4 181.67,563.4 182.00,534.1 182.33,562.3 182.67,577.4 183.00,549.6 183.33,509.1 183.67,585.0 184.00,569.1 184.33,567.2 184.67,581.0 185.00,582.7 185.33,567.1 185.67,559.2 186.00,568.1 186.33,538.8 186.67,585.8 187.00,577.6 187.33,573.7 187.67,585.8 188.00,546.5 188.33,579.7 188.67,571.6 189.00,554.5 189.33,580.5 189.67,578.5 190.00,583.2 190.33,568.0 190.67,581.9 191.00,557.3 191.33,583.5 191.67,584.4 192.00,584.4 192.33,580.9 192.67,568.1 193.00,577.8 193.33,575.5 193.67,579.3 194.00,580.6 194.33,555.7 194.67,573.5 195.00,564.1 195.33,581.4 195.67,577.5 196.00,533.2 196.33,566.2 196.67,572.4 197.00,562.5 197.33,587.1 197.67,568.3 198.00,559.5 198.33,555.4 198.67,584.4 199.00,573.8 199.33,536.6 199.67,572.3 200.00,576.7 200.33,572.1 200.67,569.4 201.00,582.0 201.33,583.2 201.67,574.1 202.00,586.9 202.33,576.5 202.67,583.8 203.00,588.1 203.33,578.8 203.67,538.3 204.00,559.3 204.33,582.7 204.67,536.7 205.00,587.0 205.33,573.5 205.67,581.8 206.00,567.9 206.33,585.9 206.67,577.8 207.00,582.1 207.33,570.9 207.67,581.6 208.00,549.7 208.33,561.3 208.67,569.8 209.00,565.8 209.33,581.3 209.67,576.6 210.00,565.7 210.33,577.1 210.67,565.3 211.00,584.2 211.33,577.4 211.67,551.1 212.00,565.4 212.33,542.0 212.67,567.1 213.00,585.7 213.33,578.9 213.67,580.1 214.00,587.1 214.33,580.2 214.67,547.5 215.00,546.2 215.33,571.4 215.67,561.1 216.00,578.9 216.33,570.0 216.67,581.4 217.00,568.1 217.33,572.5 217.67,588.3 218.00,587.9 218.33,564.6 218.67,570.8 219.00,583.4 219.33,539.6 219.67,574.1 220.00,582.9 220.33,573.0 220.67,557.5 221.00,549.7 221.33,578.1 221.67,532.1 222.00,582.2 222.33,577.0 222.67,545.6 223.00,571.5 223.33,553.5 223.67,579.5 224.00,578.6 224.33,584.2 224.67,570.3 225.00,584.2 225.33,574.2 225.67,565.4 226.00,550.3 226.33,583.7 226.67,575.3 227.00,576.4 227.33,497.5 227.67,572.0 228.00,568.7 228.33,583.6 228.67,561.6 229.00,578.9 229.33,582.7 229.67,581.9 230.00,569.1 230.33,580.7 230.67,567.4 231.00,583.1 231.33,574.7 231.67,556.7 232.00,571.7 232.33,551.4 232.67,582.7 233.00,584.9 233.33,544.9 233.67,544.2 234.00,559.9 234.33,573.1 234.67,549.0 235.00,576.1 235.33,581.2 235.67,584.4 236.00,576.2 236.33,584.1 236.67,581.5 237.00,584.2 237.33,583.6 237.67,576.4 238.00,585.3 238.33,576.0 238.67,585.2 239.00,572.7 239.33,580.9 239.67,567.1 240.00,574.8 240.33,577.7 240.67,550.6 241.00,582.0 241.33,581.8 241.67,567.5 242.00,569.2 242.33,567.9 242.67,582.6 243.00,574.7 243.33,567.5 243.67,573.4 244.00,575.9 244.33,580.4 244.67,567.4 245.00,576.4 245.33,566.8 245.67,584.0 246.00,530.8 246.33,585.7 246.67,541.9 247.00,561.2 247.33,565.3 247.67,582.7 248.00,570.0 248.33,565.4 248.67,579.3 249.00,579.7 249.33,582.5 249.67,569.2 250.00,576.1 250.33,586.8 250.67,565.4 251.00,576.3 251.33,581.3 251.67,575.6 252.00,574.1 252.33,578.5 252.67,574.8 253.00,582.6 253.33,571.5 253.67,583.7 254.00,585.2 254.33,578.6 254.67,578.3 255.00,586.5 255.33,522.7 255.67,571.4 256.00,586.1 256.33,579.5 256.67,546.8 257.00,557.8 257.33,570.6 257.67,567.2 258.00,567.7 258.33,565.3 258.67,568.1 259.00,579.9 259.33,583.8 259.67,563.9 260.00,583.9 260.33,567.9 260.67,581.2 261.00,579.9 261.33,582.6 261.67,567.1 262.00,567.8 262.33,569.9 262.67,574.9 263.00,578.3 263.33,557.1 263.67,567.4 264.00,565.0 264.33,577.1 264.67,579.7 265.00,544.8 265.33,569.4 265.67,581.3 266.00,583.9 266.33,579.8 266.67,564.9 267.00,571.5 267.33,585.1 267.67,582.3 268.00,576.7 268.33,567.4 268.67,581.3 269.00,585.7 269.33,579.1 269.67,579.3 270.00,574.9 270.33,582.9 270.67,577.6 271.00,568.4 271.33,584.7 271.67,575.0 272.00,560.4 272.33,582.9 272.67,575.3 273.00,581.5 273.33,579.6 273.67,537.3 274.00,570.3 274.33,577.9 274.67,583.9 275.00,572.8 275.33,577.5 275.67,548.2 276.00,576.3 276.33,575.6 276.67,585.1 277.00,582.5 277.33,570.5 277.67,574.0 278.00,571.4 278.33,579.1 278.67,579.3 279.00,586.4 279.33,587.7 279.67,573.2 280.00,571.2 280.33,583.0 280.67,579.6 281.00,577.8 281.33,575.3 281.67,556.8 282.00,567.9 282.33,583.6 282.67,569.1 283.00,581.6 283.33,511.1 283.67,569.4 284.00,573.6 284.33,567.6 284.67,570.2 285.00,569.6 285.33,572.0 285.67,580.3 286.00,573.6 286.33,567.5 286.67,585.2 287.00,566.6 287.33,582.4 287.67,584.2 288.00,571.9 288.33,569.7 288.67,572.5 289.00,567.7 289.33,566.1 289.67,566.5 290.00,555.6 290.33,580.0 290.67,583.5 291.00,556.8 291.33,567.5 291.67,578.6 292.00,582.5 292.33,580.5 292.67,576.1 293.00,579.6 293.33,570.4 293.67,578.6 294.00,538.1 294.33,559.6 294.67,577.1 295.00,569.9 295.33,571.4 295.67,581.5 296.00,564.9 296.33,582.7 296.67,582.1 297.00,566.4 297.33,576.4 297.67,570.2 298.00,576.4 298.33,569.5 298.67,567.3 299.00,582.2 299.33,576.5 299.67,573.8 300.00,570.9 300.33,518.9 300.67,579.9 301.00,579.3 301.33,566.3 301.67,567.0 302.00,582.4 302.33,563.2 302.67,570.1 303.00,578.8 303.33,573.0 303.67,575.4 304.00,582.0 304.33,571.6 304.67,573.8 305.00,580.0 305.33,577.3 305.67,579.7 306.00,564.9 306.33,583.0 306.67,571.9 307.00,585.9 307.33,582.3 307.67,585.6 308.00,584.8 308.33,543.8 308.67,568.7 309.00,580.3 309.33,541.9 309.67,578.8 310.00,574.4 310.33,583.0 310.67,586.2 311.00,570.6 311.33,576.3 311.67,576.8 312.00,573.8 312.33,570.8 312.67,558.6 313.00,570.4 313.33,524.7 313.67,567.7 314.00,571.4 314.33,553.6 314.67,576.4 315.00,572.9 315.33,577.2 315.67,571.3 316.00,580.8 316.33,576.6 316.67,577.6 317.00,567.0 317.33,572.7 317.67,578.1 318.00,566.2 318.33,575.1 318.67,570.2 319.00,538.8 319.33,574.5 319.67,571.7 320.00,573.3 320.33,556.7 320.67,567.1 321.00,572.5 321.33,570.9 321.67,566.4 322.00,585.3 322.33,578.4 322.67,578.1 323.00,572.5 323.33,581.5 323.67,571.9 324.00,539.7 324.33,571.1 324.67,583.4 325.00,572.1 325.33,575.3 325.67,577.0 326.00,569.1 326.33,576.0 326.67,572.6 327.00,583.5 327.33,587.2 327.67,565.7 328.00,566.9 328.33,585.2 328.67,586.7 329.00,575.9 329.33,585.8 329.67,581.0 330.00,577.8 330.33,520.8 330.67,537.2 331.00,573.9 331.33,562.0 331.67,573.7 332.00,590.3 332.33,571.1 332.67,585.3 333.00,587.4 333.33,574.4 333.67,587.0 334.00,559.1 334.33,571.7 334.67,573.9 335.00,571.5 335.33,572.5 335.67,575.4 336.00,574.3 336.33,571.4 336.67,583.9 337.00,586.4 337.33,588.0 337.67,586.2 338.00,578.9 338.33,571.5 338.67,571.9 339.00,577.6 339.33,572.0 339.67,580.6 340.00,549.9 340.33,576.3 340.67,576.9 341.00,570.4 341.33,509.1 341.67,579.6 342.00,568.9 342.33,576.9 342.67,572.1 343.00,580.1 343.33,574.1 343.67,581.0 344.00,578.6 344.33,567.0 344.67,566.0 345.00,584.4 345.33,570.1 345.67,573.8 346.00,583.5 346.33,578.0 346.67,573.9 347.00,575.1 347.33,562.6 347.67,583.6 348.00,585.8 348.33,561.4 348.67,573.4 349.00,561.4 349.33,576.6 349.67,577.1 350.00,584.9 350.33,579.8 350.67,587.0 351.00,588.2 351.33,570.2 351.67,581.3 352.00,561.4 352.33,495.5 352.67,580.0 353.00,579.8 353.33,569.5 353.67,576.9 354.00,586.0 354.33,576.7 354.67,564.1 355.00,580.4 355.33,569.1 355.67,553.5 356.00,586.0 356.33,583.6 356.67,587.5 357.00,573.8 357.33,567.9 357.67,569.8 358.00,587.0 358.33,582.3 358.67,583.3 359.00,571.2 359.33,569.5 359.67,585.1 360.00,572.3 360.33,567.6 360.67,566.9 361.00,586.3 361.33,573.2 361.67,584.8 362.00,571.5 362.33,568.8 362.67,585.2 363.00,574.7 363.33,572.7 363.67,570.3 364.00,573.5 364.33,578.2 364.67,570.8 365.00,534.6 365.33,581.1 365.67,567.3 366.00,570.4 366.33,575.1 366.67,548.8 367.00,581.4 367.33,509.1 367.67,574.0 368.00,569.8 368.33,582.4 368.67,582.8 369.00,576.3 369.33,570.2 369.67,571.4 370.00,570.7 370.33,582.8 370.67,560.9 371.00,569.6 371.33,586.4 371.67,571.8 372.00,572.7 372.33,545.6 372.67,573.9 373.00,583.3 373.33,572.1 373.67,577.8 374.00,570.6 374.33,582.1 374.67,568.4 375.00,561.6 375.33,574.4 375.67,582.3 376.00,571.8 376.33,574.5 376.67,575.4 377.00,584.9 377.33,552.3 377.67,572.8 378.00,582.5 378.33,578.7 378.67,585.3 379.00,565.6 379.33,561.3 379.67,580.7 380.00,577.5 380.33,514.0 380.67,566.8 381.00,585.8 381.33,583.1 381.67,585.9 382.00,569.4 382.33,568.0 382.67,566.6 383.00,579.6 383.33,568.3 383.67,576.5 384.00,568.7 384.33,580.3 384.67,585.2 385.00,547.8 385.33,587.8 385.67,581.4 386.00,560.3 386.33,567.8 386.67,574.1 387.00,568.5 387.33,585.6 387.67,569.4 388.00,582.4 388.33,573.0 388.67,581.8 389.00,585.8 389.33,584.9 389.67,585.3 390.00,588.0 390.33,584.2 390.67,569.2 391.00,569.0 391.33,558.2 391.67,578.9 392.00,569.0 392.33,561.5 392.67,581.0 393.00,563.3 393.33,584.9 393.67,586.7 394.00,576.5 394.33,570.0 394.67,579.3 395.00,582.1 395.33,564.2 395.67,577.4 396.00,568.8 396.33,567.1 396.67,568.7 397.00,582.4 397.33,511.1 397.67,582.2 398.00,565.9 398.33,546.0 398.67,579.8 399.00,564.6 399.33,579.4 399.67,555.9 400.00,578.1 400.33,584.8 400.67,559.8 401.00,575.8 401.33,562.3 401.67,581.7 402.00,568.8 402.33,580.5 402.67,582.7 403.00,574.4 403.33,580.4 403.67,570.2 404.00,572.9 404.33,583.5 404.67,576.6 405.00,583.9 405.33,578.4 405.67,557.4 406.00,585.1 406.33,561.0 406.67,563.0 407.00,568.8 407.33,582.6 407.67,573.9 408.00,575.5 408.33,575.7 408.67,571.7 409.00,568.7 409.33,571.9 409.67,571.1 410.00,568.6 410.33,501.4 410.67,575.6 411.00,586.0 411.33,554.7 411.67,584.3 412.00,569.7 412.33,584.4 412.67,582.4 413.00,574.1 413.33,575.7 413.67,584.3 414.00,559.7 414.33,583.8 414.67,576.1 415.00,583.8 415.33,583.5 415.67,568.7 416.00,574.6 416.33,582.9 416.67,557.7 417.00,577.7 417.33,561.2 417.67,567.0 418.00,579.3 418.33,579.4 418.67,566.2 419.00,567.5 419.33,568.8 419.67,575.5 420.00,530.9 420.33,577.4 420.67,578.5 421.00,584.4 421.33,575.5 421.67,582.9 422.00,547.5 422.33,536.0 422.67,567.5 423.00,564.8 423.33,516.9 423.67,579.8 424.00,566.4 424.33,580.1 424.67,576.3 425.00,542.0 425.33,513.0 425.67,573.0 426.00,537.7 426.33,575.6 426.67,582.0 427.00,582.4 427.33,576.8 427.67,580.1 428.00,573.9 428.33,559.4 428.67,571.9 429.00,570.7 429.33,574.0 429.67,575.6 430.00,580.3 430.33,574.8 430.67,573.3 431.00,578.1 431.33,562.8 431.67,575.3 432.00,565.2 432.33,569.6 432.67,584.0 433.00,561.1 433.33,577.4 433.67,570.3 434.00,580.7 434.33,533.8 434.67,578.4 435.00,571.5 435.33,568.0 435.67,560.4 436.00,570.2 436.33,575.6 436.67,570.9 437.00,563.9 437.33,564.9 437.67,573.4 438.00,565.8 438.33,576.9 438.67,567.6 439.00,577.7 439.33,576.1 439.67,579.5 440.00,574.2 440.33,578.9 440.67,568.2 441.00,576.5 441.33,579.3 441.67,573.8 442.00,583.7 442.33,562.0 442.67,556.3 443.00,543.9 443.33,525.6 443.67,584.7 444.00,575.6 444.33,555.9 444.67,565.5 445.00,575.4 445.33,578.1 445.67,574.0 446.00,566.9 446.33,575.7 446.67,578.8 447.00,575.1 447.33,568.7 447.67,539.9 448.00,574.1 448.33,549.6 448.67,570.3 449.00,580.5 449.33,536.9 449.67,584.8 450.00,553.4 450.33,547.7 450.67,558.7 451.00,581.1 451.33,576.6 451.67,583.0 452.00,574.3 452.33,566.2 452.67,585.4 453.00,570.1 453.33,499.4 453.67,579.5 454.00,559.5 454.33,581.3 454.67,573.9 455.00,571.8 455.33,564.5 455.67,576.3 456.00,581.3 456.33,582.2 456.67,580.8 457.00,567.5 457.33,567.8 457.67,583.9 458.00,577.6 458.33,577.0 458.67,578.8 459.00,565.9 459.33,577.2 459.67,576.4 460.00,566.1 460.33,564.7 460.67,571.6 461.00,583.3 461.33,530.6 461.67,565.9 462.00,578.0 462.33,564.6 462.67,564.8 463.00,576.2 463.33,579.6 463.67,566.2 464.00,567.9 464.33,580.5 464.67,580.3 465.00,548.6 465.33,581.8 465.67,576.3 466.00,582.9 466.33,567.4 466.67,579.3 467.00,578.6 467.33,511.1 467.67,577.5 468.00,570.2 468.33,579.1 468.67,562.0 469.00,567.7 469.33,581.5 469.67,570.1 470.00,565.4 470.33,565.6 470.67,580.4 471.00,582.4 471.33,579.8 471.67,559.7 472.00,580.2 472.33,581.0 472.67,563.9 473.00,574.4 473.33,569.7 473.67,572.1 474.00,579.3 474.33,583.9 474.67,568.4 475.00,572.3 475.33,574.5 475.67,575.8 476.00,584.8 476.33,581.7 476.67,571.8 477.00,578.3 477.33,559.5 477.67,558.9 478.00,581.4 478.33,573.3 478.67,580.1 479.00,574.0 479.33,582.5 479.67,564.2 480.00,584.1 480.33,569.3 480.67,573.5 481.00,587.3 481.33,495.5 481.67,580.5 482.00,581.9 482.33,584.7 482.67,563.0 483.00,583.3 483.33,574.6 483.67,588.6 484.00,559.1 484.33,588.0 484.67,560.1 485.00,584.1 485.33,573.0 485.67,570.6 486.00,587.6 486.33,581.5 486.67,572.7 487.00,587.9 487.33,544.1 487.67,539.3 488.00,573.1 488.33,580.8 488.67,575.9 489.00,579.8 489.33,550.0 489.67,589.4 490.00,573.8 490.33,579.1 490.67,547.1 491.00,585.2 491.33,583.0 491.67,586.2 492.00,587.5 492.33,576.6 492.67,585.3 493.00,581.2 493.33,545.9 493.67,572.2 494.00,578.7 494.33,573.6 494.67,574.7 495.00,576.6 495.33,516.9 495.67,573.2 496.00,584.3 496.33,585.9 496.67,584.4 497.00,575.8 497.33,587.8 497.67,580.5 498.00,586.7 498.33,589.8 498.67,549.3 499.00,575.4 499.33,552.9 499.67,579.9 500.00,585.9 500.33,589.5 500.67,563.6 501.00,570.4 501.33,584.2 501.67,586.4 502.00,573.3 502.33,566.0 502.67,575.9 503.00,560.3 503.33,572.7 503.67,561.7 504.00,584.7 504.33,565.2 504.67,577.1 505.00,571.3 505.33,587.4 505.67,575.4 506.00,573.8 506.33,559.5 506.67,577.9 507.00,582.0 507.33,586.4 507.67,584.7 508.00,568.3 508.33,587.2 508.67,584.1 509.00,588.0 509.33,560.1 509.67,579.3 510.00,574.5 510.33,579.4 510.67,579.0 511.00,571.1 511.33,566.1 511.67,578.9 512.00,580.8 512.33,509.1 512.67,578.5 513.00,544.2 513.33,554.9 513.67,538.5 514.00,586.6 514.33,575.4 514.67,576.2 515.00,541.1 515.33,581.8 515.67,570.0 516.00,584.3 516.33,579.1 516.67,574.9 517.00,576.7 517.33,577.9 517.67,580.7 518.00,585.3 518.33,559.2 518.67,571.7 519.00,587.5 519.33,584.4 519.67,578.4 520.00,578.1 520.33,579.5 520.67,588.4 521.00,588.6 521.33,572.5 521.67,575.6 522.00,587.8 522.33,516.9 522.67,573.2 523.00,586.6 523.33,541.8 523.67,587.3 524.00,588.8 524.33,582.4 524.67,577.8 525.00,583.8 525.33,581.2 525.67,559.2 526.00,560.2 526.33,555.3 526.67,574.5 527.00,574.1 527.33,572.8 527.67,582.0 528.00,570.2 528.33,588.6 528.67,587.5 529.00,573.1 529.33,570.6 529.67,584.2 530.00,580.3 530.33,562.6 530.67,589.0 531.00,573.1 531.33,578.1 531.67,575.4 532.00,586.4 532.33,564.2 532.67,572.8 533.00,551.1 533.33,586.2 533.67,571.4 534.00,588.4 534.33,572.4 534.67,581.1 535.00,585.8 535.33,565.2 535.67,563.3 536.00,582.3 536.33,570.8 536.67,588.1 537.00,581.6 537.33,497.5 537.67,581.7 538.00,577.2 538.33,588.6 538.67,568.9 539.00,586.0 539.33,583.4 539.67,578.8 540.00,577.3 540.33,569.4 540.67,559.0 541.00,573.1 541.33,556.4 541.67,575.9 542.00,583.0 542.33,570.9 542.67,538.3 543.00,573.1 543.33,578.3 543.67,581.5 544.00,580.3 544.33,581.7 544.67,568.4 545.00,581.1 545.33,520.8 545.67,585.8 546.00,570.8 546.33,579.5 546.67,582.4 547.00,587.2 547.33,582.3 547.67,577.3 548.00,544.3 548.33,562.9 548.67,584.7 549.00,568.2 549.33,572.4 549.67,570.5 550.00,578.2 550.33,564.2 550.67,587.5 551.00,582.4 551.33,583.4 551.67,583.7 552.00,570.1 552.33,583.6 552.67,568.0 553.00,586.0 553.33,569.7 553.67,584.8 554.00,576.6 554.33,561.3 554.67,565.4 555.00,572.4 555.33,579.5 555.67,580.9 556.00,579.5 556.33,575.2 556.67,578.0 557.00,583.0 557.33,588.0 557.67,540.1 558.00,558.8 558.33,573.9 558.67,586.8 559.00,585.9 559.33,587.1 559.67,580.4 560.00,577.1 560.33,575.8 560.67,582.5 561.00,584.1 561.33,573.8 561.67,583.1 562.00,569.5 562.33,583.8 562.67,570.3 563.00,589.4 563.33,576.3 563.67,582.4 564.00,554.7 564.33,588.2 564.67,587.4 565.00,580.0 565.33,482.9 565.67,545.9 566.00,587.1 566.33,572.1 566.67,590.4 567.00,586.2 567.33,552.4 567.67,584.4 568.00,582.1 568.33,573.2 568.67,576.8 569.00,578.6 569.33,574.2 569.67,580.4 570.00,573.1 570.33,542.4 570.67,586.7 571.00,582.9 571.33,587.4 571.67,578.3 572.00,571.0 572.33,579.4 572.67,573.2 573.00,566.8 573.33,573.6 573.67,583.3 574.00,571.7 574.33,575.6 574.67,580.1 575.00,571.0 575.33,570.8 575.67,572.7 576.00,565.4 576.33,554.0 576.67,587.5 577.00,567.9 577.33,569.1 577.67,572.6 578.00,584.1 578.33,585.7 578.67,568.8 579.00,569.5 579.33,473.2 579.67,571.4 580.00,586.8 580.33,582.9 580.67,585.5 581.00,567.5 581.33,569.9 581.67,577.9 582.00,579.2 582.33,574.0 582.67,573.0 583.00,585.8 583.33,578.1 583.67,564.8 584.00,568.5 584.33,561.5 584.67,584.7 585.00,586.9 585.33,577.9 585.67,576.9 586.00,588.0 586.33,518.9 586.67,576.9 587.00,568.0 587.33,559.6 587.67,581.4 588.00,568.0 588.33,579.8 588.67,584.7 589.00,558.3 589.33,568.6 589.67,574.9 590.00,582.4 590.33,584.8 590.67,558.0 591.00,566.1 591.33,580.3 591.67,575.7 592.00,567.0 592.33,571.5 592.67,560.7 593.00,566.3 593.33,573.6 593.67,578.7 594.00,578.3 594.33,573.8 594.67,579.7 595.00,575.2 595.33,573.7 595.67,567.7 596.00,571.5 596.33,576.5 596.67,583.4 597.00,538.7 597.33,575.6 597.67,581.5 598.00,569.6 598.33,573.4 598.67,556.4 599.00,565.6 599.33,569.6 599.67,584.1 600.00,581.5 600.33,523.7 600.67,576.0 601.00,584.8 601.33,566.3 601.67,577.4 602.00,570.3 602.33,583.5 602.67,579.0 603.00,581.6 603.33,579.4 603.67,585.9 604.00,574.6 604.33,582.5 604.67,580.4 605.00,581.0 605.33,564.7 605.67,568.3 606.00,577.1 606.33,573.0 606.67,584.6 607.00,578.0 607.33,579.4 607.67,572.1 608.00,578.1 608.33,507.2 608.67,563.0 609.00,546.7 609.33,571.5 609.67,583.6 610.00,577.3 610.33,574.9 610.67,554.9 611.00,573.0 611.33,575.7 611.67,558.9 612.00,566.9 612.33,575.1 612.67,568.3 613.00,570.0 613.33,584.3 613.67,573.9 614.00,569.5 614.33,580.7 614.67,568.5 615.00,583.4 615.33,573.7 615.67,571.4 616.00,575.4 616.33,571.2 616.67,573.4 617.00,546.7 617.33,563.7 617.67,574.8 618.00,565.2 618.33,580.0 618.67,580.1 619.00,560.0 619.33,576.7 619.67,579.0 620.00,557.7 620.33,514.0 620.67,583.8 621.00,577.2 621.33,574.7 621.67,577.1 622.00,580.4 622.33,559.1 622.67,577.9 623.00,575.8 623.33,577.5 623.67,567.8 624.00,569.4 624.33,571.8 624.67,564.7 625.00,565.8 625.33,574.8 625.67,582.7 626.00,562.7 626.33,580.0 626.67,558.5 627.00,573.7 627.33,570.2 627.67,579.8 628.00,562.6 628.33,562.2 628.67,582.6 629.00,565.4 629.33,571.6 629.67,566.7 630.00,582.3 630.33,571.4 630.67,568.8 631.00,581.3 631.33,579.7 631.67,583.3 632.00,563.4 632.33,565.0 632.67,566.9 633.00,586.3 633.33,574.0 633.67,576.0 634.00,577.7 634.33,497.5 634.67,584.8 635.00,565.2 635.33,554.1 635.67,539.4 636.00,579.8 636.33,576.6 636.67,547.1 637.00,568.9 637.33,575.4 637.67,583.5 638.00,568.0 638.33,563.7 638.67,565.2 639.00,566.1 639.33,566.4 639.67,584.6 640.00,576.3 640.33,570.2 640.67,569.2 641.00,583.8 641.33,583.3 641.67,569.1 642.00,575.8 642.33,574.7 642.67,572.0 643.00,573.5 643.33,577.7 643.67,582.1 644.00,566.3 644.33,568.4 644.67,561.1 645.00,583.9 645.33,564.5 645.67,575.1 646.00,576.6 646.33,575.3 646.67,578.9 647.00,578.2 647.33,584.0 647.67,568.9 648.00,568.6 648.33,567.6 648.67,570.8 649.00,572.9 649.33,571.7 649.67,581.7 650.00,579.0 650.33,505.3 650.67,565.9 651.00,582.2 651.33,570.9 651.67,585.5 652.00,574.5 652.33,557.0 652.67,572.4 653.00,579.4 653.33,576.8 653.67,565.6 654.00,540.5 654.33,584.0 654.67,570.7 655.00,582.5 655.33,582.6 655.67,580.8 656.00,565.3 656.33,546.8 656.67,574.9 657.00,566.5 657.33,572.0 657.67,572.2 658.00,557.7 658.33,570.4 658.67,581.8 659.00,546.2 659.33,582.6 659.67,554.0 660.00,559.3 660.33,558.8 660.67,580.2 661.00,559.5 661.33,565.6 661.67,542.1 662.00,550.0 662.33,549.2 662.67,573.4 663.00,586.7 663.33,503.3 663.67,572.7 664.00,576.9 664.33,575.6 664.67,577.9 665.00,538.8 665.33,590.3 665.67,575.1 666.00,580.1 666.33,563.9 666.67,582.3 667.00,590.1 667.33,583.8 667.67,583.0 668.00,588.0 668.33,575.1 668.67,586.4 669.00,586.8 669.33,583.3 669.67,575.9 670.00,578.4 670.33,575.5 670.67,586.7 671.00,547.7 671.33,574.1 671.67,574.0 672.00,582.0 672.33,545.0 672.67,560.7 673.00,570.4 673.33,592.3 673.67,573.1 674.00,575.9 674.33,585.2 674.67,581.2 675.00,567.6 675.33,573.6 675.67,566.4 676.00,579.9 676.33,573.1 676.67,579.2 677.00,585.1 677.33,579.0 677.67,568.0 678.00,572.9 678.33,575.8 678.67,581.5 679.00,577.6 679.33,566.1 679.67,592.2 680.00,590.2 680.33,538.7 680.67,581.0 681.00,592.1 681.33,577.8 681.67,587.4 682.00,587.2 682.33,584.6 682.67,556.5 683.00,579.4 683.33,505.3 683.67,579.1 684.00,589.8 684.33,576.2 684.67,585.9 685.00,582.4 685.33,571.1 685.67,589.4 686.00,591.7 686.33,584.9 686.67,552.3 687.00,586.2 687.33,551.0 687.67,583.5 688.00,587.1 688.33,584.5 688.67,549.5 689.00,573.7 689.33,575.1 689.67,576.3 690.00,589.1 690.33,582.6 690.67,578.6 691.00,586.7 691.33,573.7 691.67,586.6 692.00,587.3 692.33,458.7 692.67,567.5 693.00,573.8 693.33,588.2 693.67,582.1 694.00,579.6 694.33,577.1 694.67,587.4 695.00,574.1 695.33,579.9 695.67,586.0 696.00,542.6 696.33,586.3 696.67,587.2 697.00,576.6 697.33,583.8 697.67,576.0 698.00,587.4 698.33,585.9 698.67,576.8 699.00,582.3 699.33,582.3 699.67,576.6 700.00,576.6 700.33,518.9 700.67,583.2 701.00,565.0 701.33,576.3 701.67,574.9 702.00,578.3 702.33,580.0 702.67,590.9 703.00,575.3 703.33,587.5 703.67,589.8 704.00,571.7 704.33,584.1 704.67,589.8 705.00,567.9 705.33,578.2 705.67,585.3 706.00,581.7 706.33,574.3 706.67,573.8 707.00,586.0 707.33,583.6 707.67,578.9 708.00,574.3 708.33,573.4 708.67,579.5 709.00,574.6 709.33,580.2 709.67,589.2 710.00,575.7 710.33,582.3 710.67,578.4 711.00,572.7 711.33,551.9 711.67,546.5 712.00,560.4 712.33,520.8 712.67,576.4 713.00,581.0 713.33,586.4 713.67,584.4 714.00,575.1 714.33,581.1 714.67,575.6 715.00,584.5 715.33,575.5 715.67,551.9 716.00,534.8 716.33,574.8 716.67,585.2 717.00,571.7 717.33,576.4 717.67,581.9 718.00,576.2 718.33,556.3 718.67,585.3 719.00,570.5 719.33,579.4 719.67,586.5 720.00,572.7 720.33,565.4 720.67,558.2 721.00,568.7 721.33,583.2 721.67,575.0 722.00,580.1 722.33,510.1 722.67,565.9 723.00,550.9 723.33,577.2 723.67,567.8 724.00,584.6 724.33,572.8 724.67,584.5 725.00,557.3 725.33,583.6 725.67,559.3 726.00,577.7 726.33,566.2 726.67,571.1 727.00,579.1 727.33,560.2 727.67,571.9 728.00,579.8 728.33,571.9 728.67,569.3 729.00,582.3 729.33,582.6 729.67,575.5 730.00,569.1 730.33,570.4 730.67,574.0 731.00,565.0 731.33,582.2 731.67,563.3 732.00,575.3 732.33,566.4 732.67,567.9 733.00,581.0 733.33,543.5 733.67,581.6 734.00,563.5 734.33,568.6 734.67,532.5 735.00,559.4 735.33,522.7 735.67,579.7 736.00,544.3 736.33,565.1 736.67,571.1 737.00,565.4 737.33,553.0 737.67,564.0 738.00,564.6 738.33,568.7 738.67,565.1 739.00,580.3 739.33,575.6 739.67,581.4 740.00,581.2 740.33,554.3 740.67,579.4 741.00,577.8 741.33,580.0 741.67,546.9 742.00,580.6 742.33,565.3 742.67,561.5 743.00,576.8 743.33,580.0 743.67,563.2 744.00,583.2 744.33,581.1 744.67,571.3 745.00,574.3 745.33,571.2 745.67,565.0 746.00,567.4 746.33,556.0 746.67,583.0 747.00,566.2 747.33,565.6 747.67,564.2 748.00,568.9 748.33,577.1 748.67,576.5 749.00,573.9 749.33,546.1 749.67,530.7 750.00,553.5 750.33,462.5 750.67,573.8 751.00,577.4 751.33,553.6 751.67,566.2 752.00,563.6 752.33,570.8 752.67,564.7 753.00,568.7 753.33,570.5 753.67,549.5 754.00,568.1 754.33,562.3 754.67,562.8 755.00,561.8 755.33,577.4 755.67,563.4 756.00,576.7 756.33,562.0 756.67,573.5 757.00,568.5 757.33,567.5 757.67,577.8 758.00,569.2 758.33,578.3 758.67,534.1 759.00,570.7 759.33,570.1 759.67,583.2 760.00,584.4 760.33,581.9 760.67,574.9 761.00,548.0 761.33,569.5 761.67,583.2 762.00,576.9 762.33,576.2 762.67,583.3 763.00,540.9 763.33,564.3 763.67,562.5 764.00,557.3 764.33,501.4 764.67,580.4 765.00,562.3 765.33,571.9 765.67,580.0 766.00,581.4 766.33,549.6 766.67,571.4 767.00,581.4 767.33,565.2 767.67,562.7 768.00,567.4 768.33,565.9 768.67,574.4 769.00,579.5 769.33,565.4 769.67,573.9 770.00,577.0 770.33,577.1 770.67,574.2 771.00,572.1 771.33,561.0 771.67,564.9 772.00,581.4 772.33,579.8 772.67,567.8 773.00,580.1 773.33,579.1 773.67,573.9 774.00,581.6 774.33,573.6 774.67,535.3 775.00,579.0 775.33,516.9 775.67,553.1 776.00,562.4 776.33,536.6 776.67,580.8 777.00,561.0 777.33,579.0 777.67,556.7 778.00,583.0 778.33,578.1 778.67,571.1 779.00,582.2 779.33,543.1 779.67,584.5 780.00,574.3 780.33,575.3 780.67,574.0 781.00,574.8 781.33,571.8 781.67,568.7 782.00,533.7 782.33,558.9 782.67,562.2 783.00,573.2 783.33,564.0 783.67,584.8 784.00,582.8 784.33,570.4 784.67,566.6 785.00,571.9 785.33,566.5 785.67,576.2 786.00,566.6 786.33,565.7 786.67,581.5 787.00,563.7 787.33,551.2 787.67,566.1 788.00,577.3 788.33,571.9 788.67,577.8 789.00,568.4 789.33,572.8 789.67,575.7 790.00,570.4 790.33,515.0 790.67,565.0 791.00,581.6 791.33,572.5 791.67,563.3 792.00,580.7 792.33,574.8 792.67,565.8 793.00,566.3 793.33,541.0 793.67,538.4 794.00,565.2 794.33,583.5 794.67,578.0 795.00,542.6 795.33,573.1 795.67,554.5 796.00,573.4 796.33,578.9 796.67,571.9 797.00,565.5 797.33,542.3 797.67,565.4 798.00,580.0 798.33,578.5 798.67,576.2 799.00,569.8 799.33,568.5 799.67,574.0 800.00,567.3 800.33,573.9 800.67,569.1 801.00,579.9 801.33,531.2 801.67,574.8 802.00,541.9 802.33,564.0 802.67,561.2 803.00,576.5 803.33,568.3 803.67,579.6 804.00,578.9 804.33,581.8 804.67,576.2 805.00,573.2 805.33,536.8 805.67,571.3 806.00,582.3 806.33,520.8 806.67,583.2 807.00,567.1 807.33,570.0 807.67,574.3 808.00,567.8 808.33,572.0 808.67,582.6 809.00,562.3 809.33,560.0 809.67,584.1 810.00,577.3 810.33,582.6 810.67,588.0 811.00,573.9 811.33,507.2 811.67,573.5 812.00,558.6 812.33,568.8 812.67,557.0 813.00,577.1 813.33,579.2 813.67,582.3 814.00,585.8 814.33,585.6 814.67,573.2 815.00,571.2 815.33,580.3 815.67,583.3 816.00,538.9 816.33,583.9 816.67,579.2 817.00,582.3 817.33,570.6 817.67,575.0 818.00,572.5 818.33,570.8 818.67,585.0 819.00,575.3 819.33,582.8 819.67,584.5 820.00,581.6 820.33,577.8 820.67,571.5 821.00,571.4 821.33,580.1 821.67,571.8 822.00,567.3 822.33,579.2 822.67,580.1 823.00,580.7 823.33,568.3 823.67,565.5 824.00,578.6 824.33,570.1 824.67,572.3 825.00,583.6 825.33,515.9 825.67,530.5 826.00,580.5 826.33,574.2 826.67,577.2 827.00,573.9 827.33,582.5 827.67,576.9 828.00,579.7 828.33,580.5 828.67,575.4 829.00,569.5 829.33,576.3 829.67,530.4 830.00,583.5 830.33,572.8 830.67,585.1 831.00,546.3 831.33,576.6 831.67,580.1 832.00,571.1 832.33,577.5 832.67,578.5 833.00,567.0 833.33,580.8 833.67,583.9 834.00,585.3 834.33,575.9 834.67,564.9 835.00,571.1 835.33,579.9 835.67,581.8 836.00,556.3 836.33,571.7 836.67,558.6 837.00,567.4 837.33,581.0 837.67,572.4 838.00,584.3 838.33,460.6 838.67,570.5 839.00,582.0 839.33,577.5 839.67,555.5 840.00,562.6 840.33,572.0 840.67,583.4 841.00,570.5 841.33,559.1 841.67,571.7 842.00,568.9 842.33,543.4 842.67,554.9 843.00,579.9 843.33,580.2 843.67,585.1 844.00,568.9 844.33,574.5 844.67,554.8 845.00,568.9 845.33,567.5 845.67,572.4 846.00,582.7 846.33,580.2 846.67,565.4 847.00,581.2 847.33,562.5 847.67,555.7 848.00,566.0 848.33,536.7 848.67,575.0 849.00,570.6 849.33,579.1 849.67,572.4 850.00,570.7 850.33,487.8 850.67,586.4 851.00,587.9 851.33,583.8 851.67,587.0 852.00,584.4 852.33,580.2 852.67,569.0 853.00,575.5 853.33,563.9 853.67,561.6 854.00,570.6 854.33,586.3 854.67,571.5 855.00,578.6 855.33,570.5 855.67,584.2 856.00,581.1 856.33,537.8 856.67,569.9 857.00,576.5 857.33,573.9 857.67,586.7 858.00,571.9 858.33,581.3 858.67,573.4 859.00,584.1 859.33,558.1 859.67,580.6 860.00,569.4 860.33,522.7 860.67,573.2 861.00,576.8 861.33,574.2 861.67,568.2 862.00,551.9 862.33,583.6 862.67,562.0 863.00,569.4 863.33,568.1 863.67,586.4 864.00,568.4 864.33,557.9 864.67,567.6 865.00,583.6 865.33,570.1 865.67,574.2 866.00,580.9 866.33,576.1 866.67,584.7 867.00,579.6 867.33,571.3 867.67,581.3 868.00,582.9 868.33,511.1 868.67,574.5 869.00,571.1 869.33,571.8 869.67,569.1 870.00,547.3 870.33,540.0 870.67,584.6 871.00,572.1 871.33,576.5 871.67,565.5 872.00,570.1 872.33,581.7 872.67,577.3 873.00,579.5 873.33,581.2 873.67,581.7 874.00,575.4 874.33,576.0 874.67,565.9 875.00,566.5 875.33,581.8 875.67,582.9 876.00,584.4 876.33,509.1 876.67,578.7 877.00,578.8 877.33,578.0 877.67,568.4 878.00,586.0 878.33,559.4 878.67,573.3 879.00,562.3 879.33,580.1 879.67,572.7 880.00,566.9 880.33,578.8 880.67,559.0 881.00,572.5 881.33,567.1 881.67,578.2 882.00,584.0 882.33,514.0 882.67,579.9 883.00,576.5 883.33,568.4 883.67,575.9 884.00,537.3 884.33,580.3 884.67,574.8 885.00,582.0 885.33,579.6 885.67,569.1 886.00,582.2 886.33,571.3 886.67,574.1 887.00,584.4 887.33,572.0 887.67,584.0 888.00,583.3 888.33,574.2 888.67,560.3 889.00,570.2 889.33,570.2 889.67,585.2 890.00,571.6 890.33,587.2 890.67,562.2 891.00,569.3 891.33,588.2 891.67,588.9 892.00,576.6 892.33,480.0 892.67,577.3 893.00,570.1 893.33,570.1 893.67,582.2 894.00,585.6 894.33,549.7 894.67,587.0 895.00,587.7 895.33,575.9 895.67,580.2 896.00,590.5 896.33,504.3 896.67,582.1 897.00,565.8 897.33,583.4 897.67,537.8 898.00,566.3 898.33,588.0 898.67,577.5 899.00,575.2 899.33,581.0 899.67,575.2 900.00,577.7 900.33,576.5 900.67,571.7 901.00,536.2 901.33,584.6 901.67,585.5 902.00,563.6 902.33,574.1 902.67,553.6 903.00,575.3 903.33,578.2 903.67,573.1 904.00,584.9 904.33,488.8 904.67,538.6 905.00,574.9 905.33,571.9 905.67,581.6 906.00,550.9 906.33,588.2 906.67,588.0 907.00,566.0 907.33,585.0 907.67,576.9 908.00,580.0 908.33,585.6 908.67,584.2 909.00,571.0 909.33,533.3 909.67,577.8 910.00,573.9 910.33,571.6 910.67,569.7 911.00,586.6 911.33,585.9 911.67,587.7 912.00,548.9 912.33,585.9 912.67,580.8 913.00,571.8 913.33,578.7 913.67,571.0 914.00,567.5 914.33,578.8 914.67,573.5 915.00,569.4 915.33,585.6 915.67,586.0 916.00,578.2 916.33,585.1 916.67,541.8 917.00,583.3 917.33,501.4 917.67,561.2 918.00,547.9 918.33,577.5 918.67,563.3 919.00,569.8 919.33,574.5 919.67,583.7 920.00,571.6 920.33,533.5 920.67,574.4 921.00,580.1 921.33,585.6 921.67,578.3 922.00,580.9 922.33,572.9 922.67,585.1 923.00,564.9 923.33,532.5 923.67,576.7 924.00,555.0 924.33,582.2 924.67,584.5 925.00,583.0 925.33,580.2 925.67,541.3 926.00,572.5 926.33,580.8 926.67,565.7 927.00,579.7 927.33,572.3 927.67,572.3 928.00,592.0 928.33,588.0 928.67,589.9 929.00,562.7 929.33,573.4 929.67,549.7 930.00,592.3 930.33,514.0 930.67,557.1 931.00,592.2 931.33,574.1 931.67,575.7 932.00,588.5 932.33,575.8 932.67,573.8 933.00,575.0 933.33,586.4 933.67,559.3 934.00,591.9 934.33,564.4 934.67,578.2 935.00,590.5 935.33,580.2 935.67,537.5 936.00,557.4 936.33,590.6 936.67,582.7 937.00,575.6 937.33,591.1 937.67,590.9 938.00,577.6 938.33,583.7 938.67,582.5 939.00,582.7 939.33,592.6 939.67,588.8 940.00,588.6 940.33,571.0 940.67,583.6 941.00,586.4 941.33,588.6 941.67,576.0" fill="none" stroke="#80fa08" stroke-width="1.1"/>
<rect x="158.5" y="622.5" width="4.5" height="4" fill="#e07040" />
</g>
<rect x="89" y="526.5" width="852" height="4.6" fill="#5ab8ec" />
<text x="90.5" y="558" font-size="15" fill="#e0e050" >A</text>
</svg>
</body></html>
